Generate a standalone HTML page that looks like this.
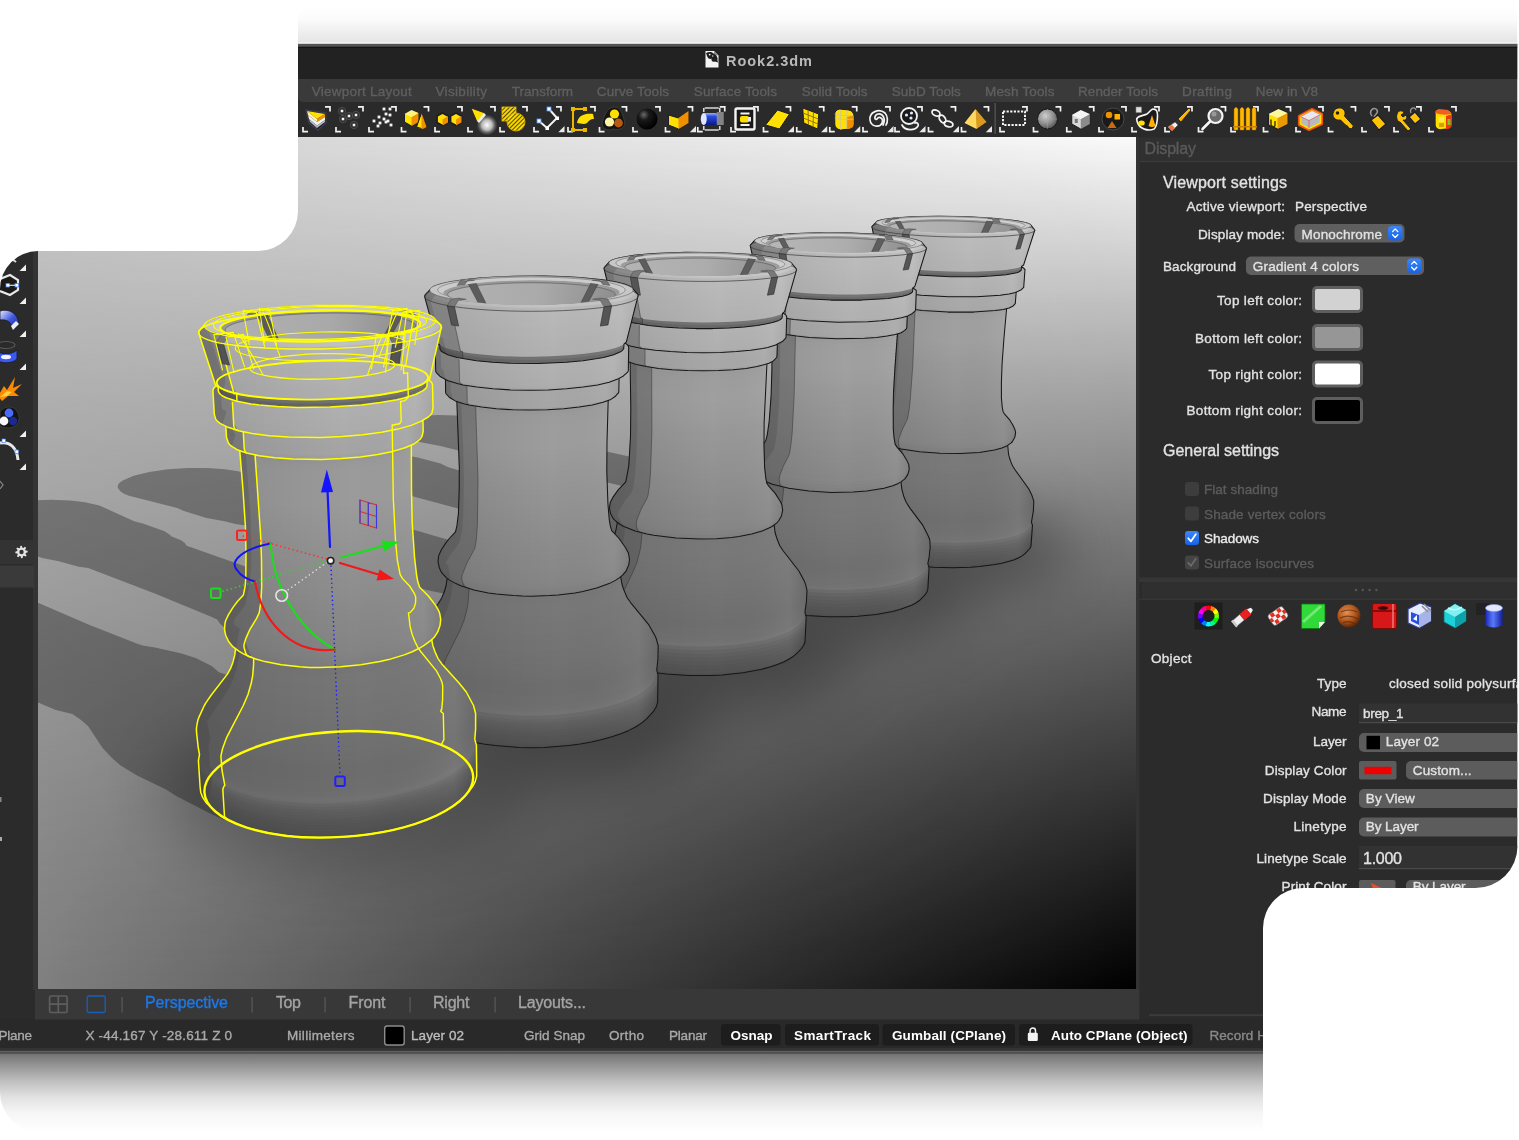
<!DOCTYPE html>
<html lang="en"><head><meta charset="utf-8"><title>Rook2.3dm</title>
<style>
html,body{margin:0;padding:0;background:#fff;}
body{width:1519px;height:1140px;overflow:hidden;position:relative;font-family:"Liberation Sans", Arial, sans-serif;}
svg{position:absolute;left:0;top:0;display:block}
svg text{font-family:"Liberation Sans", Arial, sans-serif;white-space:pre}
</style></head><body>
<svg width="1519" height="1140" viewBox="0 0 1519 1140">
<defs>
<linearGradient id="gTop" x1="0" y1="0" x2="0" y2="1"><stop offset="0" stop-color="#ffffff"/><stop offset="0.35" stop-color="#fbfbfb"/><stop offset="1" stop-color="#e3e3e3"/></linearGradient>
<linearGradient id="gBot" x1="0" y1="0" x2="0" y2="1"><stop offset="0" stop-color="#4a4a4a"/><stop offset="0.04" stop-color="#4a4a4a"/><stop offset="0.052" stop-color="#747474"/><stop offset="0.19" stop-color="#959595"/><stop offset="0.385" stop-color="#c0c0c0"/><stop offset="0.58" stop-color="#e2e2e2"/><stop offset="0.77" stop-color="#f6f6f6"/><stop offset="0.96" stop-color="#fefefe"/><stop offset="1" stop-color="#ffffff"/></linearGradient>
<linearGradient id="gBlue" x1="0" y1="0" x2="0" y2="1"><stop offset="0" stop-color="#3b86f7"/><stop offset="1" stop-color="#1763e6"/></linearGradient>
</defs>
<!-- top soft strip -->
<path d="M298,44 V18 A12,12 0 0 1 310,6 H1505.5 A12,12 0 0 1 1517.5,18 V44 Z" fill="url(#gTop)"/>
<!-- bottom shadow -->
<path d="M0,1050 H1300 V1132 H40 A40,40 0 0 1 0,1092 Z" fill="url(#gBot)"/>
<!-- window -->
<rect x="0" y="44" width="1517.5" height="1008" fill="#2b2b2b"/>
<rect x="298" y="44" width="1219.5" height="35" fill="#222222"/>
<rect x="298" y="42" width="1219.5" height="2" fill="#f2f2f2"/><rect x="298" y="43.8" width="1219.5" height="3" fill="#555555"/><rect x="298" y="46.8" width="1219.5" height="1.2" fill="#141414"/>
<path d="M298,79 H1517 V102 H303 A5,5 0 0 1 298,97 Z" fill="#3a3a3a"/>
<rect x="298" y="102" width="1219" height="35" fill="#2a2a2a"/>
<!-- left sidebar -->
<rect x="0" y="251" width="38" height="770" fill="#2b2b2b"/><rect x="33" y="251" width="5" height="739" fill="#343434"/>
<!-- right panel -->
<rect x="1136" y="137" width="381" height="884" fill="#2b2b2b"/>
<path d="M1139.5,161.5 V141 A4,4 0 0 1 1143.500,137.5 H1517 V161.500 Z" fill="#303030"/>
<rect x="1139" y="161" width="378" height="1.2" fill="#3b3b3b"/>
<rect x="1136" y="137" width="3.5" height="884" fill="#333333"/>
<!-- viewport tab row -->
<rect x="35" y="989" width="1104" height="31" fill="#383838"/>
<!-- status bar -->
<rect x="0" y="1019.5" width="1517" height="32" fill="#292929"/>
<rect x="0" y="1048" width="1517.5" height="3" fill="#333333"/><rect x="0" y="1050.8" width="1517.5" height="1.5" fill="#606060"/>

<defs>
<clipPath id="vpclip"><rect x="38" y="137" width="1098" height="852"/></clipPath>
<linearGradient id="bgB" x1="0" x2="1" y1="0" y2="0"><stop offset="0" stop-color="#969696"/><stop offset="1" stop-color="#000"/></linearGradient>
<linearGradient id="bgT" x1="0" x2="1" y1="0" y2="0"><stop offset="0" stop-color="#d2d2d2"/><stop offset="1" stop-color="#fff"/></linearGradient>
<linearGradient id="bgM" x1="0" x2="0" y1="0" y2="1"><stop offset="0" stop-color="#fff"/><stop offset="1" stop-color="#000"/></linearGradient>
<mask id="bgmask" maskUnits="userSpaceOnUse" x="38" y="137" width="1098" height="852"><rect x="38" y="137" width="1098" height="852" fill="url(#bgM)"/></mask>
<linearGradient id="gdark" x1="0" x2="0" y1="0" y2="1"><stop offset="0" stop-color="#000" stop-opacity="0.02"/><stop offset="0.31" stop-color="#000" stop-opacity="0.088"/><stop offset="0.6" stop-color="#000" stop-opacity="0.125"/><stop offset="0.8" stop-color="#000" stop-opacity="0.145"/><stop offset="1" stop-color="#000" stop-opacity="0.15"/></linearGradient>
<filter id="aoblur" x="-50%" y="-50%" width="200%" height="200%"><feGaussianBlur stdDeviation="30"/></filter>
<linearGradient id="lg4_0" gradientUnits="userSpaceOnUse" x1="840.9" x2="1033.9" y1="0" y2="0"><stop offset="0" stop-color="#000" stop-opacity=".09"/><stop offset=".6" stop-color="#000" stop-opacity="0"/><stop offset=".92" stop-color="#fff" stop-opacity=".05"/><stop offset="1" stop-color="#000" stop-opacity=".05"/></linearGradient>
<linearGradient id="lg4_1" gradientUnits="userSpaceOnUse" x1="868.1" x2="1015.6" y1="0" y2="0"><stop offset="0" stop-color="#000" stop-opacity=".09"/><stop offset=".6" stop-color="#000" stop-opacity="0"/><stop offset=".92" stop-color="#fff" stop-opacity=".05"/><stop offset="1" stop-color="#000" stop-opacity=".05"/></linearGradient>
<linearGradient id="lg4_2" gradientUnits="userSpaceOnUse" x1="882.6" x2="1016.4" y1="0" y2="0"><stop offset="0" stop-color="#000" stop-opacity=".09"/><stop offset=".6" stop-color="#000" stop-opacity="0"/><stop offset=".92" stop-color="#fff" stop-opacity=".05"/><stop offset="1" stop-color="#000" stop-opacity=".05"/></linearGradient>
<linearGradient id="lg4_3" gradientUnits="userSpaceOnUse" x1="876.3" x2="1025" y1="0" y2="0"><stop offset="0" stop-color="#000" stop-opacity=".09"/><stop offset=".6" stop-color="#000" stop-opacity="0"/><stop offset=".92" stop-color="#fff" stop-opacity=".05"/><stop offset="1" stop-color="#000" stop-opacity=".05"/></linearGradient>
<linearGradient id="lg4_4" gradientUnits="userSpaceOnUse" x1="871.9" x2="1034.8" y1="0" y2="0"><stop offset="0" stop-color="#000" stop-opacity=".09"/><stop offset=".6" stop-color="#000" stop-opacity="0"/><stop offset=".92" stop-color="#fff" stop-opacity=".05"/><stop offset="1" stop-color="#000" stop-opacity=".05"/></linearGradient>
<clipPath id="hole4"><ellipse cx="953.3" cy="226" rx="67.3" ry="6.8" transform="rotate(1.14 953.3 226)"/></clipPath>
<linearGradient id="in4" x1="0" x2="1" y1="0" y2="0"><stop offset="0" stop-color="#b6b6b6"/><stop offset="0.55" stop-color="#aeaeae"/><stop offset="1" stop-color="#919191"/></linearGradient>
<linearGradient id="lg3_0" gradientUnits="userSpaceOnUse" x1="723" x2="930.2" y1="0" y2="0"><stop offset="0" stop-color="#000" stop-opacity=".09"/><stop offset=".6" stop-color="#000" stop-opacity="0"/><stop offset=".92" stop-color="#fff" stop-opacity=".05"/><stop offset="1" stop-color="#000" stop-opacity=".05"/></linearGradient>
<linearGradient id="lg3_1" gradientUnits="userSpaceOnUse" x1="750.2" x2="909.2" y1="0" y2="0"><stop offset="0" stop-color="#000" stop-opacity=".09"/><stop offset=".6" stop-color="#000" stop-opacity="0"/><stop offset=".92" stop-color="#fff" stop-opacity=".05"/><stop offset="1" stop-color="#000" stop-opacity=".05"/></linearGradient>
<linearGradient id="lg3_2" gradientUnits="userSpaceOnUse" x1="763.3" x2="907.6" y1="0" y2="0"><stop offset="0" stop-color="#000" stop-opacity=".09"/><stop offset=".6" stop-color="#000" stop-opacity="0"/><stop offset=".92" stop-color="#fff" stop-opacity=".05"/><stop offset="1" stop-color="#000" stop-opacity=".05"/></linearGradient>
<linearGradient id="lg3_3" gradientUnits="userSpaceOnUse" x1="756.2" x2="916.5" y1="0" y2="0"><stop offset="0" stop-color="#000" stop-opacity=".09"/><stop offset=".6" stop-color="#000" stop-opacity="0"/><stop offset=".92" stop-color="#fff" stop-opacity=".05"/><stop offset="1" stop-color="#000" stop-opacity=".05"/></linearGradient>
<linearGradient id="lg3_4" gradientUnits="userSpaceOnUse" x1="750.2" x2="926.5" y1="0" y2="0"><stop offset="0" stop-color="#000" stop-opacity=".09"/><stop offset=".6" stop-color="#000" stop-opacity="0"/><stop offset=".92" stop-color="#fff" stop-opacity=".05"/><stop offset="1" stop-color="#000" stop-opacity=".05"/></linearGradient>
<clipPath id="hole3"><ellipse cx="838.3" cy="244.2" rx="72.7" ry="8.2" transform="rotate(0.87 838.3 244.2)"/></clipPath>
<linearGradient id="in3" x1="0" x2="1" y1="0" y2="0"><stop offset="0" stop-color="#b6b6b6"/><stop offset="0.55" stop-color="#aeaeae"/><stop offset="1" stop-color="#919191"/></linearGradient>
<linearGradient id="lg2_0" gradientUnits="userSpaceOnUse" x1="582.4" x2="807" y1="0" y2="0"><stop offset="0" stop-color="#000" stop-opacity=".09"/><stop offset=".6" stop-color="#000" stop-opacity="0"/><stop offset=".92" stop-color="#fff" stop-opacity=".05"/><stop offset="1" stop-color="#000" stop-opacity=".05"/></linearGradient>
<linearGradient id="lg2_1" gradientUnits="userSpaceOnUse" x1="609.4" x2="782.7" y1="0" y2="0"><stop offset="0" stop-color="#000" stop-opacity=".09"/><stop offset=".6" stop-color="#000" stop-opacity="0"/><stop offset=".92" stop-color="#fff" stop-opacity=".05"/><stop offset="1" stop-color="#000" stop-opacity=".05"/></linearGradient>
<linearGradient id="lg2_2" gradientUnits="userSpaceOnUse" x1="620.4" x2="777.5" y1="0" y2="0"><stop offset="0" stop-color="#000" stop-opacity=".09"/><stop offset=".6" stop-color="#000" stop-opacity="0"/><stop offset=".92" stop-color="#fff" stop-opacity=".05"/><stop offset="1" stop-color="#000" stop-opacity=".05"/></linearGradient>
<linearGradient id="lg2_3" gradientUnits="userSpaceOnUse" x1="612.1" x2="786.7" y1="0" y2="0"><stop offset="0" stop-color="#000" stop-opacity=".09"/><stop offset=".6" stop-color="#000" stop-opacity="0"/><stop offset=".92" stop-color="#fff" stop-opacity=".05"/><stop offset="1" stop-color="#000" stop-opacity=".05"/></linearGradient>
<linearGradient id="lg2_4" gradientUnits="userSpaceOnUse" x1="604" x2="796.6" y1="0" y2="0"><stop offset="0" stop-color="#000" stop-opacity=".09"/><stop offset=".6" stop-color="#000" stop-opacity="0"/><stop offset=".92" stop-color="#fff" stop-opacity=".05"/><stop offset="1" stop-color="#000" stop-opacity=".05"/></linearGradient>
<clipPath id="hole2"><ellipse cx="700.3" cy="265.9" rx="79.4" ry="10" transform="rotate(0.44 700.3 265.9)"/></clipPath>
<linearGradient id="in2" x1="0" x2="1" y1="0" y2="0"><stop offset="0" stop-color="#b4b4b4"/><stop offset="0.55" stop-color="#acacac"/><stop offset="1" stop-color="#909090"/></linearGradient>
<linearGradient id="lg1_0" gradientUnits="userSpaceOnUse" x1="410.5" x2="658.3" y1="0" y2="0"><stop offset="0" stop-color="#000" stop-opacity=".09"/><stop offset=".6" stop-color="#000" stop-opacity="0"/><stop offset=".92" stop-color="#fff" stop-opacity=".05"/><stop offset="1" stop-color="#000" stop-opacity=".05"/></linearGradient>
<linearGradient id="lg1_1" gradientUnits="userSpaceOnUse" x1="438" x2="629.5" y1="0" y2="0"><stop offset="0" stop-color="#000" stop-opacity=".09"/><stop offset=".6" stop-color="#000" stop-opacity="0"/><stop offset=".92" stop-color="#fff" stop-opacity=".05"/><stop offset="1" stop-color="#000" stop-opacity=".05"/></linearGradient>
<linearGradient id="lg1_2" gradientUnits="userSpaceOnUse" x1="445.2" x2="619.2" y1="0" y2="0"><stop offset="0" stop-color="#000" stop-opacity=".09"/><stop offset=".6" stop-color="#000" stop-opacity="0"/><stop offset=".92" stop-color="#fff" stop-opacity=".05"/><stop offset="1" stop-color="#000" stop-opacity=".05"/></linearGradient>
<linearGradient id="lg1_3" gradientUnits="userSpaceOnUse" x1="435.2" x2="628.7" y1="0" y2="0"><stop offset="0" stop-color="#000" stop-opacity=".09"/><stop offset=".6" stop-color="#000" stop-opacity="0"/><stop offset=".92" stop-color="#fff" stop-opacity=".05"/><stop offset="1" stop-color="#000" stop-opacity=".05"/></linearGradient>
<linearGradient id="lg1_4" gradientUnits="userSpaceOnUse" x1="424.6" x2="638.2" y1="0" y2="0"><stop offset="0" stop-color="#000" stop-opacity=".09"/><stop offset=".6" stop-color="#000" stop-opacity="0"/><stop offset=".92" stop-color="#fff" stop-opacity=".05"/><stop offset="1" stop-color="#000" stop-opacity=".05"/></linearGradient>
<clipPath id="hole1"><ellipse cx="531.5" cy="292.5" rx="88.1" ry="12.3" transform="rotate(-0.24 531.5 292.5)"/></clipPath>
<linearGradient id="in1" x1="0" x2="1" y1="0" y2="0"><stop offset="0" stop-color="#b2b2b2"/><stop offset="0.55" stop-color="#aaaaaa"/><stop offset="1" stop-color="#8f8f8f"/></linearGradient>
<linearGradient id="lg0_0" gradientUnits="userSpaceOnUse" x1="196.4" x2="476.8" y1="0" y2="0"><stop offset="0" stop-color="#000" stop-opacity=".09"/><stop offset=".6" stop-color="#000" stop-opacity="0"/><stop offset=".92" stop-color="#fff" stop-opacity=".05"/><stop offset="1" stop-color="#000" stop-opacity=".05"/></linearGradient>
<linearGradient id="lg0_1" gradientUnits="userSpaceOnUse" x1="224.5" x2="440.7" y1="0" y2="0"><stop offset="0" stop-color="#000" stop-opacity=".09"/><stop offset=".6" stop-color="#000" stop-opacity="0"/><stop offset=".92" stop-color="#fff" stop-opacity=".05"/><stop offset="1" stop-color="#000" stop-opacity=".05"/></linearGradient>
<linearGradient id="lg0_2" gradientUnits="userSpaceOnUse" x1="225.4" x2="423.2" y1="0" y2="0"><stop offset="0" stop-color="#000" stop-opacity=".09"/><stop offset=".6" stop-color="#000" stop-opacity="0"/><stop offset=".92" stop-color="#fff" stop-opacity=".05"/><stop offset="1" stop-color="#000" stop-opacity=".05"/></linearGradient>
<linearGradient id="lg0_3" gradientUnits="userSpaceOnUse" x1="212.9" x2="433" y1="0" y2="0"><stop offset="0" stop-color="#000" stop-opacity=".09"/><stop offset=".6" stop-color="#000" stop-opacity="0"/><stop offset=".92" stop-color="#fff" stop-opacity=".05"/><stop offset="1" stop-color="#000" stop-opacity=".05"/></linearGradient>
<linearGradient id="lg0_4" gradientUnits="userSpaceOnUse" x1="198.7" x2="441.4" y1="0" y2="0"><stop offset="0" stop-color="#000" stop-opacity=".09"/><stop offset=".6" stop-color="#000" stop-opacity="0"/><stop offset=".92" stop-color="#fff" stop-opacity=".05"/><stop offset="1" stop-color="#000" stop-opacity=".05"/></linearGradient>
<clipPath id="hole0"><ellipse cx="320.3" cy="325.9" rx="100.1" ry="15.5" transform="rotate(-1.28 320.3 325.9)"/></clipPath>
<linearGradient id="in0" x1="0" x2="1" y1="0" y2="0"><stop offset="0" stop-color="#b0b0b0"/><stop offset="0.55" stop-color="#a9a9a9"/><stop offset="1" stop-color="#8d8d8d"/></linearGradient>
</defs>
<g clip-path="url(#vpclip)">
<rect x="38" y="137" width="1098" height="852" fill="url(#bgB)"/>
<rect x="38" y="137" width="1098" height="852" fill="url(#bgT)" mask="url(#bgmask)"/>
<path d="M485.8,455.5 498.5,458.2 513.7,459.9 638.7,490.1 646.9,492.4 657.1,497.2 669.8,501.9 690,506.7 710,509.9 724.4,514.3 752.5,526.3 776,534.7 867.9,557.7 887.4,561.8 907.5,564.8 937.4,567.4 952.5,567.8 981,566.4 993.6,564.8 1004.6,562.6 1013.7,559.9 1020.7,556.8 1025.5,553.3 1027.9,549.6 1028,545.7 1025.8,541.8 1021.4,538 1015,534.3 1003.1,529.5 993.1,526.3 976.1,522 884.1,502.5 851.4,497.7 810.3,492.8 798,490.8 787,488.8 777.9,485.6 761.3,481.5 739.6,477.9 715,475.1 695.2,471.1 579,445.5 571.7,442.2 560.7,439.4 552.3,436.1 521.3,429.4 482.7,419 468.7,416.8 455.9,415.6 439,415.1 421.7,415.6 405.5,417.2 392,419.8 382.3,423.1 379.3,424.9 377.6,426.8 377.4,428.6 378.5,430.5 381,432.3 386.9,435.2 392.3,436.7 440.4,446.1 470.4,453.5ZM363.5,485.8 376.4,488.8 392.1,490.8 461.7,509.6 517.5,525.6 525.7,528.2 535.4,533.9 547.7,539.3 568.2,545 589,548.6 603.4,553.8 610.1,556.7 630.5,567.8 653.8,577.8 671.4,583.3 700.3,591 747.9,604.9 768.1,609.8 789.2,613.3 805,615.3 821.3,616.4 837.7,616.8 853.8,616.4 869.1,615.3 883.2,613.3 895.6,610.7 906.1,607.5 914.5,603.8 920.4,599.6 923.9,595.2 924.8,590.7 923.3,586.1 919.3,581.6 913.2,577.2 901.4,571.6 891.2,567.8 873.7,562.9 778.8,540 744.7,534.4 701.7,528.8 688.9,526.5 677.6,524.2 668.6,520.4 651.8,515.6 629.4,511.5 603.7,508.2 583.5,503.7 466.3,474.3 463.3,472.2 459.4,470.5 448.4,467.3 440.5,463.6 417.9,457.6 409.3,456 371.3,444.1 364.7,442.7 335.2,439.9 316.8,439.9 298.4,441.1 281.7,443.5 268.3,446.8 259.4,450.8 257.1,452.9 256.1,455.1 256.7,457.2 260.4,460.5 269.5,464.3 317.9,474.9 324.2,477.2 347.7,483.4ZM224.5,521.2 235.5,524.1 251.8,526.4 320.8,548.3 376.3,567 384.3,570.1 388.1,573.5 393.1,576.8 404.8,583.1 411.8,585.9 425.4,589.8 446.8,594.2 461,600.2 467.4,603.7 486.5,616.9 509,628.8 526.6,635.4 556.1,644.6 566.4,648.7 604.4,661.3 625.3,667.2 647.6,671.5 664.4,673.8 682,675.2 700,675.7 717.8,675.2 734.9,673.8 750.8,671.5 765.2,668.3 777.5,664.4 787.5,659.9 795.1,655 799.9,649.7 802,644.2 801.4,638.7 798.2,633.3 792.5,628.1 781,621.4 770.8,616.9 753,611 703.2,597.4 675.5,589 655.5,584 620,577.4 574.8,570.8 561.6,568 550,565.3 541.4,561 524.5,555.4 501.4,550.5 474.6,546.7 454.1,541.5 336.8,507.4 334.3,505 330.6,503 319.9,499.3 312.5,495 290.1,488.2 281.5,486.3 244.7,472.7 238.1,471.2 225,469.3 207.5,467.9 187.8,467.9 167.8,469.3 149.2,472 133.7,475.8 122.8,480.4 119.5,482.8 117.8,485.3 117.7,487.7 120.5,491.5 123.9,493.8 128.9,495.8 177.2,508.1 183.2,510.7 206.4,517.9ZM58.7,561.2 78.6,566.8 88.2,568 155.4,593.7 209.4,615.9 217.1,619.6 220.1,623.7 224.5,627.6 235.2,635.2 241.9,638.4 255.4,643.2 277.5,648.4 291.1,655.7 296.9,659.8 313.6,675.8 324.6,683.9 334.7,690.2 352,698.3 381.6,709.5 391.7,714.4 429.9,729.9 451.3,737.1 474.7,742.4 492.7,745.3 511.8,747.1 531.6,747.7 551.6,747.1 571,745.3 589.3,742.4 606.1,738.5 620.9,733.7 633.2,728.2 642.9,722.1 649.7,715.7 653.5,709 654.3,702.3 652.2,695.7 647.3,689.4 636.4,681.2 626.4,675.8 608.3,668.7 569.8,655.7 557.5,652.2 529.5,642.2 509.1,636.2 472.1,628.3 424.8,620.4 411.2,617.2 399.4,614 391.3,608.8 374.7,602.1 351,596.4 323.1,591.9 302.5,585.7 249.8,568 186.7,545.7 184.8,542.9 181.5,540.6 171.1,536.3 170.2,535 164.6,531.3 142.9,523.4 134.2,521.2 99.4,505.5 85,502.3 70.8,500.6 50.9,499.7 33,500.3 33,554.9 42.1,558ZM36.7,701.9 55.8,709.9 72.4,714.1 80.4,719.5 88,725.9 102.4,747.8 111.7,757.7 120.6,765.5 137,775.6 166.1,789.6 175.7,795.7 213.1,815.1 234.5,824.3 251.7,829.3 278.3,834.6 299.2,836.8 321.3,837.6 343.9,836.8 366.3,834.6 387.9,830.9 408,826 426,820 441.6,813.1 454.2,805.4 463.8,797.3 470.1,788.9 473,780.6 472.6,772.4 469,764.5 459.4,754.4 449.9,747.7 432,739 393.3,723.1 380.8,718.8 353,706.5 332.3,699.2 315.8,694.7 294.2,689.6 244.7,680 223.2,673.8 218.9,672.2 211.7,666 195.7,658 181.6,653.4 154.9,647.5 142.7,645.6 138,644.1 89.1,624.7 33,600.6 33,699.6Z" fill="#000" fill-opacity="0.3"/>
<rect x="38" y="137" width="1098" height="852" fill="url(#gdark)"/>
<g filter="url(#aoblur)" opacity="0.36">
<ellipse cx="346.7" cy="790.5" rx="187" ry="78.7" fill="#000" fill-opacity="0.6"/>
<ellipse cx="542.9" cy="711.1" rx="165.9" ry="74.7" fill="#000" fill-opacity="1"/>
<ellipse cx="701.9" cy="646.8" rx="150.4" ry="61.2" fill="#000" fill-opacity="1"/>
<ellipse cx="833.3" cy="593.7" rx="138.4" ry="50.7" fill="#000" fill-opacity="1"/>
<ellipse cx="943.8" cy="549.1" rx="128.6" ry="42.6" fill="#000" fill-opacity="1"/>
</g>
<g id="rook4">
<ellipse cx="935.8" cy="543" rx="92.6" ry="24.3" transform="rotate(2.99 935.8 543)" fill="#505050"/>
<ellipse cx="935.9" cy="541.4" rx="93.9" ry="24.6" transform="rotate(2.98 935.9 541.4)" fill="#525252"/>
<ellipse cx="936" cy="539.9" rx="95.3" ry="24.9" transform="rotate(2.97 936 539.9)" fill="#545454"/>
<ellipse cx="936.2" cy="536.8" rx="95.3" ry="24.8" transform="rotate(2.95 936.2 536.8)" fill="#565656"/>
<ellipse cx="936.4" cy="533.7" rx="95.4" ry="24.6" transform="rotate(2.93 936.4 533.7)" fill="#595959"/>
<ellipse cx="936.5" cy="530.7" rx="95.4" ry="24.5" transform="rotate(2.91 936.5 530.7)" fill="#5c5c5c"/>
<ellipse cx="936.7" cy="527.6" rx="95.5" ry="24.4" transform="rotate(2.89 936.7 527.6)" fill="#606060"/>
<ellipse cx="936.9" cy="524.5" rx="95.5" ry="24.2" transform="rotate(2.87 936.9 524.5)" fill="#656565"/>
<ellipse cx="937" cy="521.5" rx="95.6" ry="24.1" transform="rotate(2.85 937 521.5)" fill="#6c6c6c"/>
<ellipse cx="937.2" cy="519.1" rx="93.9" ry="23.5" transform="rotate(2.84 937.2 519.1)" fill="#757575"/>
<ellipse cx="937.3" cy="516" rx="94.4" ry="23.5" transform="rotate(2.82 937.3 516)" fill="#737373"/>
<ellipse cx="937.6" cy="512.4" rx="95.1" ry="23.5" transform="rotate(2.80 937.6 512.4)" fill="#727272"/>
<ellipse cx="937.8" cy="508.8" rx="95.5" ry="23.4" transform="rotate(2.78 937.8 508.8)" fill="#717171"/>
<ellipse cx="938" cy="505.1" rx="95.7" ry="23.3" transform="rotate(2.75 938 505.1)" fill="#717171"/>
<ellipse cx="938.2" cy="501.4" rx="95.9" ry="23.2" transform="rotate(2.73 938.2 501.4)" fill="#707070"/>
<ellipse cx="938.4" cy="497.8" rx="95.6" ry="22.9" transform="rotate(2.71 938.4 497.8)" fill="#707070"/>
<ellipse cx="938.6" cy="494.2" rx="94.2" ry="22.4" transform="rotate(2.69 938.6 494.2)" fill="#717171"/>
<ellipse cx="938.7" cy="490.8" rx="92.5" ry="21.9" transform="rotate(2.67 938.7 490.8)" fill="#727272"/>
<ellipse cx="938.9" cy="487.6" rx="90.7" ry="21.3" transform="rotate(2.65 938.9 487.6)" fill="#737373"/>
<ellipse cx="939" cy="485.6" rx="89.2" ry="20.8" transform="rotate(2.64 939 485.6)" fill="#737373"/>
<ellipse cx="939" cy="483.6" rx="87.6" ry="20.4" transform="rotate(2.63 939 483.6)" fill="#747474"/>
<ellipse cx="939.1" cy="481.6" rx="86" ry="19.9" transform="rotate(2.61 939.1 481.6)" fill="#747474"/>
<ellipse cx="939.2" cy="479.6" rx="84.3" ry="19.5" transform="rotate(2.60 939.2 479.6)" fill="#757575"/>
<ellipse cx="939.3" cy="477.6" rx="82.8" ry="19" transform="rotate(2.59 939.3 477.6)" fill="#757575"/>
<ellipse cx="939.4" cy="475.5" rx="81.3" ry="18.6" transform="rotate(2.58 939.4 475.5)" fill="#767676"/>
<ellipse cx="939.5" cy="473.5" rx="79.7" ry="18.1" transform="rotate(2.56 939.5 473.5)" fill="#767676"/>
<ellipse cx="939.6" cy="471.5" rx="78.1" ry="17.7" transform="rotate(2.55 939.6 471.5)" fill="#777777"/>
<ellipse cx="939.7" cy="469.5" rx="76.5" ry="17.2" transform="rotate(2.54 939.7 469.5)" fill="#777777"/>
<ellipse cx="939.7" cy="467.4" rx="75" ry="16.8" transform="rotate(2.53 939.7 467.4)" fill="#787878"/>
<ellipse cx="939.8" cy="465.3" rx="73.6" ry="16.5" transform="rotate(2.52 939.8 465.3)" fill="#787878"/>
<ellipse cx="940" cy="462.1" rx="71.9" ry="16" transform="rotate(2.50 940 462.1)" fill="#787878"/>
<ellipse cx="940.2" cy="458.6" rx="70.4" ry="15.5" transform="rotate(2.48 940.2 458.6)" fill="#797979"/>
<ellipse cx="940.4" cy="455" rx="69.1" ry="15.1" transform="rotate(2.45 940.4 455)" fill="#7a7a7a"/>
<ellipse cx="940.6" cy="451.4" rx="68.1" ry="14.7" transform="rotate(2.43 940.6 451.4)" fill="#7a7a7a"/>
<ellipse cx="940.7" cy="447.7" rx="67.4" ry="14.5" transform="rotate(2.41 940.7 447.7)" fill="#7a7a7a"/>
<ellipse cx="941" cy="444" rx="66.9" ry="14.2" transform="rotate(2.39 941 444)" fill="#7a7a7a"/>
<ellipse cx="941.2" cy="440.2" rx="66.6" ry="14" transform="rotate(2.37 941.2 440.2)" fill="#797979"/>
<ellipse cx="941.2" cy="439" rx="66.6" ry="14" transform="rotate(2.36 941.2 439)" fill="#787878"/>
<path d="M849.4,480.4 845.6,486.6 843.1,492.1 842.4,501.6 843.1,512.9 841.8,515.5 840.9,536.1 841.7,538.6 843.4,541.1 848.3,546.7 856,551.4 866.9,555.9 880.7,559.9 888.5,561.6 914.8,565.7 943.1,567.6 970.8,567.2 995.1,564.6 1002,563.2 1013.7,559.9 1018.3,558 1025,553.7 1029.9,548.5 1031,546.1 1032.5,525.1 1031.4,522.3 1033.4,510.8 1033.8,501.2 1031.9,495.3 1028.7,488.7 1015.5,470.5 1011.3,463.1 1008.5,453.8 1007.8,441.3 1007.3,439.9 1004.4,437.1 995.8,433.1 987.5,430.7 972,427.8 960.2,426.3 941.5,425 922.8,424.8 905.6,425.8 891.2,427.8 883.8,429.7 878.4,431.9 875.4,434.4 874.8,435.7 872.6,448 868.9,456.8 864.1,463.8Z" fill="url(#lg4_0)"/>
<path d="M842.5,503.5 843.5,513.8 841.7,515.9 840.9,534.6 841.6,538.4 846.6,545 852.7,549.6 860.2,553.3 868.5,556.4 880.7,559.9 879.3,557.1 880.2,538.2 881.4,535.4 881,525 881.5,513.7 885.1,502.4 894.7,481.6 897.8,473.2 900.7,461.7 902.3,448.8 874.7,436 872.6,448.3 868.2,458.7 863.3,465.8 848.3,482.9 844.5,489.2 843,492.5Z" fill="#4a4a4a" fill-opacity=".40"/>
<path d="M842.5,503.5 843.3,514 841.7,515.9 841,536.4 842.7,540.1 847.4,545.7 852.3,549.4 857.2,552 855.1,549.1 856,530.4 857.6,527.8 856.8,517.5 857.3,506.3 862.1,495.6 877.8,471.6 882.2,460.8 884.7,449.5 885.3,444.4 874.7,436 872.6,448.3 868.2,458.7 863.3,465.8 848.3,482.9 844.5,489.2 843,492.5Z" fill="#303030" fill-opacity=".18"/>
<path d="M849.4,480.4 845.6,486.6 843.1,492.1 842.4,501.6 843.1,512.9 841.8,515.5 840.9,536.1 841.7,538.6 843.4,541.1 845.8,544.2 848.3,546.7 856,551.4 866.9,555.9 880.7,559.9 888.5,561.6 905.7,564.6 914.8,565.7 933.6,567.2 943.1,567.6 952.5,567.8 970.8,567.2 979.4,566.6 995.1,564.6 1002,563.2 1013.7,559.9 1018.3,558 1022.1,555.9 1025,553.7 1029.9,548.5 1031,546.1 1032.5,525.1 1031.4,522.3 1033.4,510.8 1033.8,501.2 1031.9,495.3 1028.7,488.7 1015.5,470.5 1012.8,466.3 1011.3,463.1 1009.4,457.5 1008.5,453.8 1007.8,446.4 1007.8,441.3 1007.3,439.9 1004.4,437.1 1002.1,435.7 995.8,433.1 987.5,430.7 972,427.8 960.2,426.3 941.5,425 922.8,424.8 905.6,425.8 891.2,427.8 883.8,429.7 878.4,431.9 875.4,434.4 874.8,435.7 874.2,440.7 872.6,448 871.4,451.5 868.9,456.8 867.1,459.9 864.1,463.8Z" fill="none" stroke="#161616" stroke-width="1.05" stroke-linejoin="round"/>
<path d="M880.7,559.9 879.3,557.1 880.2,538.2 881.4,535.4 881,525 881.5,513.7 885.1,502.4 894.7,481.6 897.8,473.2 900.7,461.7 902.3,448.8" fill="none" stroke="#222" stroke-opacity="0.7" stroke-width="0.6"/>
<ellipse cx="941.3" cy="439" rx="68.2" ry="14.3" transform="rotate(2.36 941.3 439)" fill="#7e7e7e"/>
<ellipse cx="941.3" cy="438" rx="70.3" ry="14.7" transform="rotate(2.35 941.3 438)" fill="#818181"/>
<ellipse cx="941.4" cy="436.6" rx="71.9" ry="15" transform="rotate(2.35 941.4 436.6)" fill="#838383"/>
<ellipse cx="941.7" cy="433.1" rx="73.5" ry="15.2" transform="rotate(2.33 941.7 433.1)" fill="#868686"/>
<ellipse cx="941.8" cy="430.1" rx="73.9" ry="15.2" transform="rotate(2.31 941.8 430.1)" fill="#888888"/>
<ellipse cx="942" cy="427.3" rx="73.1" ry="14.9" transform="rotate(2.29 942 427.3)" fill="#898989"/>
<ellipse cx="942.1" cy="424.6" rx="71.6" ry="14.5" transform="rotate(2.27 942.1 424.6)" fill="#8a8a8a"/>
<ellipse cx="942.2" cy="421.9" rx="69.8" ry="14" transform="rotate(2.26 942.2 421.9)" fill="#8a8a8a"/>
<ellipse cx="942.4" cy="419.3" rx="68.1" ry="13.6" transform="rotate(2.24 942.4 419.3)" fill="#8b8b8b"/>
<ellipse cx="942.4" cy="417.7" rx="66.7" ry="13.3" transform="rotate(2.23 942.4 417.7)" fill="#8b8b8b"/>
<ellipse cx="942.5" cy="416.1" rx="65.2" ry="12.9" transform="rotate(2.23 942.5 416.1)" fill="#8c8c8c"/>
<ellipse cx="942.6" cy="414.6" rx="63.7" ry="12.6" transform="rotate(2.22 942.6 414.6)" fill="#8c8c8c"/>
<ellipse cx="942.6" cy="413" rx="62.2" ry="12.2" transform="rotate(2.21 942.6 413)" fill="#8d8d8d"/>
<ellipse cx="942.8" cy="410.5" rx="60.6" ry="11.8" transform="rotate(2.19 942.8 410.5)" fill="#8d8d8d"/>
<ellipse cx="942.9" cy="407.9" rx="59.8" ry="11.6" transform="rotate(2.18 942.9 407.9)" fill="#8e8e8e"/>
<ellipse cx="943.1" cy="405" rx="59.2" ry="11.4" transform="rotate(2.16 943.1 405)" fill="#8f8f8f"/>
<ellipse cx="943.2" cy="402" rx="58.7" ry="11.2" transform="rotate(2.14 943.2 402)" fill="#909090"/>
<ellipse cx="943.4" cy="399" rx="58.2" ry="11" transform="rotate(2.13 943.4 399)" fill="#909090"/>
<ellipse cx="943.6" cy="395.8" rx="57.9" ry="10.9" transform="rotate(2.11 943.6 395.8)" fill="#919191"/>
<ellipse cx="943.7" cy="392.7" rx="57.7" ry="10.7" transform="rotate(2.09 943.7 392.7)" fill="#929292"/>
<ellipse cx="943.9" cy="389.6" rx="57.5" ry="10.6" transform="rotate(2.07 943.9 389.6)" fill="#939393"/>
<ellipse cx="944.1" cy="386.6" rx="57.3" ry="10.5" transform="rotate(2.05 944.1 386.6)" fill="#949494"/>
<ellipse cx="944.3" cy="383.5" rx="57.2" ry="10.4" transform="rotate(2.04 944.3 383.5)" fill="#949494"/>
<ellipse cx="944.4" cy="380.4" rx="57.1" ry="10.3" transform="rotate(2.02 944.4 380.4)" fill="#959595"/>
<ellipse cx="944.6" cy="377.4" rx="57" ry="10.2" transform="rotate(2.00 944.6 377.4)" fill="#969696"/>
<ellipse cx="944.8" cy="374.3" rx="56.9" ry="10.1" transform="rotate(1.98 944.8 374.3)" fill="#969696"/>
<ellipse cx="944.9" cy="371.2" rx="56.8" ry="10" transform="rotate(1.96 944.9 371.2)" fill="#979797"/>
<ellipse cx="945.1" cy="368.2" rx="56.7" ry="9.9" transform="rotate(1.95 945.1 368.2)" fill="#989898"/>
<ellipse cx="945.3" cy="365.1" rx="56.7" ry="9.8" transform="rotate(1.93 945.3 365.1)" fill="#989898"/>
<ellipse cx="945.5" cy="362" rx="56.7" ry="9.7" transform="rotate(1.91 945.5 362)" fill="#999999"/>
<ellipse cx="945.6" cy="358.9" rx="56.7" ry="9.6" transform="rotate(1.89 945.6 358.9)" fill="#9a9a9a"/>
<ellipse cx="945.8" cy="355.8" rx="56.7" ry="9.5" transform="rotate(1.88 945.8 355.8)" fill="#9a9a9a"/>
<ellipse cx="946" cy="352.7" rx="56.7" ry="9.4" transform="rotate(1.86 946 352.7)" fill="#9b9b9b"/>
<ellipse cx="946.2" cy="349.6" rx="56.8" ry="9.3" transform="rotate(1.84 946.2 349.6)" fill="#9c9c9c"/>
<ellipse cx="946.3" cy="346.6" rx="56.8" ry="9.3" transform="rotate(1.82 946.3 346.6)" fill="#9d9d9d"/>
<ellipse cx="946.5" cy="343.5" rx="56.9" ry="9.2" transform="rotate(1.80 946.5 343.5)" fill="#9e9e9e"/>
<ellipse cx="946.7" cy="340.4" rx="57" ry="9.1" transform="rotate(1.79 946.7 340.4)" fill="#9e9e9e"/>
<ellipse cx="946.9" cy="337.2" rx="57.1" ry="9" transform="rotate(1.77 946.9 337.2)" fill="#9f9f9f"/>
<ellipse cx="947" cy="334.1" rx="57.2" ry="8.9" transform="rotate(1.75 947 334.1)" fill="#a0a0a0"/>
<ellipse cx="947.2" cy="331" rx="57.3" ry="8.9" transform="rotate(1.73 947.2 331)" fill="#a0a0a0"/>
<ellipse cx="947.4" cy="327.9" rx="57.3" ry="8.8" transform="rotate(1.72 947.4 327.9)" fill="#a0a0a0"/>
<ellipse cx="947.6" cy="324.8" rx="57.4" ry="8.7" transform="rotate(1.70 947.6 324.8)" fill="#a0a0a0"/>
<ellipse cx="947.7" cy="321.7" rx="57.5" ry="8.6" transform="rotate(1.68 947.7 321.7)" fill="#a0a0a0"/>
<ellipse cx="947.9" cy="318.6" rx="57.6" ry="8.6" transform="rotate(1.66 947.9 318.6)" fill="#a0a0a0"/>
<ellipse cx="948.1" cy="315.4" rx="57.7" ry="8.5" transform="rotate(1.64 948.1 315.4)" fill="#a0a0a0"/>
<ellipse cx="948.3" cy="312.3" rx="57.9" ry="8.4" transform="rotate(1.63 948.3 312.3)" fill="#9f9f9f"/>
<ellipse cx="948.5" cy="309.2" rx="58" ry="8.3" transform="rotate(1.61 948.5 309.2)" fill="#9e9e9e"/>
<ellipse cx="948.6" cy="306.1" rx="58.1" ry="8.3" transform="rotate(1.59 948.6 306.1)" fill="#9b9b9b"/>
<ellipse cx="948.8" cy="302.9" rx="58.3" ry="8.2" transform="rotate(1.57 948.8 302.9)" fill="#979797"/>
<path d="M884,402.4 882.6,407 875,414.8 869.7,422.4 868.1,426.5 868.1,428 868.3,431 870.4,436.1 871.8,437.6 875.3,440.3 879.7,442.8 886.7,445.5 901.3,449.1 919.6,451.8 940,453.3 960.5,453.5 979.3,452.4 994.5,450.1 1001.9,447.9 1006.7,445.9 1010.6,443.4 1012.2,442 1014.9,437.1 1015.6,432.6 1015,429.7 1013.1,425.5 1009.9,420.2 1004.4,413.8 1003.1,411.7 1002.2,407 1001.4,397.7 1002.1,363.6 1007,304.3 1006.6,303.5 1002.1,301 989.3,298.1 970.6,295.9 948.9,294.7 927.2,294.7 908.6,295.9 895.8,298.1 891.1,300.3 890.6,301 889.7,341.4 888.7,362.9 886.2,390.2Z" fill="url(#lg4_1)"/>
<path d="M882.2,408.1 874.4,416.4 870.6,421.5 868.9,424.1 868.1,426.7 868.3,429.9 870.4,435.9 874.5,439.8 880.5,443.1 892.3,447 901.3,449.1 899.3,447.2 898.6,443.8 898.5,440.7 899.1,437.8 902.6,428.9 907.5,418.9 909.1,409.9 910.2,400.3 912.8,365.7 915.1,308.7 890.6,301.2 889,356.7 886.2,390.2 884.6,399.7Z" fill="#4a4a4a" fill-opacity=".40"/>
<path d="M882.2,408.1 874.4,416.4 868.9,424.1 868.1,426.7 868.4,431.3 870.6,436.3 873.4,439 878.6,442.2 883.8,444.5 880.9,442.1 879.8,438.9 879.7,435.9 880.4,433 881.9,430.1 885.2,424.5 890.5,417.7 892,415.1 892.8,412.4 894.6,403.2 895.8,393.7 898.4,359.5 900.1,306.1 890.6,301.2 889,356.7 886.2,390.2 884.6,399.7Z" fill="#303030" fill-opacity=".18"/>
<path d="M884,402.4 882.6,407 881.1,409 875,414.8 869.7,422.4 868.1,426.5 868.1,428 868.3,431 870.4,436.1 871.8,437.6 875.3,440.3 879.7,442.8 886.7,445.5 901.3,449.1 919.6,451.8 940,453.3 960.5,453.5 979.3,452.4 994.5,450.1 1001.9,447.9 1006.7,445.9 1010.6,443.4 1012.2,442 1014.9,437.1 1015.6,432.6 1015,429.7 1013.1,425.5 1009.9,420.2 1004.4,413.8 1003.1,411.7 1002.2,407 1001.4,397.7 1001.4,382.2 1002.1,363.6 1003.9,338.8 1007,304.3 1006.6,303.5 1005.7,302.7 1002.1,301 996.6,299.5 989.3,298.1 970.6,295.9 948.9,294.7 927.2,294.7 908.6,295.9 901.3,296.9 895.8,298.1 892.1,299.5 891.1,300.3 890.6,301 889.7,341.4 888.7,362.9 886.2,390.2Z" fill="none" stroke="#161616" stroke-width="1.05" stroke-linejoin="round"/>
<path d="M901.3,449.1 899.3,447.2 898.6,443.8 898.5,440.7 899.1,437.8 902.6,428.9 907.5,418.9 909.1,409.9 910.2,400.3 912.8,365.7 915.1,308.7" fill="none" stroke="#222" stroke-opacity="0.7" stroke-width="0.6"/>
<ellipse cx="948.9" cy="303" rx="64.8" ry="9.1" transform="rotate(1.57 948.9 303)" fill="#a1a1a1"/>
<ellipse cx="949" cy="301.2" rx="66.5" ry="9.3" transform="rotate(1.56 949 301.2)" fill="#a9a9a9"/>
<ellipse cx="949.2" cy="297.5" rx="66.5" ry="9.2" transform="rotate(1.54 949.2 297.5)" fill="#aaaaaa"/>
<ellipse cx="949.4" cy="293.7" rx="66.6" ry="9" transform="rotate(1.52 949.4 293.7)" fill="#aaaaaa"/>
<ellipse cx="949.7" cy="289.9" rx="66.6" ry="8.9" transform="rotate(1.50 949.7 289.9)" fill="#ababab"/>
<ellipse cx="949.8" cy="287.4" rx="66.6" ry="8.8" transform="rotate(1.48 949.8 287.4)" fill="#ababab"/>
<path d="M925.1,278.6 899.5,280.3 889.2,282.2 885,283.7 883.2,285.4 882.7,300 884.9,302.7 888.1,304.5 893.7,306.3 901.5,307.9 922.5,310.6 948,312.1 973.6,312.1 995.2,310.6 1003.3,309.4 1009.2,307.9 1012.7,306.3 1015.3,303.7 1016.4,288.9 1014.8,287.1 1007.7,284.5 995.9,282.2 974.6,279.8 949.8,278.6Z" fill="url(#lg4_2)"/>
<path d="M883.1,300.6 884.8,302.6 886.8,303.9 890.8,305.4 896.7,307 911.2,309.4 910.3,307.8 911.1,293.6 883.2,285.6 882.6,299.1Z" fill="#4a4a4a" fill-opacity=".40"/>
<path d="M882.7,300.1 885.1,302.8 886.4,303.7 894.6,306.5 893.3,304.8 893.9,290.8 883.2,285.6Z" fill="#303030" fill-opacity=".18"/>
<path d="M925.1,278.6 908.7,279.4 899.5,280.3 889.2,282.2 885,283.7 883.2,285.4 882.7,300 884.9,302.7 888.1,304.5 893.7,306.3 901.5,307.9 922.5,310.6 948,312.1 973.6,312.1 995.2,310.6 1003.3,309.4 1009.2,307.9 1012.7,306.3 1015.3,303.7 1016.4,288.9 1014.8,287.1 1007.7,284.5 995.9,282.2 974.6,279.8 949.8,278.6Z" fill="none" stroke="#161616" stroke-width="1.05" stroke-linejoin="round"/>
<path d="M911.2,309.4 910.3,307.8 911.1,293.6" fill="none" stroke="#222" stroke-opacity="0.7" stroke-width="0.6"/>
<ellipse cx="949.9" cy="287.4" rx="70.4" ry="9.3" transform="rotate(1.48 949.9 287.4)" fill="#a7a7a7"/>
<ellipse cx="949.9" cy="286.3" rx="72.4" ry="9.6" transform="rotate(1.48 949.9 286.3)" fill="#adadad"/>
<ellipse cx="950" cy="284.9" rx="73.8" ry="9.7" transform="rotate(1.47 950 284.9)" fill="#b2b2b2"/>
<ellipse cx="950.2" cy="281.6" rx="73.9" ry="9.6" transform="rotate(1.45 950.2 281.6)" fill="#b2b2b2"/>
<ellipse cx="950.4" cy="278.2" rx="73.9" ry="9.5" transform="rotate(1.43 950.4 278.2)" fill="#b3b3b3"/>
<ellipse cx="950.6" cy="274.8" rx="73.9" ry="9.3" transform="rotate(1.41 950.6 274.8)" fill="#b4b4b4"/>
<ellipse cx="950.8" cy="271.5" rx="74" ry="9.2" transform="rotate(1.39 950.8 271.5)" fill="#b5b5b5"/>
<ellipse cx="951" cy="268.1" rx="74" ry="9.1" transform="rotate(1.37 951 268.1)" fill="#b6b6b6"/>
<path d="M923.6,259 895.2,260.8 883.8,262.7 879.1,264.2 877.1,265.9 876.3,283.6 878.4,286 883.7,289 889.8,290.8 898.2,292.5 921.1,295.2 948.9,296.8 976.8,296.8 1000.3,295.2 1009.1,294 1015.5,292.5 1021.3,289.7 1023.7,287.4 1025,269.5 1023.1,267.7 1018.4,265.9 1002,262.7 978.3,260.3 950.9,259Z" fill="url(#lg4_3)"/>
<path d="M876.9,284.3 878.3,285.9 882.3,288.3 886.7,289.9 893.1,291.5 908.8,294 907,291.7 907.8,274.4 877.1,266.2 876.3,282.6Z" fill="#4a4a4a" fill-opacity=".40"/>
<path d="M876.4,283.7 878.6,286.1 881.9,288.1 890.7,291 888,288.6 888.8,271.6 877.1,266.2Z" fill="#303030" fill-opacity=".18"/>
<path d="M923.6,259 905.4,259.9 895.2,260.8 883.8,262.7 879.1,264.2 877.1,265.9 876.3,283.6 878.4,286 883.7,289 889.8,290.8 898.2,292.5 921.1,295.2 948.9,296.8 976.8,296.8 1000.3,295.2 1009.1,294 1015.5,292.5 1021.3,289.7 1023.7,287.4 1025,269.5 1023.1,267.7 1018.4,265.9 1011.3,264.2 1002,262.7 978.3,260.3 950.9,259Z" fill="none" stroke="#161616" stroke-width="1.05" stroke-linejoin="round"/>
<path d="M908.8,294 907,291.7 907.8,274.4" fill="none" stroke="#222" stroke-opacity="0.7" stroke-width="0.6"/>
<ellipse cx="950.9" cy="268.1" rx="70.4" ry="8.6" transform="rotate(1.37 950.9 268.1)" fill="#6a6a6a"/>
<ellipse cx="951.1" cy="265.4" rx="70.5" ry="8.6" transform="rotate(1.36 951.1 265.4)" fill="#757575"/>
<ellipse cx="951.2" cy="262.7" rx="70.5" ry="8.5" transform="rotate(1.34 951.2 262.7)" fill="#818181"/>
<ellipse cx="951.3" cy="262.8" rx="72.5" ry="8.7" transform="rotate(1.34 951.3 262.8)" fill="#b5b5b5"/>
<ellipse cx="951.4" cy="260.2" rx="73.2" ry="8.7" transform="rotate(1.33 951.4 260.2)" fill="#b5b5b5"/>
<ellipse cx="951.6" cy="257.5" rx="73.9" ry="8.7" transform="rotate(1.31 951.6 257.5)" fill="#b6b6b6"/>
<ellipse cx="951.8" cy="254.9" rx="74.6" ry="8.7" transform="rotate(1.30 951.8 254.9)" fill="#b6b6b6"/>
<ellipse cx="951.9" cy="252.3" rx="75.3" ry="8.6" transform="rotate(1.28 951.9 252.3)" fill="#b7b7b7"/>
<ellipse cx="952.1" cy="249.7" rx="76" ry="8.6" transform="rotate(1.27 952.1 249.7)" fill="#b8b8b8"/>
<ellipse cx="952.2" cy="247.1" rx="76.7" ry="8.6" transform="rotate(1.25 952.2 247.1)" fill="#b8b8b8"/>
<ellipse cx="952.4" cy="244.4" rx="77.4" ry="8.6" transform="rotate(1.24 952.4 244.4)" fill="#b9b9b9"/>
<ellipse cx="952.5" cy="241.8" rx="78.1" ry="8.5" transform="rotate(1.23 952.5 241.8)" fill="#bababa"/>
<ellipse cx="952.7" cy="239.2" rx="78.8" ry="8.5" transform="rotate(1.21 952.7 239.2)" fill="#bababa"/>
<ellipse cx="952.9" cy="236.5" rx="79.5" ry="8.5" transform="rotate(1.20 952.9 236.5)" fill="#bbbbbb"/>
<ellipse cx="953" cy="233.9" rx="80.2" ry="8.4" transform="rotate(1.18 953 233.9)" fill="#bbbbbb"/>
<ellipse cx="953.2" cy="231.3" rx="80.9" ry="8.4" transform="rotate(1.17 953.2 231.3)" fill="#bcbcbc"/>
<ellipse cx="953.3" cy="228.6" rx="81.6" ry="8.4" transform="rotate(1.15 953.3 228.6)" fill="#bdbdbd"/>
<ellipse cx="953.4" cy="226.4" rx="79.6" ry="8.1" transform="rotate(1.14 953.4 226.4)" fill="#c8c8c8"/>
<ellipse cx="953.5" cy="224.1" rx="77.6" ry="7.8" transform="rotate(1.12 953.5 224.1)" fill="#cacaca"/>
<path d="M871.9,226.6 878.9,261.6 880.7,263.1 880.6,266.9 882.8,268.6 884.8,269.5 894.8,272 909.9,274.1 922.3,275.3 950,276.7 978,276.7 990.5,276.1 1006.1,274.7 1016.6,272.7 1018.8,272 1021.2,270.3 1021.5,266.5 1023.6,265 1034.8,230 1030.5,224.6 1027,223 1016.7,220.8 995.2,218.4 967.9,216.8 938.8,216.2 911.7,216.8 890.5,218.4 883,219.5 878.1,220.8 876.7,221.5Z" fill="url(#lg4_4)"/>
<path d="M871.9,226.7 878.8,260.9 879.6,262.3 880.7,263 880.6,266.4 881.3,267.7 884.1,269.1 893.1,271.6 909.9,274.1 910.2,268.7 909,268.4 905.7,234.5 908.3,229.6 876,222.4Z" fill="#4a4a4a" fill-opacity=".40"/>
<path d="M871.9,226.7 879,261.7 880.7,263.1 880.7,267 884,269.1 891.9,271.3 892.1,266 890.3,265.2 884.7,231.8 888.3,227.1 876,222.4Z" fill="#303030" fill-opacity=".18"/>
<path d="M871.9,226.6 878.9,261.6 880.7,263.1 880.6,266.9 882.8,268.6 884.8,269.5 894.8,272 909.9,274.1 922.3,275.3 950,276.7 978,276.7 990.5,276.1 1006.1,274.7 1016.6,272.7 1018.8,272 1021.2,270.3 1021.5,266.5 1023.6,265 1034.8,230 1030.5,224.6 1027,223 1016.7,220.8 995.2,218.4 967.9,216.8 938.8,216.2 911.7,216.8 890.5,218.4 883,219.5 878.1,220.8 876.7,221.5Z" fill="none" stroke="#161616" stroke-width="1.05" stroke-linejoin="round"/>
<path d="M909.9,274.1 910.2,268.7 909,268.9 905.7,234.5 908.3,229.6" fill="none" stroke="#222" stroke-opacity="0.7" stroke-width="0.6"/>
<ellipse cx="953.3" cy="228.6" rx="81.6" ry="8.4" transform="rotate(1.15 953.3 228.6)" fill="none" stroke="#3a3a3a" stroke-width="0.7"/>
<ellipse cx="953.5" cy="224.1" rx="77.6" ry="7.8" transform="rotate(1.12 953.5 224.1)" fill="#cacaca" stroke="#555" stroke-width="0.5"/>
<ellipse cx="953.5" cy="224.1" rx="71.6" ry="7.2" transform="rotate(1.12 953.5 224.1)" fill="#d0d0d0" stroke="#707070" stroke-width="0.6"/>
<g clip-path="url(#hole4)">
<ellipse cx="953.3" cy="226" rx="68.1" ry="6.9" transform="rotate(1.14 953.3 226)" fill="#9e9e9e"/>
<ellipse cx="953.2" cy="227.5" rx="64" ry="6.5" transform="rotate(1.14 953.2 227.5)" fill="url(#in4)" stroke="#555" stroke-width="0.6"/>
<ellipse cx="952.9" cy="231.9" rx="61.2" ry="6.4" transform="rotate(1.17 952.9 231.9)" fill="url(#in4)"/>
<ellipse cx="952.6" cy="236.2" rx="58.6" ry="6.2" transform="rotate(1.19 952.6 236.2)" fill="url(#in4)"/>
<ellipse cx="952.3" cy="240.6" rx="56.1" ry="6.1" transform="rotate(1.22 952.3 240.6)" fill="url(#in4)"/>
<ellipse cx="952" cy="245" rx="53.6" ry="6" transform="rotate(1.24 952 245)" fill="url(#in4)"/>
<ellipse cx="951.8" cy="249.3" rx="51.2" ry="5.8" transform="rotate(1.27 951.8 249.3)" fill="url(#in4)"/>
<ellipse cx="951.5" cy="253.6" rx="48.8" ry="5.6" transform="rotate(1.29 951.5 253.6)" fill="url(#in4)"/>
<ellipse cx="951.5" cy="253.6" rx="48.8" ry="5.6" transform="rotate(1.29 951.5 253.6)" fill="#a2a2a2" stroke="#666" stroke-width="0.5"/>
<path d="M898.7,218.6 894.1,219.2 905.4,238.7 909.6,238.1Z" fill="#5e5e5e" stroke="#3a3a3a" stroke-width="0.5"/>
<path d="M994.5,219.2 987.8,218.6 978.9,238.1 984.9,238.7Z" fill="#5e5e5e" stroke="#3a3a3a" stroke-width="0.5"/>
</g>
<path d="M898.7,218.6 892.9,218.1 889.3,222.1 884.7,222.7 888.3,218.6 894.1,219.2Z" fill="#787878" stroke="#3a3a3a" stroke-width="0.4"/>
<path d="M994.5,219.2 998.4,218.6 1000.4,222.7 993.8,222.1 991.8,218.1 987.8,218.6Z" fill="#787878" stroke="#3a3a3a" stroke-width="0.4"/>
<path d="M909.4,228.7 905,229.3 902.2,234.2 908.9,234.8 911.7,229.9 916.2,229.3Z" fill="#7a7a7a" stroke="#3a3a3a" stroke-width="0.4"/>
<path d="M902.4,234.2 909.1,234.8 910.5,249.3 903.8,248.6Z" fill="#565656" stroke="#2a2a2a" stroke-width="0.6"/>
<path d="M1010.2,229.3 1016.7,229.9 1020.2,234.8 1024.7,234.2 1021.2,229.3 1014.7,228.7Z" fill="#7a7a7a" stroke="#3a3a3a" stroke-width="0.4"/>
<path d="M1020,234.8 1024.4,234.2 1020.2,248.6 1015.8,249.3Z" fill="#565656" stroke="#2a2a2a" stroke-width="0.6"/>
</g>
<g id="rook3">
<ellipse cx="825.3" cy="587.6" rx="99.6" ry="29" transform="rotate(2.30 825.3 587.6)" fill="#505050"/>
<ellipse cx="825.4" cy="585.9" rx="101.1" ry="29.3" transform="rotate(2.29 825.4 585.9)" fill="#525252"/>
<ellipse cx="825.4" cy="584.3" rx="102.6" ry="29.7" transform="rotate(2.28 825.4 584.3)" fill="#545454"/>
<ellipse cx="825.6" cy="581" rx="102.6" ry="29.5" transform="rotate(2.27 825.6 581)" fill="#565656"/>
<ellipse cx="825.7" cy="577.7" rx="102.7" ry="29.3" transform="rotate(2.25 825.7 577.7)" fill="#595959"/>
<ellipse cx="825.8" cy="574.3" rx="102.7" ry="29.2" transform="rotate(2.24 825.8 574.3)" fill="#5c5c5c"/>
<ellipse cx="826" cy="571" rx="102.8" ry="29" transform="rotate(2.22 826 571)" fill="#606060"/>
<ellipse cx="826.1" cy="567.7" rx="102.8" ry="28.9" transform="rotate(2.21 826.1 567.7)" fill="#656565"/>
<ellipse cx="826.2" cy="564.4" rx="102.9" ry="28.7" transform="rotate(2.19 826.2 564.4)" fill="#6c6c6c"/>
<ellipse cx="826.3" cy="561.8" rx="101" ry="28" transform="rotate(2.18 826.3 561.8)" fill="#757575"/>
<ellipse cx="826.4" cy="558.5" rx="101.7" ry="28.1" transform="rotate(2.17 826.4 558.5)" fill="#737373"/>
<ellipse cx="826.5" cy="555.9" rx="102.2" ry="28" transform="rotate(2.15 826.5 555.9)" fill="#727272"/>
<ellipse cx="826.6" cy="553.3" rx="102.5" ry="28" transform="rotate(2.14 826.6 553.3)" fill="#727272"/>
<ellipse cx="826.8" cy="550.7" rx="102.8" ry="27.9" transform="rotate(2.13 826.8 550.7)" fill="#717171"/>
<ellipse cx="826.9" cy="548" rx="103" ry="27.9" transform="rotate(2.12 826.9 548)" fill="#717171"/>
<ellipse cx="827" cy="545.3" rx="103.1" ry="27.7" transform="rotate(2.11 827 545.3)" fill="#707070"/>
<ellipse cx="827.1" cy="542.7" rx="103.3" ry="27.6" transform="rotate(2.10 827.1 542.7)" fill="#707070"/>
<ellipse cx="827.2" cy="538.8" rx="102.9" ry="27.3" transform="rotate(2.08 827.2 538.8)" fill="#707070"/>
<ellipse cx="827.3" cy="535" rx="101.5" ry="26.8" transform="rotate(2.06 827.3 535)" fill="#717171"/>
<ellipse cx="827.5" cy="531.3" rx="99.7" ry="26.1" transform="rotate(2.05 827.5 531.3)" fill="#727272"/>
<ellipse cx="827.5" cy="529" rx="98.4" ry="25.6" transform="rotate(2.04 827.5 529)" fill="#737373"/>
<ellipse cx="827.6" cy="526.7" rx="96.9" ry="25.1" transform="rotate(2.03 827.6 526.7)" fill="#737373"/>
<ellipse cx="827.7" cy="524.5" rx="95.2" ry="24.6" transform="rotate(2.02 827.7 524.5)" fill="#747474"/>
<ellipse cx="827.7" cy="522.4" rx="93.5" ry="24" transform="rotate(2.01 827.7 522.4)" fill="#747474"/>
<ellipse cx="827.8" cy="520.2" rx="91.7" ry="23.5" transform="rotate(2.00 827.8 520.2)" fill="#757575"/>
<ellipse cx="827.8" cy="518" rx="90" ry="22.9" transform="rotate(1.99 827.8 518)" fill="#757575"/>
<ellipse cx="827.9" cy="515.8" rx="88.4" ry="22.4" transform="rotate(1.98 827.9 515.8)" fill="#767676"/>
<ellipse cx="828" cy="513.6" rx="86.7" ry="21.9" transform="rotate(1.97 828 513.6)" fill="#767676"/>
<ellipse cx="828" cy="511.5" rx="84.9" ry="21.4" transform="rotate(1.96 828 511.5)" fill="#767676"/>
<ellipse cx="828.1" cy="509.3" rx="83.2" ry="20.8" transform="rotate(1.95 828.1 509.3)" fill="#777777"/>
<ellipse cx="828.2" cy="507.1" rx="81.6" ry="20.3" transform="rotate(1.94 828.2 507.1)" fill="#777777"/>
<ellipse cx="828.2" cy="504.8" rx="80" ry="19.9" transform="rotate(1.93 828.2 504.8)" fill="#787878"/>
<ellipse cx="828.3" cy="502.5" rx="78.7" ry="19.4" transform="rotate(1.92 828.3 502.5)" fill="#787878"/>
<ellipse cx="828.4" cy="498.9" rx="76.9" ry="18.9" transform="rotate(1.91 828.4 498.9)" fill="#797979"/>
<ellipse cx="828.6" cy="495.1" rx="75.4" ry="18.3" transform="rotate(1.89 828.6 495.1)" fill="#797979"/>
<ellipse cx="828.7" cy="491.2" rx="74" ry="17.9" transform="rotate(1.88 828.7 491.2)" fill="#7a7a7a"/>
<ellipse cx="828.8" cy="488.6" rx="73.3" ry="17.6" transform="rotate(1.86 828.8 488.6)" fill="#7a7a7a"/>
<ellipse cx="828.9" cy="485.9" rx="72.8" ry="17.4" transform="rotate(1.85 828.9 485.9)" fill="#7a7a7a"/>
<ellipse cx="829" cy="483.3" rx="72.4" ry="17.2" transform="rotate(1.84 829 483.3)" fill="#7a7a7a"/>
<ellipse cx="829.1" cy="480.6" rx="72.1" ry="17" transform="rotate(1.83 829.1 480.6)" fill="#7a7a7a"/>
<ellipse cx="829.2" cy="477.9" rx="71.9" ry="16.8" transform="rotate(1.82 829.2 477.9)" fill="#797979"/>
<ellipse cx="829.3" cy="475.2" rx="71.8" ry="16.7" transform="rotate(1.81 829.3 475.2)" fill="#787878"/>
<path d="M724,546.4 725,556.1 723.4,560 723.2,582.6 724.4,585.6 729.3,591.8 732.4,594.7 736.5,597.5 747.3,602.8 761.3,607.5 778.1,611.4 797,614.4 807,615.5 827.4,616.7 847.8,616.7 857.7,616.2 876.3,614.4 892.7,611.4 899.8,609.6 911.6,605.2 916.2,602.8 919.8,600.2 924,595.9 925.5,594.3 927.2,591.4 927.9,588.5 929,568.5 928.7,565.7 927.8,563.7 929.1,557.3 930.2,546.7 929.8,540 928.4,536.2 922.9,525.4 910.1,508.4 906.2,502.3 903.7,496.2 901.9,489.6 900.9,476.2 900.1,474.5 896.4,471.3 890.3,468.2 881.9,465.4 871.7,462.9 859.9,461 840.5,459 827,458.4 807,458.6 788.8,460.2 778.3,461.9 769.7,464.1 763.1,466.7 759.1,469.7 758,471.3 755.8,484.8 753.7,490.8 750.2,497.9 733,518.2 726.7,528.3 724.4,534.6 723.9,538.5Z" fill="url(#lg3_0)"/>
<path d="M725,556.5 723.9,558.3 723.6,562.4 723.1,581.6 725.2,586.6 728.1,590.4 732.7,594.9 739.3,599 748.9,603.4 761.3,607.5 759.5,604.6 760.1,584.1 761.4,581 760.7,569.8 761.1,557.5 764.5,546.5 778.4,516 782.4,500.8 783.9,486.7 757.9,471.7 755.8,484.8 753.5,491.2 750,498.3 747,502.7 729.7,523.2 725.1,532 724.1,540.8 724.2,548.5Z" fill="#4a4a4a" fill-opacity=".40"/>
<path d="M723.9,538.8 725.1,556.4 724.1,557.7 723.4,560.6 723,579.7 723.4,583 724.7,585.9 729.7,592.2 733,595 737.7,598.1 735.3,594.5 735.7,574.9 737.5,572 736.4,560.8 736.3,552.8 736.7,548.8 741.1,538.3 756.9,514.7 759.6,509.8 764.1,498 765.8,489.8 766.8,481.5 757.9,471.7 755.8,484.8 753.5,491.2 750,498.3 747,502.7 729.7,523.2 725.1,532Z" fill="#303030" fill-opacity=".18"/>
<path d="M724,546.4 725,556.1 724.2,557.3 723.4,560 723,579.7 723.2,582.6 724.4,585.6 729.3,591.8 732.4,594.7 736.5,597.5 747.3,602.8 761.3,607.5 778.1,611.4 797,614.4 807,615.5 827.4,616.7 847.8,616.7 857.7,616.2 876.3,614.4 892.7,611.4 899.8,609.6 911.6,605.2 916.2,602.8 919.8,600.2 924,595.9 925.5,594.3 927.2,591.4 927.9,588.5 929,568.5 928.7,565.7 927.8,563.7 929.1,557.3 930.2,546.7 929.8,540 928.4,536.2 922.9,525.4 910.1,508.4 906.2,502.3 903.7,496.2 901.9,489.6 901.1,482.7 900.9,476.2 900.1,474.5 896.4,471.3 890.3,468.2 881.9,465.4 871.7,462.9 859.9,461 840.5,459 827,458.4 807,458.6 788.8,460.2 778.3,461.9 769.7,464.1 763.1,466.7 759.1,469.7 758,471.3 755.8,484.8 753.7,490.8 750.2,497.9 733,518.2 729.9,522.6 726.7,528.3 724.4,534.6 723.9,538.5Z" fill="none" stroke="#161616" stroke-width="1.05" stroke-linejoin="round"/>
<path d="M761.3,607.5 759.5,604.6 760.1,584.1 761.4,581 760.7,569.8 761.1,557.5 764.5,546.5 778.4,516 782.4,500.8 783.9,486.7" fill="none" stroke="#222" stroke-opacity="0.7" stroke-width="0.6"/>
<ellipse cx="829.3" cy="475.2" rx="73.5" ry="17.1" transform="rotate(1.81 829.3 475.2)" fill="#7e7e7e"/>
<ellipse cx="829.4" cy="474.1" rx="75.7" ry="17.6" transform="rotate(1.80 829.4 474.1)" fill="#818181"/>
<ellipse cx="829.5" cy="472.7" rx="77.4" ry="17.9" transform="rotate(1.80 829.5 472.7)" fill="#838383"/>
<ellipse cx="829.6" cy="470" rx="78.8" ry="18.1" transform="rotate(1.79 829.6 470)" fill="#858585"/>
<ellipse cx="829.7" cy="466.6" rx="79.6" ry="18.2" transform="rotate(1.77 829.7 466.6)" fill="#878787"/>
<ellipse cx="829.8" cy="463.6" rx="79.2" ry="18" transform="rotate(1.76 829.8 463.6)" fill="#898989"/>
<ellipse cx="829.9" cy="460.6" rx="77.8" ry="17.5" transform="rotate(1.75 829.9 460.6)" fill="#898989"/>
<ellipse cx="830" cy="457.6" rx="75.9" ry="17" transform="rotate(1.73 830 457.6)" fill="#8a8a8a"/>
<ellipse cx="830.1" cy="454.8" rx="74" ry="16.4" transform="rotate(1.72 830.1 454.8)" fill="#8b8b8b"/>
<ellipse cx="830.2" cy="453" rx="72.7" ry="16.1" transform="rotate(1.71 830.2 453)" fill="#8b8b8b"/>
<ellipse cx="830.2" cy="451.3" rx="71.1" ry="15.7" transform="rotate(1.71 830.2 451.3)" fill="#8c8c8c"/>
<ellipse cx="830.3" cy="449.6" rx="69.4" ry="15.2" transform="rotate(1.70 830.3 449.6)" fill="#8c8c8c"/>
<ellipse cx="830.3" cy="447.9" rx="67.8" ry="14.8" transform="rotate(1.69 830.3 447.9)" fill="#8d8d8d"/>
<ellipse cx="830.4" cy="446.2" rx="66.4" ry="14.5" transform="rotate(1.69 830.4 446.2)" fill="#8d8d8d"/>
<ellipse cx="830.5" cy="443.5" rx="64.9" ry="14" transform="rotate(1.67 830.5 443.5)" fill="#8e8e8e"/>
<ellipse cx="830.6" cy="440.5" rx="64.2" ry="13.8" transform="rotate(1.66 830.6 440.5)" fill="#8e8e8e"/>
<ellipse cx="830.7" cy="437.3" rx="63.6" ry="13.6" transform="rotate(1.65 830.7 437.3)" fill="#8f8f8f"/>
<ellipse cx="830.8" cy="434.1" rx="63.1" ry="13.3" transform="rotate(1.64 830.8 434.1)" fill="#909090"/>
<ellipse cx="830.9" cy="430.7" rx="62.7" ry="13.1" transform="rotate(1.62 830.9 430.7)" fill="#919191"/>
<ellipse cx="831.1" cy="427.3" rx="62.3" ry="13" transform="rotate(1.61 831.1 427.3)" fill="#929292"/>
<ellipse cx="831.2" cy="423.9" rx="62.1" ry="12.8" transform="rotate(1.59 831.2 423.9)" fill="#929292"/>
<ellipse cx="831.3" cy="420.6" rx="61.9" ry="12.7" transform="rotate(1.58 831.3 420.6)" fill="#939393"/>
<ellipse cx="831.5" cy="417.3" rx="61.8" ry="12.5" transform="rotate(1.57 831.5 417.3)" fill="#949494"/>
<ellipse cx="831.6" cy="414" rx="61.6" ry="12.4" transform="rotate(1.55 831.6 414)" fill="#949494"/>
<ellipse cx="831.7" cy="410.7" rx="61.5" ry="12.3" transform="rotate(1.54 831.7 410.7)" fill="#959595"/>
<ellipse cx="831.8" cy="407.4" rx="61.4" ry="12.1" transform="rotate(1.53 831.8 407.4)" fill="#969696"/>
<ellipse cx="832" cy="404" rx="61.3" ry="12" transform="rotate(1.51 832 404)" fill="#979797"/>
<ellipse cx="832.1" cy="400.7" rx="61.2" ry="11.9" transform="rotate(1.50 832.1 400.7)" fill="#979797"/>
<ellipse cx="832.2" cy="397.4" rx="61.2" ry="11.8" transform="rotate(1.48 832.2 397.4)" fill="#989898"/>
<ellipse cx="832.4" cy="394" rx="61.1" ry="11.7" transform="rotate(1.47 832.4 394)" fill="#999999"/>
<ellipse cx="832.5" cy="390.7" rx="61.1" ry="11.5" transform="rotate(1.46 832.5 390.7)" fill="#999999"/>
<ellipse cx="832.6" cy="387.3" rx="61.1" ry="11.4" transform="rotate(1.44 832.6 387.3)" fill="#9a9a9a"/>
<ellipse cx="832.8" cy="384" rx="61.2" ry="11.3" transform="rotate(1.43 832.8 384)" fill="#9b9b9b"/>
<ellipse cx="832.9" cy="380.6" rx="61.2" ry="11.2" transform="rotate(1.42 832.9 380.6)" fill="#9b9b9b"/>
<ellipse cx="833" cy="377.3" rx="61.3" ry="11.1" transform="rotate(1.40 833 377.3)" fill="#9c9c9c"/>
<ellipse cx="833.1" cy="373.9" rx="61.4" ry="11.1" transform="rotate(1.39 833.1 373.9)" fill="#9d9d9d"/>
<ellipse cx="833.3" cy="370.6" rx="61.4" ry="11" transform="rotate(1.38 833.3 370.6)" fill="#9e9e9e"/>
<ellipse cx="833.4" cy="367.2" rx="61.5" ry="10.9" transform="rotate(1.36 833.4 367.2)" fill="#9f9f9f"/>
<ellipse cx="833.5" cy="363.8" rx="61.6" ry="10.8" transform="rotate(1.35 833.5 363.8)" fill="#9f9f9f"/>
<ellipse cx="833.7" cy="360.5" rx="61.7" ry="10.7" transform="rotate(1.33 833.7 360.5)" fill="#a0a0a0"/>
<ellipse cx="833.8" cy="357.1" rx="61.8" ry="10.6" transform="rotate(1.32 833.8 357.1)" fill="#a0a0a0"/>
<ellipse cx="833.9" cy="353.7" rx="61.9" ry="10.5" transform="rotate(1.31 833.9 353.7)" fill="#a0a0a0"/>
<ellipse cx="834.1" cy="350.3" rx="62" ry="10.4" transform="rotate(1.29 834.1 350.3)" fill="#a0a0a0"/>
<ellipse cx="834.2" cy="346.9" rx="62.1" ry="10.3" transform="rotate(1.28 834.2 346.9)" fill="#a0a0a0"/>
<ellipse cx="834.3" cy="343.6" rx="62.2" ry="10.2" transform="rotate(1.27 834.3 343.6)" fill="#a0a0a0"/>
<ellipse cx="834.5" cy="340.2" rx="62.4" ry="10.1" transform="rotate(1.25 834.5 340.2)" fill="#9f9f9f"/>
<ellipse cx="834.6" cy="336.8" rx="62.5" ry="10.1" transform="rotate(1.24 834.6 336.8)" fill="#9f9f9f"/>
<ellipse cx="834.7" cy="333.4" rx="62.6" ry="10" transform="rotate(1.23 834.7 333.4)" fill="#9d9d9d"/>
<ellipse cx="834.9" cy="330" rx="62.8" ry="9.9" transform="rotate(1.21 834.9 330)" fill="#9a9a9a"/>
<ellipse cx="835" cy="327.7" rx="62.9" ry="9.8" transform="rotate(1.20 835 327.7)" fill="#979797"/>
<path d="M767.1,435.6 765.9,440.2 764.8,442 759,447.7 752.6,456.4 751.1,459.3 750.2,464.1 751.1,469.2 753.4,473.7 755.2,475.5 759.2,478.6 762.4,480.2 772.4,484.3 788.8,488.3 809,491 831.2,492.4 853.2,492.1 866.8,491 884,488.3 892.8,485.7 898.3,483.4 904.9,478.9 907.7,474.6 908.3,472.8 909.2,469.5 908.8,464.6 906.6,459.9 903.1,454.2 897.2,447.4 895.2,444.4 894.1,438.2 893.3,429.4 893.5,392.6 897.8,329.3 897,327.4 891.4,324.5 876.8,321.2 861.8,319.4 838.7,318 815.2,318 794.4,319.4 779.4,322 773.3,324.5 772.1,326.4 771.9,369.1 771.1,395.8 769.1,422.2Z" fill="url(#lg3_1)"/>
<path d="M764.2,443.2 756.4,451.3 751.1,459.5 750.4,465.4 751.1,469.1 752.3,471.7 754.9,475.2 761.5,479.8 767.4,482.5 773.6,484.7 782.8,487.1 780.4,485.1 779.6,482.5 779.2,479.2 779.6,476 783.3,466.2 788.5,456.2 789.6,453.2 791.1,443.4 792.2,432.8 794.2,395.3 795.5,334.5 772.3,325.7 771.7,385 769.3,421.3 768,431.3 765.9,440.2Z" fill="#4a4a4a" fill-opacity=".40"/>
<path d="M764.2,443.2 757.8,449.6 752.5,456.8 751.1,459.5 750.2,464.3 751.2,469.5 753.6,473.9 758.3,477.9 765.2,481.6 760.8,476.7 760.2,473.4 760.7,470.3 765.6,461 772.6,451.7 774,448.8 775.4,442.5 776.9,432.3 779.3,398.5 780.4,331.5 772.3,325.7 771.5,386.1 769.2,422.5 768,431.3 765.9,440.2Z" fill="#303030" fill-opacity=".18"/>
<path d="M767.1,435.6 765.9,440.2 764.8,442 759,447.7 752.6,456.4 751.1,459.3 750.2,464.1 751.1,469.2 753.4,473.7 755.2,475.5 759.2,478.6 762.4,480.2 772.4,484.3 788.8,488.3 809,491 831.2,492.4 853.2,492.1 866.8,491 884,488.3 892.8,485.7 898.3,483.4 901,481.9 904.9,478.9 907.7,474.6 908.3,472.8 909.2,469.5 908.8,464.6 906.6,459.9 903.1,454.2 897.2,447.4 895.2,444.4 894.1,438.2 893.3,429.4 893.2,409.4 893.5,392.6 895.1,365.6 897.8,329.3 897.7,328.3 897,327.4 895.7,326.4 891.4,324.5 885,322.8 876.8,321.2 861.8,319.4 838.7,318 815.2,318 794.4,319.4 786,320.5 779.4,322 774.8,323.6 773.3,324.5 772.4,325.5 772.1,326.4 771.9,369.1 771.1,395.8 769.1,422.2Z" fill="none" stroke="#161616" stroke-width="1.05" stroke-linejoin="round"/>
<path d="M782.8,487.1 780.4,485.1 779.6,482.5 779.2,479.2 779.6,476 783.3,466.2 788.5,456.2 789.6,453.2 791.1,443.4 792.2,432.8 794.2,395.3 795.5,334.5" fill="none" stroke="#222" stroke-opacity="0.7" stroke-width="0.6"/>
<ellipse cx="835" cy="327.8" rx="69.9" ry="10.9" transform="rotate(1.20 835 327.8)" fill="#a1a1a1"/>
<ellipse cx="835.1" cy="325.9" rx="71.8" ry="11.1" transform="rotate(1.20 835.1 325.9)" fill="#a9a9a9"/>
<ellipse cx="835.2" cy="323.2" rx="71.8" ry="11" transform="rotate(1.18 835.2 323.2)" fill="#aaaaaa"/>
<ellipse cx="835.3" cy="320.4" rx="71.8" ry="10.9" transform="rotate(1.17 835.3 320.4)" fill="#aaaaaa"/>
<ellipse cx="835.4" cy="317.7" rx="71.9" ry="10.8" transform="rotate(1.16 835.4 317.7)" fill="#aaaaaa"/>
<ellipse cx="835.5" cy="315" rx="71.9" ry="10.7" transform="rotate(1.15 835.5 315)" fill="#ababab"/>
<ellipse cx="835.6" cy="312.2" rx="71.9" ry="10.7" transform="rotate(1.14 835.6 312.2)" fill="#ababab"/>
<ellipse cx="835.7" cy="310.9" rx="71.9" ry="10.6" transform="rotate(1.13 835.7 310.9)" fill="#ababab"/>
<path d="M813.1,300.4 794.8,301.4 784.4,302.5 772.2,304.7 766.9,306.4 764.1,308.4 763.8,309.4 763.3,324.4 763.7,325.5 766.4,328.5 770.3,330.6 776.9,332.7 785.7,334.5 809.2,337.4 837,338.7 864.5,338.3 887.1,336.1 895.4,334.5 901.2,332.7 904.4,330.6 906.8,327.7 907.5,311.5 905.1,309.4 900.1,307.4 888.3,304.7 866.2,301.9 839.9,300.4Z" fill="url(#lg3_2)"/>
<path d="M764,308.7 763.6,325.2 766.9,328.8 770.5,330.7 776.3,332.5 791,335.4 789.9,333.6 790.4,318.2Z" fill="#4a4a4a" fill-opacity=".40"/>
<path d="M764,308.7 763.4,324.4 763.8,325.6 767.4,329.1 774.2,331.9 772.6,330.1 773.1,314.9Z" fill="#303030" fill-opacity=".18"/>
<path d="M813.1,300.4 794.8,301.4 784.4,302.5 772.2,304.7 766.9,306.4 764.1,308.4 763.8,309.4 763.3,324.4 763.7,325.5 766.4,328.5 770.3,330.6 776.9,332.7 785.7,334.5 796.7,336.1 809.2,337.4 837,338.7 864.5,338.3 876.7,337.4 887.1,336.1 895.4,334.5 901.2,332.7 904.4,330.6 906.3,328.8 906.8,327.7 907.5,311.5 905.1,309.4 900.1,307.4 888.3,304.7 866.2,301.9 839.9,300.4Z" fill="none" stroke="#161616" stroke-width="1.05" stroke-linejoin="round"/>
<path d="M791,335.4 789.9,333.6 790.4,318.2" fill="none" stroke="#222" stroke-opacity="0.7" stroke-width="0.6"/>
<ellipse cx="835.7" cy="310.9" rx="76" ry="11.2" transform="rotate(1.14 835.7 310.9)" fill="#a7a7a7"/>
<ellipse cx="835.8" cy="309.7" rx="78.2" ry="11.5" transform="rotate(1.13 835.8 309.7)" fill="#adadad"/>
<ellipse cx="835.9" cy="308.2" rx="79.7" ry="11.6" transform="rotate(1.12 835.9 308.2)" fill="#b2b2b2"/>
<ellipse cx="836" cy="304.5" rx="79.8" ry="11.5" transform="rotate(1.11 836 304.5)" fill="#b2b2b2"/>
<ellipse cx="836.2" cy="300.9" rx="79.8" ry="11.3" transform="rotate(1.09 836.2 300.9)" fill="#b3b3b3"/>
<ellipse cx="836.3" cy="297.2" rx="79.8" ry="11.2" transform="rotate(1.08 836.3 297.2)" fill="#b4b4b4"/>
<ellipse cx="836.5" cy="293.6" rx="79.9" ry="11.1" transform="rotate(1.07 836.5 293.6)" fill="#b5b5b5"/>
<ellipse cx="836.6" cy="289.9" rx="79.9" ry="10.9" transform="rotate(1.05 836.6 289.9)" fill="#b6b6b6"/>
<path d="M811.5,279.1 791.3,280.1 774.6,281.9 762.9,284.4 758.3,286.3 757.1,287.3 756.7,288.4 756.2,306.5 756.5,307.7 759,310.4 765.3,313.8 772.4,315.9 782.1,317.8 807.6,320.8 837.9,322.2 867.9,321.7 892.5,319.5 901.5,317.8 907.8,315.9 912,313.7 915,311.1 915.6,310 916.3,290.5 913.6,288.4 908,286.3 894.8,283.5 870.3,280.6 841.2,279.1Z" fill="url(#lg3_3)"/>
<path d="M757,287.6 756.4,307.4 759.6,310.8 765.6,313.9 770.8,315.5 787.8,318.7 785.5,316.2 786.1,297.4Z" fill="#4a4a4a" fill-opacity=".40"/>
<path d="M757,287.6 756.2,306.6 756.6,307.8 759.3,310.5 761.4,311.9 769.5,315.1 766.4,312.5 766.9,294Z" fill="#303030" fill-opacity=".18"/>
<path d="M811.5,279.1 791.3,280.1 774.6,281.9 762.9,284.4 758.3,286.3 757.1,287.3 756.7,288.4 756.2,306.5 756.5,307.7 759,310.4 765.3,313.8 772.4,315.9 782.1,317.8 793.9,319.5 807.6,320.8 837.9,322.2 867.9,321.7 881.2,320.8 892.5,319.5 901.5,317.8 907.8,315.9 912,313.7 915,311.1 915.6,310 916.3,290.5 913.6,288.4 908,286.3 894.8,283.5 870.3,280.6 841.2,279.1Z" fill="none" stroke="#161616" stroke-width="1.05" stroke-linejoin="round"/>
<path d="M787.8,318.7 785.5,316.2 786.1,297.4" fill="none" stroke="#222" stroke-opacity="0.7" stroke-width="0.6"/>
<ellipse cx="836.6" cy="289.9" rx="76.1" ry="10.4" transform="rotate(1.05 836.6 289.9)" fill="#6a6a6a"/>
<ellipse cx="836.7" cy="287" rx="76.1" ry="10.3" transform="rotate(1.04 836.7 287)" fill="#757575"/>
<ellipse cx="836.8" cy="284.1" rx="76.1" ry="10.2" transform="rotate(1.03 836.8 284.1)" fill="#818181"/>
<ellipse cx="836.8" cy="284.1" rx="78.3" ry="10.4" transform="rotate(1.03 836.8 284.1)" fill="#b5b5b5"/>
<ellipse cx="836.9" cy="281.3" rx="79" ry="10.4" transform="rotate(1.02 836.9 281.3)" fill="#b5b5b5"/>
<ellipse cx="837" cy="278.4" rx="79.8" ry="10.4" transform="rotate(1.01 837 278.4)" fill="#b6b6b6"/>
<ellipse cx="837.2" cy="275.6" rx="80.5" ry="10.4" transform="rotate(0.99 837.2 275.6)" fill="#b6b6b6"/>
<ellipse cx="837.3" cy="272.7" rx="81.3" ry="10.4" transform="rotate(0.98 837.3 272.7)" fill="#b7b7b7"/>
<ellipse cx="837.4" cy="269.9" rx="82.1" ry="10.3" transform="rotate(0.97 837.4 269.9)" fill="#b8b8b8"/>
<ellipse cx="837.5" cy="267" rx="82.8" ry="10.3" transform="rotate(0.96 837.5 267)" fill="#b8b8b8"/>
<ellipse cx="837.6" cy="264.2" rx="83.6" ry="10.3" transform="rotate(0.95 837.6 264.2)" fill="#b9b9b9"/>
<ellipse cx="837.8" cy="261.3" rx="84.3" ry="10.3" transform="rotate(0.94 837.8 261.3)" fill="#bababa"/>
<ellipse cx="837.9" cy="258.5" rx="85.1" ry="10.2" transform="rotate(0.93 837.9 258.5)" fill="#bababa"/>
<ellipse cx="838" cy="255.6" rx="85.8" ry="10.2" transform="rotate(0.91 838 255.6)" fill="#bbbbbb"/>
<ellipse cx="838.1" cy="252.8" rx="86.6" ry="10.1" transform="rotate(0.90 838.1 252.8)" fill="#bbbbbb"/>
<ellipse cx="838.2" cy="249.9" rx="87.4" ry="10.1" transform="rotate(0.89 838.2 249.9)" fill="#bcbcbc"/>
<ellipse cx="838.4" cy="247" rx="88.1" ry="10.1" transform="rotate(0.88 838.4 247)" fill="#bdbdbd"/>
<ellipse cx="838.4" cy="244.6" rx="86" ry="9.7" transform="rotate(0.87 838.4 244.6)" fill="#c8c8c8"/>
<ellipse cx="838.5" cy="242.1" rx="83.9" ry="9.4" transform="rotate(0.86 838.5 242.1)" fill="#cacaca"/>
<path d="M750.2,245.6 758.9,283.7 760.6,285.1 760.8,289.4 763.6,291.5 766.1,292.5 773.2,294.5 788.6,297 801.4,298.4 831,300.1 861.6,300.1 888,298.4 902.4,296.2 908.6,294.5 912,292.5 912.6,291.5 912.8,287.9 914.5,286.8 915.1,285.7 926.5,248.5 926.2,247.5 921.1,241.7 916.6,239.9 904.7,237.3 880.7,234.6 851,233 819.7,232.7 791,233.7 773.5,235.2 764.6,236.6 758.4,238.1 755.1,239.9 750.8,244.6Z" fill="url(#lg3_4)"/>
<path d="M750.5,246.4 758.6,283 760.8,285.3 760.8,289.3 763,291.1 771.6,294.1 788.6,297 788.8,291.1 787.3,290.6 782.5,253.9 785.5,248.6 755,240.1 750.6,245Z" fill="#4a4a4a" fill-opacity=".40"/>
<path d="M759,283.8 760.6,285.1 760.5,288.5 761.5,290.1 764,291.6 770.3,293.7 770.5,287.9 768.3,286.5 761.4,250.7 765.3,245.6 755,240.1 750.8,244.6 750.3,245.7Z" fill="#303030" fill-opacity=".18"/>
<path d="M750.2,245.6 758.9,283.7 760.6,285.1 760.5,288.4 760.8,289.4 763.6,291.5 766.1,292.5 773.2,294.5 788.6,297 801.4,298.4 831,300.1 861.6,300.1 888,298.4 902.4,296.2 908.6,294.5 912,292.5 912.6,291.5 912.8,287.9 914.5,286.8 915.1,285.7 926.5,248.5 926.2,247.5 921.1,241.7 916.6,239.9 904.7,237.3 880.7,234.6 851,233 819.7,232.7 791,233.7 773.5,235.2 764.6,236.6 758.4,238.1 755.1,239.9 750.8,244.6Z" fill="none" stroke="#161616" stroke-width="1.05" stroke-linejoin="round"/>
<path d="M788.6,297 788.8,291.1 787.4,291.3 782.5,253.9 785.5,248.6" fill="none" stroke="#222" stroke-opacity="0.7" stroke-width="0.6"/>
<ellipse cx="838.4" cy="247" rx="88.1" ry="10.1" transform="rotate(0.88 838.4 247)" fill="none" stroke="#3a3a3a" stroke-width="0.7"/>
<ellipse cx="838.5" cy="242.1" rx="83.9" ry="9.4" transform="rotate(0.86 838.5 242.1)" fill="#cacaca" stroke="#555" stroke-width="0.5"/>
<ellipse cx="838.4" cy="242" rx="77.4" ry="8.6" transform="rotate(0.86 838.4 242)" fill="#d0d0d0" stroke="#707070" stroke-width="0.6"/>
<g clip-path="url(#hole3)">
<ellipse cx="838.3" cy="244.2" rx="73.6" ry="8.3" transform="rotate(0.87 838.3 244.2)" fill="#9e9e9e"/>
<ellipse cx="838.2" cy="245.8" rx="69.2" ry="7.9" transform="rotate(0.88 838.2 245.8)" fill="url(#in3)" stroke="#555" stroke-width="0.6"/>
<ellipse cx="838" cy="250.5" rx="66.2" ry="7.7" transform="rotate(0.89 838 250.5)" fill="url(#in3)"/>
<ellipse cx="837.8" cy="255.2" rx="63.3" ry="7.5" transform="rotate(0.91 837.8 255.2)" fill="url(#in3)"/>
<ellipse cx="837.6" cy="260" rx="60.6" ry="7.3" transform="rotate(0.93 837.6 260)" fill="url(#in3)"/>
<ellipse cx="837.4" cy="264.7" rx="57.9" ry="7.1" transform="rotate(0.95 837.4 264.7)" fill="url(#in3)"/>
<ellipse cx="837.2" cy="269.4" rx="55.3" ry="7" transform="rotate(0.97 837.2 269.4)" fill="url(#in3)"/>
<ellipse cx="837" cy="274.2" rx="52.7" ry="6.8" transform="rotate(0.99 837 274.2)" fill="url(#in3)"/>
<ellipse cx="837" cy="274.2" rx="52.7" ry="6.8" transform="rotate(0.99 837 274.2)" fill="#a2a2a2" stroke="#666" stroke-width="0.5"/>
<path d="M782.3,235.5 777,236.2 788.9,257.5 793.8,256.8Z" fill="#5e5e5e" stroke="#3a3a3a" stroke-width="0.5"/>
<path d="M886.2,236.2 879.2,235.5 869.3,256.8 875.5,257.5Z" fill="#5e5e5e" stroke="#3a3a3a" stroke-width="0.5"/>
</g>
<path d="M782.3,235.5 776.3,234.9 772.6,239.3 767.3,239.9 770.9,235.6 777,236.2Z" fill="#787878" stroke="#3a3a3a" stroke-width="0.4"/>
<path d="M886.2,236.2 890.8,235.6 893.2,239.9 886.4,239.3 883.9,234.9 879.2,235.5Z" fill="#787878" stroke="#3a3a3a" stroke-width="0.4"/>
<path d="M787.3,247.5 782,248.2 778.9,253.6 785.9,254.3 789,248.9 794.3,248.2Z" fill="#7a7a7a" stroke="#3a3a3a" stroke-width="0.4"/>
<path d="M779.1,253.6 786,254.3 788.1,270.1 781.2,269.3Z" fill="#565656" stroke="#2a2a2a" stroke-width="0.6"/>
<path d="M897.1,248.2 903.9,248.9 907.6,254.3 912.9,253.6 909.2,248.2 902.4,247.5Z" fill="#7a7a7a" stroke="#3a3a3a" stroke-width="0.4"/>
<path d="M907.4,254.3 912.6,253.6 908.5,269.3 903.2,270.1Z" fill="#565656" stroke="#2a2a2a" stroke-width="0.6"/>
</g>
<g id="rook2">
<ellipse cx="693.9" cy="640.7" rx="108.3" ry="35" transform="rotate(1.17 693.9 640.7)" fill="#4f4f4f"/>
<ellipse cx="693.9" cy="638.9" rx="109.9" ry="35.4" transform="rotate(1.16 693.9 638.9)" fill="#515151"/>
<ellipse cx="693.9" cy="637.1" rx="111.5" ry="35.8" transform="rotate(1.16 693.9 637.1)" fill="#535353"/>
<ellipse cx="694" cy="633.5" rx="111.6" ry="35.6" transform="rotate(1.15 694 633.5)" fill="#555555"/>
<ellipse cx="694.1" cy="629.9" rx="111.6" ry="35.4" transform="rotate(1.14 694.1 629.9)" fill="#585858"/>
<ellipse cx="694.1" cy="626.3" rx="111.7" ry="35.2" transform="rotate(1.13 694.1 626.3)" fill="#5b5b5b"/>
<ellipse cx="694.2" cy="622.7" rx="111.8" ry="35" transform="rotate(1.13 694.2 622.7)" fill="#5f5f5f"/>
<ellipse cx="694.3" cy="619.1" rx="111.8" ry="34.8" transform="rotate(1.12 694.3 619.1)" fill="#646464"/>
<ellipse cx="694.3" cy="615.5" rx="111.9" ry="34.6" transform="rotate(1.11 694.3 615.5)" fill="#6b6b6b"/>
<ellipse cx="694.4" cy="612.7" rx="109.9" ry="33.9" transform="rotate(1.11 694.4 612.7)" fill="#747474"/>
<ellipse cx="694.4" cy="609.1" rx="110.6" ry="33.9" transform="rotate(1.10 694.4 609.1)" fill="#727272"/>
<ellipse cx="694.5" cy="606.3" rx="111.1" ry="33.9" transform="rotate(1.09 694.5 606.3)" fill="#717171"/>
<ellipse cx="694.5" cy="603.5" rx="111.5" ry="33.8" transform="rotate(1.09 694.5 603.5)" fill="#717171"/>
<ellipse cx="694.6" cy="600.6" rx="111.8" ry="33.7" transform="rotate(1.08 694.6 600.6)" fill="#707070"/>
<ellipse cx="694.6" cy="597.7" rx="112" ry="33.6" transform="rotate(1.07 694.6 597.7)" fill="#707070"/>
<ellipse cx="694.7" cy="594.8" rx="112.2" ry="33.5" transform="rotate(1.07 694.7 594.8)" fill="#6f6f6f"/>
<ellipse cx="694.7" cy="592" rx="112.3" ry="33.4" transform="rotate(1.06 694.7 592)" fill="#6f6f6f"/>
<ellipse cx="694.8" cy="589.1" rx="112.3" ry="33.2" transform="rotate(1.06 694.8 589.1)" fill="#6f6f6f"/>
<ellipse cx="694.8" cy="586.3" rx="111.6" ry="32.8" transform="rotate(1.05 694.8 586.3)" fill="#707070"/>
<ellipse cx="694.9" cy="583.5" rx="110.4" ry="32.3" transform="rotate(1.05 694.9 583.5)" fill="#707070"/>
<ellipse cx="694.9" cy="580.8" rx="109.1" ry="31.8" transform="rotate(1.04 694.9 580.8)" fill="#717171"/>
<ellipse cx="694.9" cy="578.2" rx="107.8" ry="31.3" transform="rotate(1.03 694.9 578.2)" fill="#717171"/>
<ellipse cx="695" cy="575.8" rx="106.2" ry="30.7" transform="rotate(1.03 695 575.8)" fill="#727272"/>
<ellipse cx="695" cy="573.3" rx="104.5" ry="30" transform="rotate(1.02 695 573.3)" fill="#727272"/>
<ellipse cx="695" cy="571" rx="102.6" ry="29.4" transform="rotate(1.02 695 571)" fill="#737373"/>
<ellipse cx="695.1" cy="568.6" rx="100.7" ry="28.7" transform="rotate(1.01 695.1 568.6)" fill="#737373"/>
<ellipse cx="695.1" cy="566.3" rx="98.8" ry="28" transform="rotate(1.01 695.1 566.3)" fill="#747474"/>
<ellipse cx="695.1" cy="563.9" rx="97.1" ry="27.4" transform="rotate(1.00 695.1 563.9)" fill="#747474"/>
<ellipse cx="695.2" cy="561.5" rx="95.2" ry="26.8" transform="rotate(1.00 695.2 561.5)" fill="#757575"/>
<ellipse cx="695.2" cy="559.1" rx="93.4" ry="26.1" transform="rotate(1.00 695.2 559.1)" fill="#757575"/>
<ellipse cx="695.2" cy="556.7" rx="91.5" ry="25.5" transform="rotate(0.99 695.2 556.7)" fill="#767676"/>
<ellipse cx="695.3" cy="554.3" rx="89.6" ry="24.9" transform="rotate(0.99 695.3 554.3)" fill="#767676"/>
<ellipse cx="695.3" cy="551.9" rx="87.9" ry="24.3" transform="rotate(0.98 695.3 551.9)" fill="#767676"/>
<ellipse cx="695.3" cy="549.4" rx="86.3" ry="23.7" transform="rotate(0.98 695.3 549.4)" fill="#777777"/>
<ellipse cx="695.4" cy="546.8" rx="84.9" ry="23.2" transform="rotate(0.97 695.4 546.8)" fill="#777777"/>
<ellipse cx="695.4" cy="544.2" rx="83.7" ry="22.8" transform="rotate(0.97 695.4 544.2)" fill="#787878"/>
<ellipse cx="695.4" cy="541.5" rx="82.6" ry="22.4" transform="rotate(0.96 695.4 541.5)" fill="#787878"/>
<ellipse cx="695.5" cy="538.7" rx="81.5" ry="22" transform="rotate(0.95 695.5 538.7)" fill="#787878"/>
<ellipse cx="695.5" cy="535.8" rx="80.6" ry="21.6" transform="rotate(0.95 695.5 535.8)" fill="#797979"/>
<ellipse cx="695.6" cy="532.9" rx="79.8" ry="21.3" transform="rotate(0.94 695.6 532.9)" fill="#797979"/>
<ellipse cx="695.6" cy="530.1" rx="79.3" ry="21" transform="rotate(0.94 695.6 530.1)" fill="#797979"/>
<ellipse cx="695.7" cy="527.2" rx="78.9" ry="20.8" transform="rotate(0.93 695.7 527.2)" fill="#797979"/>
<ellipse cx="695.7" cy="524.3" rx="78.5" ry="20.5" transform="rotate(0.93 695.7 524.3)" fill="#797979"/>
<ellipse cx="695.8" cy="521.3" rx="78.2" ry="20.4" transform="rotate(0.92 695.8 521.3)" fill="#787878"/>
<ellipse cx="695.8" cy="518.3" rx="78.1" ry="20.2" transform="rotate(0.91 695.8 518.3)" fill="#777777"/>
<path d="M582.6,595.7 584,608.1 583,610.1 582.5,613.5 582.5,635 583,638.5 584.6,642 590.3,649 593.9,652.4 598.6,655.6 604.3,658.7 618.5,664.4 635.9,669.2 655.8,672.8 666.5,674 688.7,675.5 711.1,675.5 722.1,675 743,672.8 761.8,669.2 770,666.9 784.1,661.7 789.7,658.7 794.3,655.6 797.8,652.4 803.6,645.5 805,642 806.2,616.9 804.9,612.4 806.4,601.9 807,590.4 805.6,584.4 804.5,581.6 798.9,571 783.1,550.7 779.8,545.8 776.6,537.7 775.1,532.5 773.9,519.5 773.6,517.5 772.4,515.5 768,511.7 761,508.1 751.6,505 740.2,502.3 727.3,500.3 706,498.4 684,498.2 669.8,498.9 650.2,501.2 639,503.6 629.9,506.5 623.1,509.9 619,513.6 618,515.5 617.3,522.5 616,530 614.3,535.6 611.6,541.7 607.1,548.3 590.7,568.1 585,578.5 583.8,581.2 582.5,587.2Z" fill="url(#lg2_0)"/>
<path d="M582.8,598.1 584.1,607.8 582.5,613.4 582.5,634.5 584,640.7 590.4,649.1 597.8,655.1 605.9,659.5 618.5,664.4 616.2,661.3 616.3,639 617.8,635.6 616.7,623.5 616.5,611.6 618,605.4 621.1,596.6 633.3,571.3 636.8,562.8 640.7,547.5 642.1,532.2 618.7,514 617.8,516.9 617.3,522.5 615.8,531.7 611.6,541.7 606.8,548.8 590.3,568.8 585,578.8 582.5,587.2Z" fill="#4a4a4a" fill-opacity=".40"/>
<path d="M582.9,610.5 582.5,614.3 582.5,635.1 583.2,638.9 586.2,644.2 590.7,649.4 595.1,653.1 592.2,645.7 592.2,627.9 594.1,624.8 592.5,612.7 592.3,601 594.2,595.1 598.2,586.8 617,558.1 619.5,552.6 622.5,543.8 624.3,534.9 625.1,525.8 618.7,514.1 617.9,515.7 617.3,522.5 616,530 614.1,536.1 611.6,541.7 606.8,548.8 590.3,568.8 583.7,581.8 582.8,585.9 582.5,590.8 583,601.5 584,608.1Z" fill="#303030" fill-opacity=".18"/>
<path d="M582.6,595.7 584,608.1 583,610.1 582.5,613.5 582.5,635 583,638.5 584.6,642 590.3,649 593.9,652.4 598.6,655.6 604.3,658.7 610.9,661.7 618.5,664.4 635.9,669.2 655.8,672.8 666.5,674 688.7,675.5 711.1,675.5 722.1,675 743,672.8 761.8,669.2 770,666.9 777.5,664.4 784.1,661.7 789.7,658.7 794.3,655.6 797.8,652.4 801,649 803.6,645.5 805,642 806.2,616.9 804.9,612.4 806.4,601.9 807,590.4 805.6,584.4 804.5,581.6 798.9,571 783.1,550.7 779.8,545.8 776.6,537.7 775.1,532.5 774.2,525.4 773.9,519.5 773.6,517.5 772.4,515.5 768,511.7 761,508.1 751.6,505 740.2,502.3 727.3,500.3 706,498.4 684,498.2 669.8,498.9 650.2,501.2 639,503.6 629.9,506.5 623.1,509.9 620.7,511.7 619,513.6 618,515.5 617.3,522.5 616,530 614.3,535.6 611.6,541.7 607.1,548.3 590.7,568.1 585,578.5 583.8,581.2 582.5,587.2Z" fill="none" stroke="#161616" stroke-width="1.05" stroke-linejoin="round"/>
<path d="M618.5,664.4 616.2,661.3 616.3,639 617.8,635.6 616.7,623.5 616.5,611.6 618,605.4 621.1,596.6 633.3,571.3 636.8,562.8 640.7,547.5 642.1,532.2" fill="none" stroke="#222" stroke-opacity="0.7" stroke-width="0.6"/>
<ellipse cx="695.8" cy="518.4" rx="80.1" ry="20.7" transform="rotate(0.91 695.8 518.4)" fill="#7d7d7d"/>
<ellipse cx="695.9" cy="517.1" rx="82.5" ry="21.3" transform="rotate(0.91 695.9 517.1)" fill="#7f7f7f"/>
<ellipse cx="695.9" cy="515.6" rx="84.3" ry="21.7" transform="rotate(0.91 695.9 515.6)" fill="#818181"/>
<ellipse cx="696" cy="512.7" rx="85.8" ry="21.9" transform="rotate(0.90 696 512.7)" fill="#848484"/>
<ellipse cx="696" cy="509.1" rx="86.6" ry="22" transform="rotate(0.90 696 509.1)" fill="#868686"/>
<ellipse cx="696.1" cy="505.7" rx="86.2" ry="21.7" transform="rotate(0.89 696.1 505.7)" fill="#878787"/>
<ellipse cx="696.1" cy="502.5" rx="84.7" ry="21.2" transform="rotate(0.88 696.1 502.5)" fill="#888888"/>
<ellipse cx="696.2" cy="500.3" rx="83.3" ry="20.8" transform="rotate(0.88 696.2 500.3)" fill="#898989"/>
<ellipse cx="696.2" cy="498.2" rx="81.9" ry="20.3" transform="rotate(0.87 696.2 498.2)" fill="#898989"/>
<ellipse cx="696.2" cy="496.2" rx="80.6" ry="19.9" transform="rotate(0.87 696.2 496.2)" fill="#898989"/>
<ellipse cx="696.2" cy="494.2" rx="79.1" ry="19.5" transform="rotate(0.87 696.2 494.2)" fill="#8a8a8a"/>
<ellipse cx="696.3" cy="492.3" rx="77.4" ry="19" transform="rotate(0.86 696.3 492.3)" fill="#8a8a8a"/>
<ellipse cx="696.3" cy="490.5" rx="75.6" ry="18.5" transform="rotate(0.86 696.3 490.5)" fill="#8b8b8b"/>
<ellipse cx="696.3" cy="488.6" rx="73.9" ry="18" transform="rotate(0.86 696.3 488.6)" fill="#8b8b8b"/>
<ellipse cx="696.3" cy="486.7" rx="72.3" ry="17.5" transform="rotate(0.85 696.3 486.7)" fill="#8c8c8c"/>
<ellipse cx="696.4" cy="483.8" rx="70.7" ry="17" transform="rotate(0.85 696.4 483.8)" fill="#8c8c8c"/>
<ellipse cx="696.4" cy="480.5" rx="69.9" ry="16.7" transform="rotate(0.84 696.4 480.5)" fill="#8d8d8d"/>
<ellipse cx="696.5" cy="477.1" rx="69.3" ry="16.4" transform="rotate(0.83 696.5 477.1)" fill="#8e8e8e"/>
<ellipse cx="696.6" cy="473.5" rx="68.7" ry="16.2" transform="rotate(0.83 696.6 473.5)" fill="#8f8f8f"/>
<ellipse cx="696.6" cy="469.9" rx="68.3" ry="15.9" transform="rotate(0.82 696.6 469.9)" fill="#8f8f8f"/>
<ellipse cx="696.7" cy="466.1" rx="67.9" ry="15.7" transform="rotate(0.81 696.7 466.1)" fill="#909090"/>
<ellipse cx="696.8" cy="462.5" rx="67.6" ry="15.5" transform="rotate(0.80 696.8 462.5)" fill="#919191"/>
<ellipse cx="696.8" cy="458.8" rx="67.5" ry="15.3" transform="rotate(0.80 696.8 458.8)" fill="#929292"/>
<ellipse cx="696.9" cy="455.2" rx="67.3" ry="15.2" transform="rotate(0.79 696.9 455.2)" fill="#929292"/>
<ellipse cx="696.9" cy="451.6" rx="67.2" ry="15" transform="rotate(0.78 696.9 451.6)" fill="#939393"/>
<ellipse cx="697" cy="448" rx="67" ry="14.9" transform="rotate(0.78 697 448)" fill="#949494"/>
<ellipse cx="697.1" cy="444.4" rx="66.9" ry="14.7" transform="rotate(0.77 697.1 444.4)" fill="#949494"/>
<ellipse cx="697.1" cy="440.8" rx="66.8" ry="14.6" transform="rotate(0.76 697.1 440.8)" fill="#959595"/>
<ellipse cx="697.2" cy="437.1" rx="66.7" ry="14.4" transform="rotate(0.76 697.2 437.1)" fill="#969696"/>
<ellipse cx="697.3" cy="433.5" rx="66.7" ry="14.3" transform="rotate(0.75 697.3 433.5)" fill="#969696"/>
<ellipse cx="697.3" cy="429.8" rx="66.6" ry="14.1" transform="rotate(0.74 697.3 429.8)" fill="#979797"/>
<ellipse cx="697.4" cy="426.2" rx="66.6" ry="14" transform="rotate(0.74 697.4 426.2)" fill="#989898"/>
<ellipse cx="697.4" cy="422.5" rx="66.6" ry="13.9" transform="rotate(0.73 697.4 422.5)" fill="#989898"/>
<ellipse cx="697.5" cy="418.9" rx="66.7" ry="13.8" transform="rotate(0.72 697.5 418.9)" fill="#999999"/>
<ellipse cx="697.6" cy="415.2" rx="66.7" ry="13.6" transform="rotate(0.71 697.6 415.2)" fill="#9a9a9a"/>
<ellipse cx="697.6" cy="411.6" rx="66.8" ry="13.5" transform="rotate(0.71 697.6 411.6)" fill="#9b9b9b"/>
<ellipse cx="697.7" cy="407.9" rx="66.9" ry="13.4" transform="rotate(0.70 697.7 407.9)" fill="#9c9c9c"/>
<ellipse cx="697.8" cy="404.2" rx="67" ry="13.3" transform="rotate(0.69 697.8 404.2)" fill="#9c9c9c"/>
<ellipse cx="697.8" cy="400.6" rx="67.1" ry="13.2" transform="rotate(0.69 697.8 400.6)" fill="#9d9d9d"/>
<ellipse cx="697.9" cy="396.9" rx="67.2" ry="13.1" transform="rotate(0.68 697.9 396.9)" fill="#9e9e9e"/>
<ellipse cx="698" cy="393.2" rx="67.3" ry="13" transform="rotate(0.67 698 393.2)" fill="#9e9e9e"/>
<ellipse cx="698" cy="389.5" rx="67.4" ry="12.9" transform="rotate(0.67 698 389.5)" fill="#9f9f9f"/>
<ellipse cx="698.1" cy="385.8" rx="67.5" ry="12.8" transform="rotate(0.66 698.1 385.8)" fill="#9f9f9f"/>
<ellipse cx="698.2" cy="382.1" rx="67.6" ry="12.6" transform="rotate(0.65 698.2 382.1)" fill="#9f9f9f"/>
<ellipse cx="698.2" cy="378.4" rx="67.8" ry="12.5" transform="rotate(0.65 698.2 378.4)" fill="#9e9e9e"/>
<ellipse cx="698.3" cy="374.7" rx="67.9" ry="12.4" transform="rotate(0.64 698.3 374.7)" fill="#9e9e9e"/>
<ellipse cx="698.4" cy="371" rx="68" ry="12.3" transform="rotate(0.63 698.4 371)" fill="#9e9e9e"/>
<ellipse cx="698.4" cy="367.3" rx="68.2" ry="12.2" transform="rotate(0.62 698.4 367.3)" fill="#9d9d9d"/>
<ellipse cx="698.5" cy="363.6" rx="68.3" ry="12.1" transform="rotate(0.62 698.5 363.6)" fill="#9c9c9c"/>
<ellipse cx="698.6" cy="359.9" rx="68.5" ry="12" transform="rotate(0.61 698.6 359.9)" fill="#989898"/>
<ellipse cx="698.6" cy="357.4" rx="68.6" ry="11.9" transform="rotate(0.61 698.6 357.4)" fill="#959595"/>
<path d="M626.7,478.3 625.1,482.7 618.4,489.6 612.8,497.4 610.2,502.6 609.4,508.1 610.7,513.9 613.5,518.9 615.6,521 620.2,524.5 623.9,526.5 635.2,531 653.6,535.3 676.1,538.1 700.4,539.1 716.6,538.7 731.8,537.4 751.7,534 762,531 768.4,528.3 772,526.5 776.6,523.1 778.6,521 781.4,516 782.7,510.2 781.9,504.8 780.4,501.5 775.2,493.4 768.8,486.2 766.8,483.1 765.8,478.1 764.6,467.1 764,445.3 764.1,423.4 767.2,358.1 765.9,355.8 764.3,354.6 759.3,352.4 752,350.5 742.9,348.7 726.3,346.8 701.1,345.5 675.5,345.9 653.2,348 644.2,349.5 637.2,351.4 632.5,353.5 631,354.6 630.2,355.8 630,357 630.8,407.4 630.5,436.6 628.8,465.6Z" fill="url(#lg2_1)"/>
<path d="M624.9,483 616.7,491.8 612.8,497.4 611,501 609.9,504.1 609.4,507.9 611.2,514.9 613,518.1 615.9,521.3 622.3,525.6 631.5,529.7 640.8,532.6 637.7,530.2 636.8,527.7 636.3,524.1 636.6,520.6 640.8,509.8 646.8,498.8 648,495.5 649.6,484.7 650.5,473.2 651.9,432.1 651.7,365.6 630.8,354.9 630,357 630.8,425.7 629.1,461.9 627.9,472.7 626.3,480.6Z" fill="#4a4a4a" fill-opacity=".40"/>
<path d="M624.9,483 618.1,490 612.8,497.4 610.1,502.9 609.5,508.4 610.9,514.3 613.7,519.2 617.5,522.6 623.3,526.1 617.6,515.5 617.9,513.8 619.3,510.3 623.2,503.5 631,493.3 632.5,490.1 635,475.9 636.7,449.9 637.3,420.4 636.7,361.9 630.8,354.9 630.2,355.9 630.1,357.2 630.9,424.9 629.1,461.9 628.1,471.4 625.9,481.3Z" fill="#303030" fill-opacity=".18"/>
<path d="M628.8,465.6 625.9,481.3 625.1,482.7 618.4,489.6 612.8,497.4 610.2,502.6 609.4,508.1 610.7,513.9 613.5,518.9 615.6,521 620.2,524.5 623.9,526.5 635.2,531 646.9,534 653.6,535.3 676.1,538.1 700.4,539.1 716.6,538.7 731.8,537.4 738.9,536.5 751.7,534 762,531 768.4,528.3 772,526.5 776.6,523.1 778.6,521 781.4,516 782.7,510.2 781.9,504.8 780.4,501.5 775.2,493.4 768.8,486.2 766.8,483.1 765.8,478.1 764.6,467.1 764,445.3 764.1,423.4 767.2,358.1 766.9,357 765.9,355.8 764.3,354.6 759.3,352.4 752,350.5 742.9,348.7 726.3,346.8 701.1,345.5 675.5,345.9 653.2,348 644.2,349.5 637.2,351.4 632.5,353.5 631,354.6 630.2,355.8 630,357 630.8,407.4 630.5,436.6Z" fill="none" stroke="#161616" stroke-width="1.05" stroke-linejoin="round"/>
<path d="M640.8,532.6 637.8,530.5 636.8,527.7 636.3,524.1 636.6,520.6 640.8,509.8 646.8,498.8 648,495.5 649.6,484.7 650.5,473.2 651.9,432.1 651.7,365.6" fill="none" stroke="#222" stroke-opacity="0.7" stroke-width="0.6"/>
<ellipse cx="698.6" cy="357.5" rx="76.3" ry="13.3" transform="rotate(0.61 698.6 357.5)" fill="#a0a0a0"/>
<ellipse cx="698.7" cy="355.4" rx="78.3" ry="13.5" transform="rotate(0.60 698.7 355.4)" fill="#a8a8a8"/>
<ellipse cx="698.7" cy="352.4" rx="78.4" ry="13.4" transform="rotate(0.60 698.7 352.4)" fill="#a8a8a8"/>
<ellipse cx="698.8" cy="349.5" rx="78.4" ry="13.3" transform="rotate(0.59 698.8 349.5)" fill="#a8a8a8"/>
<ellipse cx="698.8" cy="346.5" rx="78.4" ry="13.2" transform="rotate(0.59 698.8 346.5)" fill="#a9a9a9"/>
<ellipse cx="698.9" cy="343.5" rx="78.5" ry="13.1" transform="rotate(0.58 698.9 343.5)" fill="#a9a9a9"/>
<ellipse cx="698.9" cy="340.5" rx="78.5" ry="13" transform="rotate(0.58 698.9 340.5)" fill="#aaaaaa"/>
<ellipse cx="699" cy="339" rx="78.5" ry="12.9" transform="rotate(0.57 699 339)" fill="#aaaaaa"/>
<path d="M679.7,326.3 659.2,327.5 641.8,329.6 628.9,332.5 623.4,334.8 620.7,337.2 620.5,338.5 620.4,354.9 620.9,356.2 624.1,359.6 628.8,362.1 636.3,364.5 646.3,366.6 658.6,368.4 672.5,369.7 703.1,370.8 733,369.7 746.1,368.4 757.1,366.6 769,363.3 773.5,360.9 776.6,357.5 777,356.2 777.5,339.7 777.1,338.5 774.1,336 768.3,333.6 754.9,330.5 730.5,327.5 709.1,326.3Z" fill="url(#lg2_2)"/>
<path d="M621.3,356.6 623.6,359.1 626.3,360.9 630.7,362.8 637.4,364.8 646.3,366.6 645,364.7 645.1,347.9 621.5,336.3 620.5,338.5 620.4,354.7Z" fill="#4a4a4a" fill-opacity=".40"/>
<path d="M620.7,337.4 620.7,355.7 624.4,359.7 629.6,362.4 627.8,360.2 627.9,343.8 621.4,336.3Z" fill="#303030" fill-opacity=".18"/>
<path d="M679.7,326.3 659.2,327.5 641.8,329.6 628.9,332.5 623.4,334.8 621.7,336 620.7,337.2 620.5,338.5 620.4,354.9 620.9,356.2 624.1,359.6 628.8,362.1 636.3,364.5 646.3,366.6 658.6,368.4 672.5,369.7 687.6,370.5 703.1,370.8 718.5,370.5 733,369.7 746.1,368.4 757.1,366.6 769,363.3 773.5,360.9 776.6,357.5 777,356.2 777.5,339.7 777.1,338.5 774.1,336 768.3,333.6 754.9,330.5 743.5,328.8 730.5,327.5 709.1,326.3Z" fill="none" stroke="#161616" stroke-width="1.05" stroke-linejoin="round"/>
<path d="M646.3,366.6 645,364.7 645.1,347.9" fill="none" stroke="#222" stroke-opacity="0.7" stroke-width="0.6"/>
<ellipse cx="699" cy="339.1" rx="83" ry="13.6" transform="rotate(0.57 699 339.1)" fill="#a6a6a6"/>
<ellipse cx="699" cy="337.8" rx="85.3" ry="13.9" transform="rotate(0.57 699 337.8)" fill="#acacac"/>
<ellipse cx="699.1" cy="336.1" rx="87" ry="14.1" transform="rotate(0.57 699.1 336.1)" fill="#b0b0b0"/>
<ellipse cx="699.1" cy="333.4" rx="87" ry="14" transform="rotate(0.56 699.1 333.4)" fill="#b0b0b0"/>
<ellipse cx="699.2" cy="330.7" rx="87.1" ry="13.9" transform="rotate(0.56 699.2 330.7)" fill="#b1b1b1"/>
<ellipse cx="699.2" cy="328.1" rx="87.1" ry="13.8" transform="rotate(0.55 699.2 328.1)" fill="#b1b1b1"/>
<ellipse cx="699.3" cy="325.4" rx="87.1" ry="13.7" transform="rotate(0.55 699.3 325.4)" fill="#b2b2b2"/>
<ellipse cx="699.3" cy="322.7" rx="87.2" ry="13.6" transform="rotate(0.54 699.3 322.7)" fill="#b2b2b2"/>
<ellipse cx="699.4" cy="320.1" rx="87.2" ry="13.5" transform="rotate(0.54 699.4 320.1)" fill="#b3b3b3"/>
<ellipse cx="699.4" cy="317.4" rx="87.2" ry="13.3" transform="rotate(0.53 699.4 317.4)" fill="#b4b4b4"/>
<ellipse cx="699.4" cy="316.1" rx="87.3" ry="13.3" transform="rotate(0.53 699.4 316.1)" fill="#b4b4b4"/>
<path d="M670.3,303.3 648.5,304.8 636.1,306.4 621.7,309.3 615.5,311.6 612.5,314.2 612.2,315.5 612.1,335.4 612.6,336.8 615.6,339.9 622.9,343.8 631.1,346.2 642,348.4 655.3,350.2 670.5,351.6 703.9,352.7 736.5,351.6 750.7,350.2 762.7,348.4 775.6,345 782.8,341.2 785.7,338.2 786.1,336.8 786.7,316.8 786.2,315.5 784.9,314.2 782.8,312.9 776.2,310.5 761.4,307.3 734.2,304.2 702.4,302.8Z" fill="url(#lg2_3)"/>
<path d="M613.1,337.3 615.1,339.4 618.1,341.4 625.1,344.5 632.3,346.5 642,348.4 640.4,347.3 639.2,345.8 639.4,325.2 613.3,313.2 612.2,315.5 612.1,335.2Z" fill="#4a4a4a" fill-opacity=".40"/>
<path d="M612.3,314.9 612.4,336.3 615.9,340 623.8,344.1 620.2,339.8 620.3,321 613.3,313.2Z" fill="#303030" fill-opacity=".18"/>
<path d="M670.3,303.3 648.5,304.8 636.1,306.4 621.7,309.3 615.5,311.6 613.6,312.9 612.5,314.2 612.2,315.5 612.1,335.4 612.6,336.8 615.6,339.9 622.9,343.8 631.1,346.2 642,348.4 655.3,350.2 670.5,351.6 686.9,352.4 703.9,352.7 720.7,352.4 736.5,351.6 750.7,350.2 762.7,348.4 767.8,347.4 775.6,345 782.8,341.2 785.7,338.2 786.1,336.8 786.7,316.8 786.2,315.5 784.9,314.2 782.8,312.9 776.2,310.5 761.4,307.3 748.6,305.5 734.2,304.2 702.4,302.8Z" fill="none" stroke="#161616" stroke-width="1.05" stroke-linejoin="round"/>
<path d="M642,348.4 640.4,347.3 639.2,345.8 639.4,325.2" fill="none" stroke="#222" stroke-opacity="0.7" stroke-width="0.6"/>
<ellipse cx="699.4" cy="316" rx="83" ry="12.6" transform="rotate(0.53 699.4 316)" fill="#696969"/>
<ellipse cx="699.5" cy="312.8" rx="83.1" ry="12.5" transform="rotate(0.52 699.5 312.8)" fill="#747474"/>
<ellipse cx="699.5" cy="309.7" rx="83.1" ry="12.4" transform="rotate(0.52 699.5 309.7)" fill="#7f7f7f"/>
<ellipse cx="699.5" cy="309.7" rx="85.5" ry="12.7" transform="rotate(0.52 699.5 309.7)" fill="#b3b3b3"/>
<ellipse cx="699.6" cy="306.6" rx="86.3" ry="12.7" transform="rotate(0.51 699.6 306.6)" fill="#b3b3b3"/>
<ellipse cx="699.6" cy="303.5" rx="87.1" ry="12.7" transform="rotate(0.51 699.6 303.5)" fill="#b4b4b4"/>
<ellipse cx="699.7" cy="300.4" rx="88" ry="12.7" transform="rotate(0.50 699.7 300.4)" fill="#b5b5b5"/>
<ellipse cx="699.8" cy="297.3" rx="88.8" ry="12.6" transform="rotate(0.50 699.8 297.3)" fill="#b5b5b5"/>
<ellipse cx="699.8" cy="294.2" rx="89.6" ry="12.6" transform="rotate(0.49 699.8 294.2)" fill="#b6b6b6"/>
<ellipse cx="699.9" cy="291" rx="90.4" ry="12.6" transform="rotate(0.48 699.9 291)" fill="#b6b6b6"/>
<ellipse cx="699.9" cy="287.9" rx="91.3" ry="12.5" transform="rotate(0.48 699.9 287.9)" fill="#b7b7b7"/>
<ellipse cx="700" cy="284.8" rx="92.1" ry="12.5" transform="rotate(0.47 700 284.8)" fill="#b8b8b8"/>
<ellipse cx="700.1" cy="281.6" rx="92.9" ry="12.5" transform="rotate(0.47 700.1 281.6)" fill="#b8b8b8"/>
<ellipse cx="700.1" cy="278.5" rx="93.8" ry="12.4" transform="rotate(0.46 700.1 278.5)" fill="#b9b9b9"/>
<ellipse cx="700.2" cy="275.4" rx="94.6" ry="12.4" transform="rotate(0.46 700.2 275.4)" fill="#bababa"/>
<ellipse cx="700.2" cy="272.2" rx="95.4" ry="12.3" transform="rotate(0.45 700.2 272.2)" fill="#bababa"/>
<ellipse cx="700.3" cy="269.1" rx="96.3" ry="12.3" transform="rotate(0.44 700.3 269.1)" fill="#bbbbbb"/>
<ellipse cx="700.3" cy="266.4" rx="93.9" ry="11.8" transform="rotate(0.44 700.3 266.4)" fill="#c6c6c6"/>
<ellipse cx="700.4" cy="263.7" rx="91.6" ry="11.4" transform="rotate(0.43 700.4 263.7)" fill="#c8c8c8"/>
<path d="M604,268.5 614.1,309.1 614.6,310.4 616.4,311.9 616.4,315.5 616.9,316.7 620.4,319.2 623.3,320.4 631.4,322.6 648.7,325.6 663.1,327 695.8,328.6 729.2,328.1 744.3,327 757.5,325.6 772.6,322.6 778.9,320.4 782.1,317.9 782.5,313.4 784.6,311.6 796.6,269.7 791.5,263.1 790,262 784.7,259.9 771.1,257 751.9,254.6 720.5,252.7 686.4,252.3 654.2,253.5 633.9,255.3 618.8,257.9 612.3,259.9 609.1,262 604.4,267.3Z" fill="url(#lg2_4)"/>
<path d="M604.1,268.1 614.1,309 615.1,310.8 616.4,311.8 616.4,315.3 617.3,317.1 620.6,319.2 626.4,321.3 642.3,324.7 642.4,318.2 640.6,317.3 633.8,277.4 637.2,271.5 610,261.2Z" fill="#4a4a4a" fill-opacity=".40"/>
<path d="M614.8,310.5 616.4,312 616.4,315.6 617.1,316.8 619.6,318.7 624.2,320.7 624.2,314.3 621.4,311.2 612.9,273.6 617.3,267.9 610,261.2 604.4,267.4 604.1,268.7 614.1,309.1Z" fill="#303030" fill-opacity=".18"/>
<path d="M604,268.5 614.1,309.1 614.6,310.4 616.4,311.9 616.4,315.5 616.9,316.7 620.4,319.2 623.3,320.4 631.4,322.6 648.7,325.6 663.1,327 679,328.1 695.8,328.6 712.8,328.6 729.2,328.1 744.3,327 757.5,325.6 772.6,322.6 778.9,320.4 780.9,319.2 782.1,317.9 782.5,313.4 784.6,311.6 796.6,269.7 796,268.5 791.5,263.1 790,262 784.7,259.9 771.1,257 751.9,254.6 720.5,252.7 686.4,252.3 654.2,253.5 633.9,255.3 618.8,257.9 612.3,259.9 609.1,262 604.4,267.3Z" fill="none" stroke="#161616" stroke-width="1.05" stroke-linejoin="round"/>
<path d="M642.3,324.7 642.4,318.2 640.7,318.4 633.8,277.4 637.2,271.5" fill="none" stroke="#222" stroke-opacity="0.7" stroke-width="0.6"/>
<ellipse cx="700.3" cy="269.1" rx="96.3" ry="12.3" transform="rotate(0.44 700.3 269.1)" fill="none" stroke="#3a3a3a" stroke-width="0.7"/>
<ellipse cx="700.4" cy="263.7" rx="91.6" ry="11.4" transform="rotate(0.43 700.4 263.7)" fill="#c8c8c8" stroke="#555" stroke-width="0.5"/>
<ellipse cx="700.3" cy="263.6" rx="84.5" ry="10.5" transform="rotate(0.43 700.3 263.6)" fill="#cecece" stroke="#707070" stroke-width="0.6"/>
<g clip-path="url(#hole2)">
<ellipse cx="700.3" cy="265.9" rx="80.4" ry="10.1" transform="rotate(0.44 700.3 265.9)" fill="#9c9c9c"/>
<ellipse cx="700.2" cy="267.7" rx="75.6" ry="9.6" transform="rotate(0.44 700.2 267.7)" fill="url(#in2)" stroke="#555" stroke-width="0.6"/>
<ellipse cx="700.1" cy="272.9" rx="72.3" ry="9.4" transform="rotate(0.45 700.1 272.9)" fill="url(#in2)"/>
<ellipse cx="700" cy="278.1" rx="69.2" ry="9.1" transform="rotate(0.46 700 278.1)" fill="url(#in2)"/>
<ellipse cx="699.9" cy="283.2" rx="66.2" ry="8.9" transform="rotate(0.47 699.9 283.2)" fill="url(#in2)"/>
<ellipse cx="699.8" cy="288.4" rx="63.2" ry="8.7" transform="rotate(0.48 699.8 288.4)" fill="url(#in2)"/>
<ellipse cx="699.7" cy="293.6" rx="60.4" ry="8.5" transform="rotate(0.49 699.7 293.6)" fill="url(#in2)"/>
<ellipse cx="699.6" cy="298.8" rx="57.6" ry="8.2" transform="rotate(0.50 699.6 298.8)" fill="url(#in2)"/>
<ellipse cx="699.6" cy="298.8" rx="57.6" ry="8.2" transform="rotate(0.50 699.6 298.8)" fill="#a0a0a0" stroke="#666" stroke-width="0.5"/>
<path d="M643.4,255.7 637,256.5 649.7,279.9 655.5,279.1Z" fill="#5d5d5d" stroke="#3a3a3a" stroke-width="0.5"/>
<path d="M756.8,256.5 749.7,255.7 738.3,279.1 744.7,279.9Z" fill="#5d5d5d" stroke="#3a3a3a" stroke-width="0.5"/>
</g>
<path d="M643.4,255.7 637.2,255 633.6,259.7 627.2,260.5 630.8,255.7 637,256.5Z" fill="#777777" stroke="#3a3a3a" stroke-width="0.4"/>
<path d="M756.8,256.5 762.3,255.7 765.3,260.5 758.2,259.7 755.2,255 749.7,255.7Z" fill="#777777" stroke="#3a3a3a" stroke-width="0.4"/>
<path d="M640,270.2 633.7,271 630.1,277 637.2,277.9 640.9,271.9 647.2,271.1Z" fill="#797979" stroke="#3a3a3a" stroke-width="0.4"/>
<path d="M630.4,277 637.5,277.9 640.4,295.2 633.3,294.2Z" fill="#555555" stroke="#2a2a2a" stroke-width="0.6"/>
<path d="M760.7,271.1 767.7,271.9 771.7,277.9 777.9,277 774,271 767,270.2Z" fill="#797979" stroke="#3a3a3a" stroke-width="0.4"/>
<path d="M771.4,277.9 777.6,277 773.7,294.2 767.4,295.2Z" fill="#555555" stroke="#2a2a2a" stroke-width="0.6"/>
</g>
<g id="rook1">
<ellipse cx="534.9" cy="705" rx="119.4" ry="42.7" transform="rotate(-0.65 534.9 705)" fill="#4e4e4e"/>
<ellipse cx="534.9" cy="703" rx="121.2" ry="43.2" transform="rotate(-0.64 534.9 703)" fill="#505050"/>
<ellipse cx="534.9" cy="701" rx="123" ry="43.7" transform="rotate(-0.64 534.9 701)" fill="#525252"/>
<ellipse cx="534.9" cy="698.4" rx="123" ry="43.6" transform="rotate(-0.64 534.9 698.4)" fill="#545454"/>
<ellipse cx="534.8" cy="695.8" rx="123.1" ry="43.4" transform="rotate(-0.64 534.8 695.8)" fill="#555555"/>
<ellipse cx="534.8" cy="693.2" rx="123.1" ry="43.3" transform="rotate(-0.63 534.8 693.2)" fill="#575757"/>
<ellipse cx="534.8" cy="690.6" rx="123.2" ry="43.1" transform="rotate(-0.63 534.8 690.6)" fill="#595959"/>
<ellipse cx="534.8" cy="688" rx="123.2" ry="42.9" transform="rotate(-0.63 534.8 688)" fill="#5c5c5c"/>
<ellipse cx="534.7" cy="685.3" rx="123.3" ry="42.8" transform="rotate(-0.62 534.7 685.3)" fill="#5e5e5e"/>
<ellipse cx="534.7" cy="682.7" rx="123.3" ry="42.6" transform="rotate(-0.62 534.7 682.7)" fill="#616161"/>
<ellipse cx="534.7" cy="680.1" rx="123.4" ry="42.5" transform="rotate(-0.62 534.7 680.1)" fill="#656565"/>
<ellipse cx="534.7" cy="677.5" rx="123.5" ry="42.3" transform="rotate(-0.62 534.7 677.5)" fill="#6a6a6a"/>
<ellipse cx="534.6" cy="674.3" rx="121.2" ry="41.4" transform="rotate(-0.61 534.6 674.3)" fill="#737373"/>
<ellipse cx="534.6" cy="670.5" rx="122" ry="41.4" transform="rotate(-0.61 534.6 670.5)" fill="#717171"/>
<ellipse cx="534.6" cy="667.4" rx="122.6" ry="41.4" transform="rotate(-0.60 534.6 667.4)" fill="#707070"/>
<ellipse cx="534.6" cy="664.3" rx="123.1" ry="41.4" transform="rotate(-0.60 534.6 664.3)" fill="#6f6f6f"/>
<ellipse cx="534.5" cy="661.1" rx="123.4" ry="41.3" transform="rotate(-0.60 534.5 661.1)" fill="#6f6f6f"/>
<ellipse cx="534.5" cy="658" rx="123.6" ry="41.1" transform="rotate(-0.59 534.5 658)" fill="#6f6f6f"/>
<ellipse cx="534.5" cy="654.8" rx="123.8" ry="41" transform="rotate(-0.59 534.5 654.8)" fill="#6e6e6e"/>
<ellipse cx="534.4" cy="651.7" rx="124" ry="40.8" transform="rotate(-0.59 534.4 651.7)" fill="#6e6e6e"/>
<ellipse cx="534.4" cy="648.6" rx="123.9" ry="40.6" transform="rotate(-0.58 534.4 648.6)" fill="#6e6e6e"/>
<ellipse cx="534.4" cy="645.5" rx="123.1" ry="40.2" transform="rotate(-0.58 534.4 645.5)" fill="#6e6e6e"/>
<ellipse cx="534.4" cy="642.4" rx="121.9" ry="39.5" transform="rotate(-0.58 534.4 642.4)" fill="#6f6f6f"/>
<ellipse cx="534.4" cy="639.4" rx="120.4" ry="38.9" transform="rotate(-0.57 534.4 639.4)" fill="#707070"/>
<ellipse cx="534.3" cy="636.6" rx="119" ry="38.2" transform="rotate(-0.57 534.3 636.6)" fill="#707070"/>
<ellipse cx="534.3" cy="633.9" rx="117.3" ry="37.5" transform="rotate(-0.57 534.3 633.9)" fill="#717171"/>
<ellipse cx="534.3" cy="631.2" rx="115.4" ry="36.8" transform="rotate(-0.57 534.3 631.2)" fill="#717171"/>
<ellipse cx="534.3" cy="628.6" rx="113.3" ry="36" transform="rotate(-0.56 534.3 628.6)" fill="#727272"/>
<ellipse cx="534.3" cy="626" rx="111.2" ry="35.1" transform="rotate(-0.56 534.3 626)" fill="#727272"/>
<ellipse cx="534.3" cy="623.4" rx="109.1" ry="34.3" transform="rotate(-0.56 534.3 623.4)" fill="#737373"/>
<ellipse cx="534.2" cy="620.8" rx="107.2" ry="33.6" transform="rotate(-0.55 534.2 620.8)" fill="#737373"/>
<ellipse cx="534.2" cy="618.1" rx="105.2" ry="32.8" transform="rotate(-0.55 534.2 618.1)" fill="#747474"/>
<ellipse cx="534.2" cy="615.5" rx="103.1" ry="32" transform="rotate(-0.55 534.2 615.5)" fill="#747474"/>
<ellipse cx="534.2" cy="612.9" rx="101" ry="31.2" transform="rotate(-0.55 534.2 612.9)" fill="#747474"/>
<ellipse cx="534.2" cy="610.2" rx="99" ry="30.5" transform="rotate(-0.54 534.2 610.2)" fill="#757575"/>
<ellipse cx="534.2" cy="607.6" rx="97.1" ry="29.7" transform="rotate(-0.54 534.2 607.6)" fill="#757575"/>
<ellipse cx="534.1" cy="604.8" rx="95.3" ry="29.1" transform="rotate(-0.54 534.1 604.8)" fill="#767676"/>
<ellipse cx="534.1" cy="602" rx="93.8" ry="28.5" transform="rotate(-0.54 534.1 602)" fill="#767676"/>
<ellipse cx="534.1" cy="599.1" rx="92.5" ry="27.9" transform="rotate(-0.53 534.1 599.1)" fill="#767676"/>
<ellipse cx="534.1" cy="596.1" rx="91.2" ry="27.4" transform="rotate(-0.53 534.1 596.1)" fill="#777777"/>
<ellipse cx="534.1" cy="593" rx="90" ry="26.9" transform="rotate(-0.53 534.1 593)" fill="#777777"/>
<ellipse cx="534" cy="589.9" rx="89" ry="26.4" transform="rotate(-0.52 534 589.9)" fill="#787878"/>
<ellipse cx="534" cy="586.8" rx="88.2" ry="26.1" transform="rotate(-0.52 534 586.8)" fill="#787878"/>
<ellipse cx="534" cy="583.6" rx="87.6" ry="25.7" transform="rotate(-0.52 534 583.6)" fill="#787878"/>
<ellipse cx="534" cy="580.4" rx="87.1" ry="25.4" transform="rotate(-0.51 534 580.4)" fill="#787878"/>
<ellipse cx="533.9" cy="577.2" rx="86.7" ry="25.2" transform="rotate(-0.51 533.9 577.2)" fill="#777777"/>
<ellipse cx="533.9" cy="574" rx="86.4" ry="25" transform="rotate(-0.51 533.9 574)" fill="#777777"/>
<ellipse cx="533.9" cy="570.7" rx="86.3" ry="24.8" transform="rotate(-0.50 533.9 570.7)" fill="#767676"/>
<path d="M497,548.6 476.6,552.6 465.4,556.2 456.6,560.3 450.7,564.8 448.8,567.2 447.8,569.6 447.4,576.5 446.1,585.5 444.3,591.8 441.7,597.9 438.3,603.5 419.1,627.9 414.7,636 411.8,642.9 410.5,649.9 411.1,662.5 412.6,672.6 411.8,674.7 411.2,678.9 411.9,702.5 412.6,706.8 414.5,711.1 417.6,715.3 425.2,722.9 430.6,726.8 437,730.4 444.5,733.7 453,736.8 462.4,739.6 483.5,744 495,745.6 519.2,747.4 531.6,747.7 544.1,747.4 568.6,745.6 580.3,744 602.1,739.6 611.9,736.8 620.9,733.7 628.9,730.4 635.9,726.8 641.8,722.9 646.6,718.9 653.7,711.1 656.3,706.8 657.6,702.5 658,674.7 656.7,670.1 657.9,659.3 658.2,645.9 656.4,639 655.1,636 648.5,624.3 630.8,602.8 627.2,597.8 623.5,589.1 621.9,584 620.6,576.1 620.2,569.6 619.6,567.2 618.2,564.8 613.2,560.3 605.2,556.2 594.7,552.6 575.1,548.6 560.2,546.9 536.3,545.9 512.2,546.9Z" fill="url(#lg1_0)"/>
<path d="M410.8,658.1 412.6,672.6 411.9,674.3 411.4,680.9 412.1,703.4 412.3,705.2 414.7,711.4 424.5,722.3 432.2,727.6 444.5,733.7 441.7,729.3 441.1,706 442.8,702.2 440.8,685.7 440.5,675.9 441.1,672.5 445.6,659.2 459.7,631 463.7,621.4 466.5,611.4 467.9,604.6 469.2,591 469.2,587.6 450.2,565.4 447.9,569.3 447.2,578.9 445.4,588.3 440.9,599.8 420.7,625.7 416,633.6 413,639.9 411.2,645.3 410.7,651.8Z" fill="#4a4a4a" fill-opacity=".40"/>
<path d="M410.5,654 411.1,662.5 412.6,672.6 411.7,675.2 411.3,679.9 412.3,705.1 412.8,707.3 414.9,711.6 418.5,716.3 422,719.9 419.6,695 417.9,692.9 420.1,688.9 417.3,662.6 419.1,656.3 423.5,647.1 442.7,618.4 445.8,612.4 448.3,606.2 451.1,596.3 452.7,583.2 452.7,579.8 450.2,565.4 448.7,567.4 447.8,569.9 447.4,576.5 446.1,585.5 443,595 438.6,603.1 423.5,621.9 417.2,631 411.6,643.8 410.7,648.4Z" fill="#303030" fill-opacity=".18"/>
<path d="M497,548.6 483,551.1 476.6,552.6 465.4,556.2 456.6,560.3 453.3,562.5 450.7,564.8 448.8,567.2 447.8,569.6 447.4,576.5 446.1,585.5 444.3,591.8 441.7,597.9 438.3,603.5 419.1,627.9 414.7,636 411.8,642.9 410.5,649.9 411.1,662.5 412.6,672.6 411.8,674.7 411.2,678.9 411.9,702.5 412.6,706.8 414.5,711.1 417.6,715.3 425.2,722.9 430.6,726.8 437,730.4 444.5,733.7 453,736.8 462.4,739.6 472.6,742 483.5,744 495,745.6 519.2,747.4 531.6,747.7 544.1,747.4 568.6,745.6 580.3,744 591.5,742 602.1,739.6 611.9,736.8 620.9,733.7 628.9,730.4 635.9,726.8 641.8,722.9 646.6,718.9 653.7,711.1 656.3,706.8 657.6,702.5 658,674.7 656.7,670.1 657.9,659.3 658.2,645.9 656.4,639 655.1,636 648.5,624.3 630.8,602.8 627.2,597.8 623.5,589.1 621.9,584 620.6,576.1 620.2,569.6 619.6,567.2 618.2,564.8 616.1,562.5 613.2,560.3 605.2,556.2 594.7,552.6 588.6,551.1 575.1,548.6 560.2,546.9 536.3,545.9 512.2,546.9Z" fill="none" stroke="#161616" stroke-width="1.05" stroke-linejoin="round"/>
<path d="M444.5,733.7 441.7,730.5 441.1,706 442.8,702.2 441,688.9 440.5,675.9 442,669.1 445.6,659.2 459.7,631 463.7,621.4 466.5,611.4 467.9,604.6 469.2,587.6" fill="none" stroke="#222" stroke-opacity="0.7" stroke-width="0.6"/>
<ellipse cx="533.9" cy="570.8" rx="88.5" ry="25.4" transform="rotate(-0.50 533.9 570.8)" fill="#7c7c7c"/>
<ellipse cx="533.9" cy="570.1" rx="89.8" ry="25.8" transform="rotate(-0.50 533.9 570.1)" fill="#7d7d7d"/>
<ellipse cx="533.8" cy="568.6" rx="92.2" ry="26.4" transform="rotate(-0.50 533.8 568.6)" fill="#7f7f7f"/>
<ellipse cx="533.8" cy="566.8" rx="93.9" ry="26.7" transform="rotate(-0.50 533.8 566.8)" fill="#818181"/>
<ellipse cx="533.8" cy="563.3" rx="95.3" ry="27" transform="rotate(-0.50 533.8 563.3)" fill="#838383"/>
<ellipse cx="533.8" cy="560.6" rx="95.8" ry="27" transform="rotate(-0.49 533.8 560.6)" fill="#858585"/>
<ellipse cx="533.7" cy="556.9" rx="95.3" ry="26.7" transform="rotate(-0.49 533.7 556.9)" fill="#868686"/>
<ellipse cx="533.7" cy="553.3" rx="93.6" ry="26" transform="rotate(-0.49 533.7 553.3)" fill="#878787"/>
<ellipse cx="533.7" cy="551" rx="92.1" ry="25.5" transform="rotate(-0.48 533.7 551)" fill="#878787"/>
<ellipse cx="533.7" cy="548.6" rx="90.5" ry="24.9" transform="rotate(-0.48 533.7 548.6)" fill="#888888"/>
<ellipse cx="533.7" cy="546.4" rx="89.1" ry="24.4" transform="rotate(-0.48 533.7 546.4)" fill="#888888"/>
<ellipse cx="533.6" cy="544.2" rx="87.5" ry="23.9" transform="rotate(-0.48 533.6 544.2)" fill="#898989"/>
<ellipse cx="533.6" cy="542.1" rx="85.6" ry="23.3" transform="rotate(-0.47 533.6 542.1)" fill="#898989"/>
<ellipse cx="533.6" cy="540.1" rx="83.6" ry="22.6" transform="rotate(-0.47 533.6 540.1)" fill="#898989"/>
<ellipse cx="533.6" cy="538.1" rx="81.7" ry="22" transform="rotate(-0.47 533.6 538.1)" fill="#8a8a8a"/>
<ellipse cx="533.6" cy="536" rx="80" ry="21.5" transform="rotate(-0.47 533.6 536)" fill="#8a8a8a"/>
<ellipse cx="533.6" cy="533.8" rx="78.6" ry="21" transform="rotate(-0.47 533.6 533.8)" fill="#8b8b8b"/>
<ellipse cx="533.5" cy="530.4" rx="77.6" ry="20.6" transform="rotate(-0.46 533.5 530.4)" fill="#8b8b8b"/>
<ellipse cx="533.5" cy="526.7" rx="76.8" ry="20.3" transform="rotate(-0.46 533.5 526.7)" fill="#8c8c8c"/>
<ellipse cx="533.5" cy="522.8" rx="76.2" ry="19.9" transform="rotate(-0.46 533.5 522.8)" fill="#8d8d8d"/>
<ellipse cx="533.5" cy="520.1" rx="75.8" ry="19.7" transform="rotate(-0.45 533.5 520.1)" fill="#8d8d8d"/>
<ellipse cx="533.4" cy="517.4" rx="75.5" ry="19.5" transform="rotate(-0.45 533.4 517.4)" fill="#8e8e8e"/>
<ellipse cx="533.4" cy="514.7" rx="75.2" ry="19.4" transform="rotate(-0.45 533.4 514.7)" fill="#8e8e8e"/>
<ellipse cx="533.4" cy="512" rx="75" ry="19.2" transform="rotate(-0.44 533.4 512)" fill="#8f8f8f"/>
<ellipse cx="533.4" cy="509.3" rx="74.8" ry="19" transform="rotate(-0.44 533.4 509.3)" fill="#8f8f8f"/>
<ellipse cx="533.3" cy="506.6" rx="74.7" ry="18.9" transform="rotate(-0.44 533.3 506.6)" fill="#909090"/>
<ellipse cx="533.3" cy="504" rx="74.5" ry="18.8" transform="rotate(-0.44 533.3 504)" fill="#909090"/>
<ellipse cx="533.3" cy="501.4" rx="74.4" ry="18.6" transform="rotate(-0.43 533.3 501.4)" fill="#919191"/>
<ellipse cx="533.3" cy="498.7" rx="74.3" ry="18.5" transform="rotate(-0.43 533.3 498.7)" fill="#919191"/>
<ellipse cx="533.3" cy="496.1" rx="74.2" ry="18.4" transform="rotate(-0.43 533.3 496.1)" fill="#929292"/>
<ellipse cx="533.2" cy="493.4" rx="74.1" ry="18.3" transform="rotate(-0.43 533.2 493.4)" fill="#929292"/>
<ellipse cx="533.2" cy="490.8" rx="74.1" ry="18.1" transform="rotate(-0.42 533.2 490.8)" fill="#939393"/>
<ellipse cx="533.2" cy="488.1" rx="74" ry="18" transform="rotate(-0.42 533.2 488.1)" fill="#939393"/>
<ellipse cx="533.2" cy="485.4" rx="73.9" ry="17.9" transform="rotate(-0.42 533.2 485.4)" fill="#949494"/>
<ellipse cx="533.1" cy="482.8" rx="73.8" ry="17.8" transform="rotate(-0.42 533.1 482.8)" fill="#949494"/>
<ellipse cx="533.1" cy="480.1" rx="73.8" ry="17.7" transform="rotate(-0.41 533.1 480.1)" fill="#949494"/>
<ellipse cx="533.1" cy="477.4" rx="73.8" ry="17.5" transform="rotate(-0.41 533.1 477.4)" fill="#959595"/>
<ellipse cx="533.1" cy="474.7" rx="73.7" ry="17.4" transform="rotate(-0.41 533.1 474.7)" fill="#959595"/>
<ellipse cx="533" cy="472.1" rx="73.7" ry="17.3" transform="rotate(-0.41 533 472.1)" fill="#969696"/>
<ellipse cx="533" cy="469.4" rx="73.7" ry="17.2" transform="rotate(-0.40 533 469.4)" fill="#969696"/>
<ellipse cx="533" cy="466.7" rx="73.7" ry="17.1" transform="rotate(-0.40 533 466.7)" fill="#979797"/>
<ellipse cx="533" cy="464" rx="73.8" ry="17" transform="rotate(-0.40 533 464)" fill="#979797"/>
<ellipse cx="533" cy="461.4" rx="73.8" ry="16.9" transform="rotate(-0.40 533 461.4)" fill="#989898"/>
<ellipse cx="532.9" cy="458.7" rx="73.8" ry="16.8" transform="rotate(-0.39 532.9 458.7)" fill="#989898"/>
<ellipse cx="532.9" cy="456" rx="73.9" ry="16.7" transform="rotate(-0.39 532.9 456)" fill="#999999"/>
<ellipse cx="532.9" cy="453.3" rx="74" ry="16.6" transform="rotate(-0.39 532.9 453.3)" fill="#999999"/>
<ellipse cx="532.9" cy="450.6" rx="74" ry="16.6" transform="rotate(-0.39 532.9 450.6)" fill="#9a9a9a"/>
<ellipse cx="532.8" cy="447.9" rx="74.1" ry="16.5" transform="rotate(-0.38 532.8 447.9)" fill="#9a9a9a"/>
<ellipse cx="532.8" cy="445.2" rx="74.2" ry="16.4" transform="rotate(-0.38 532.8 445.2)" fill="#9b9b9b"/>
<ellipse cx="532.8" cy="442.5" rx="74.2" ry="16.3" transform="rotate(-0.38 532.8 442.5)" fill="#9b9b9b"/>
<ellipse cx="532.8" cy="439.8" rx="74.3" ry="16.2" transform="rotate(-0.38 532.8 439.8)" fill="#9c9c9c"/>
<ellipse cx="532.7" cy="437.1" rx="74.4" ry="16.1" transform="rotate(-0.37 532.7 437.1)" fill="#9c9c9c"/>
<ellipse cx="532.7" cy="434.4" rx="74.5" ry="16" transform="rotate(-0.37 532.7 434.4)" fill="#9d9d9d"/>
<ellipse cx="532.7" cy="431.7" rx="74.6" ry="15.9" transform="rotate(-0.37 532.7 431.7)" fill="#9d9d9d"/>
<ellipse cx="532.7" cy="429" rx="74.6" ry="15.8" transform="rotate(-0.37 532.7 429)" fill="#9d9d9d"/>
<ellipse cx="532.7" cy="426.3" rx="74.7" ry="15.8" transform="rotate(-0.36 532.7 426.3)" fill="#9d9d9d"/>
<ellipse cx="532.6" cy="423.6" rx="74.8" ry="15.7" transform="rotate(-0.36 532.6 423.6)" fill="#9d9d9d"/>
<ellipse cx="532.6" cy="420.9" rx="74.9" ry="15.6" transform="rotate(-0.36 532.6 420.9)" fill="#9d9d9d"/>
<ellipse cx="532.6" cy="418.1" rx="75" ry="15.5" transform="rotate(-0.36 532.6 418.1)" fill="#9d9d9d"/>
<ellipse cx="532.6" cy="415.4" rx="75.1" ry="15.4" transform="rotate(-0.35 532.6 415.4)" fill="#9d9d9d"/>
<ellipse cx="532.5" cy="412.7" rx="75.2" ry="15.3" transform="rotate(-0.35 532.5 412.7)" fill="#9d9d9d"/>
<ellipse cx="532.5" cy="410" rx="75.3" ry="15.2" transform="rotate(-0.35 532.5 410)" fill="#9c9c9c"/>
<ellipse cx="532.5" cy="407.3" rx="75.4" ry="15.1" transform="rotate(-0.35 532.5 407.3)" fill="#9c9c9c"/>
<ellipse cx="532.5" cy="404.5" rx="75.5" ry="15" transform="rotate(-0.34 532.5 404.5)" fill="#9c9c9c"/>
<ellipse cx="532.4" cy="401.8" rx="75.6" ry="15" transform="rotate(-0.34 532.4 401.8)" fill="#9b9b9b"/>
<ellipse cx="532.4" cy="399.1" rx="75.8" ry="14.9" transform="rotate(-0.34 532.4 399.1)" fill="#999999"/>
<ellipse cx="532.4" cy="396.3" rx="75.9" ry="14.8" transform="rotate(-0.34 532.4 396.3)" fill="#979797"/>
<ellipse cx="532.4" cy="393.6" rx="76" ry="14.7" transform="rotate(-0.33 532.4 393.6)" fill="#949494"/>
<path d="M493.4,381.2 476.6,383.9 467.8,386.2 461.3,388.8 459,390.2 456.5,393 459.3,467.7 459.2,489.2 458.4,513.9 456.9,525.9 455.5,531.9 445.9,542.9 441.5,549.5 438.7,555.6 438,561.9 439.2,567.2 442.2,573.4 446.3,577.6 449.6,580.1 455.9,583.6 460.8,585.7 473.9,589.9 488.3,592.9 496.3,594 522.3,596 549.5,595.6 575.1,592.9 582.9,591.5 596.8,588.1 609.1,583.6 615.8,580.1 622.6,575.1 626.2,570.8 628.8,564.6 629.5,559.3 628.4,553 625.1,547 619.1,538.5 611.7,530.7 610.3,525.9 609.2,519.3 607.9,503.3 606.8,471.4 607,441.9 608.4,393 607.9,391.6 604.9,388.8 595.4,385 586.2,382.9 568.9,380.5 548.8,379.1 527.4,378.9 506.4,379.9Z" fill="url(#lg1_1)"/>
<path d="M456.6,392.9 459.6,473.9 458.9,505.6 457.9,519.1 457,525.6 455.4,532.2 447.9,540.3 440.6,551.5 438.8,555.4 438.2,562.9 439,566.6 442.4,573.6 448.2,579 457.1,584.1 467.6,588.1 462.3,581.9 461.8,579 462.1,575.1 466.9,563.1 474.8,548.3 476.2,540.6 477.4,525.2 478,478.5 475.6,403.7 458.6,390.5Z" fill="#4a4a4a" fill-opacity=".40"/>
<path d="M456.4,393.9 459.4,471.8 458.9,502.5 457.8,519.3 455.5,531.8 447.9,540.3 441.4,549.7 438.7,555.9 438.1,560.9 438.9,566.2 441.6,572.4 446.7,577.9 450.7,580.1 448.1,565.2 445.3,563.4 451.4,553 456.9,546.2 459.8,541.7 462,530.2 463.2,516.4 463.9,481.3 463.1,445.9 461,399.1 458.6,390.5 457.3,391.7Z" fill="#303030" fill-opacity=".18"/>
<path d="M493.4,381.2 476.6,383.9 467.8,386.2 461.3,388.8 459,390.2 457.4,391.6 456.5,393 459.3,467.7 459.2,489.2 458.4,513.9 456.9,525.9 455.5,531.9 449.3,538.5 445.9,542.9 441.5,549.5 438.7,555.6 438,561.9 439.2,567.2 440.6,570.8 442.2,573.4 446.3,577.6 449.6,580.1 455.9,583.6 460.8,585.7 473.9,589.9 488.3,592.9 496.3,594 513.4,595.6 522.3,596 531.4,596.2 549.5,595.6 558.3,595 575.1,592.9 582.9,591.5 596.8,588.1 609.1,583.6 615.8,580.1 619.6,577.6 622.6,575.1 626.2,570.8 628.8,564.6 629.5,559.3 628.4,553 625.1,547 619.1,538.5 611.7,530.7 610.3,525.9 609.2,519.3 607.9,503.3 606.8,471.4 607,441.9 608.4,393 607.9,391.6 606.8,390.2 604.9,388.8 602.4,387.5 595.4,385 586.2,382.9 568.9,380.5 548.8,379.1 527.4,378.9 506.4,379.9Z" fill="none" stroke="#161616" stroke-width="1.05" stroke-linejoin="round"/>
<path d="M467.6,588.1 464.6,586.6 463.4,585.1 461.8,579 462.1,575.1 466.9,563.1 474.8,548.3 476.2,540.6 477.4,525.2 478,478.5 475.6,403.7" fill="none" stroke="#222" stroke-opacity="0.7" stroke-width="0.6"/>
<ellipse cx="532.3" cy="393.7" rx="84.5" ry="16.4" transform="rotate(-0.33 532.3 393.7)" fill="#9e9e9e"/>
<ellipse cx="532.3" cy="391.5" rx="86.8" ry="16.7" transform="rotate(-0.33 532.3 391.5)" fill="#a6a6a6"/>
<ellipse cx="532.3" cy="388.2" rx="86.8" ry="16.5" transform="rotate(-0.33 532.3 388.2)" fill="#a6a6a6"/>
<ellipse cx="532.3" cy="384.9" rx="86.9" ry="16.4" transform="rotate(-0.32 532.3 384.9)" fill="#a7a7a7"/>
<ellipse cx="532.2" cy="381.6" rx="86.9" ry="16.3" transform="rotate(-0.32 532.2 381.6)" fill="#a7a7a7"/>
<ellipse cx="532.2" cy="378.3" rx="87" ry="16.1" transform="rotate(-0.32 532.2 378.3)" fill="#a7a7a7"/>
<ellipse cx="532.2" cy="375" rx="87" ry="16" transform="rotate(-0.32 532.2 375)" fill="#a8a8a8"/>
<ellipse cx="532.2" cy="373.3" rx="87" ry="15.9" transform="rotate(-0.31 532.2 373.3)" fill="#a8a8a8"/>
<path d="M518.4,357.7 495,359.1 474.5,361.7 458.4,365.3 450.9,368.1 446.4,371.1 445.4,372.6 445.6,392.3 446.2,394 449.9,397.8 455.2,400.9 469,404.9 481.6,407.1 496.4,408.7 512.7,409.8 529.9,410.1 547.2,409.8 563.8,408.7 579.1,407.1 592.3,404.9 603,402.3 610.9,399.4 615.5,396.2 618.8,392.3 619.2,372.6 618.6,371.1 615.1,368.1 608.4,365.3 593.5,361.7 573.8,359.1 550.9,357.7Z" fill="url(#lg1_2)"/>
<path d="M445.5,372.5 445.8,392.8 447.9,395.8 450,397.9 454.7,400.6 460.2,402.6 469,404.9 467.3,402.9 466.9,384.2 447.8,369.9Z" fill="#4a4a4a" fill-opacity=".40"/>
<path d="M445.2,374.6 445.6,392.5 447.3,395.2 450.2,398 452.9,399.7 450.6,391 450.3,379.2 447.8,369.9 445.8,372Z" fill="#303030" fill-opacity=".18"/>
<path d="M518.4,357.7 495,359.1 474.5,361.7 458.4,365.3 450.9,368.1 446.4,371.1 445.4,372.6 445.6,392.3 446.2,394 449.9,397.8 455.2,400.9 463.7,403.7 469,404.9 481.6,407.1 496.4,408.7 512.7,409.8 529.9,410.1 547.2,409.8 563.8,408.7 579.1,407.1 592.3,404.9 603,402.3 610.9,399.4 615.5,396.2 618.8,392.3 619.2,372.6 618.6,371.1 617.2,369.5 615.1,368.1 608.4,365.3 593.5,361.7 573.8,359.1 550.9,357.7 534.7,357.4Z" fill="none" stroke="#161616" stroke-width="1.05" stroke-linejoin="round"/>
<path d="M469,404.9 467.3,402.9 466.9,384.2" fill="none" stroke="#222" stroke-opacity="0.7" stroke-width="0.6"/>
<ellipse cx="532.1" cy="373.4" rx="92" ry="16.8" transform="rotate(-0.31 532.1 373.4)" fill="#a4a4a4"/>
<ellipse cx="532.1" cy="372" rx="94.5" ry="17.2" transform="rotate(-0.31 532.1 372)" fill="#aaaaaa"/>
<ellipse cx="532.1" cy="370.1" rx="96.4" ry="17.5" transform="rotate(-0.31 532.1 370.1)" fill="#aeaeae"/>
<ellipse cx="532.1" cy="367.2" rx="96.5" ry="17.3" transform="rotate(-0.31 532.1 367.2)" fill="#afafaf"/>
<ellipse cx="532.1" cy="364.3" rx="96.5" ry="17.2" transform="rotate(-0.31 532.1 364.3)" fill="#afafaf"/>
<ellipse cx="532" cy="361.3" rx="96.6" ry="17" transform="rotate(-0.30 532 361.3)" fill="#b0b0b0"/>
<ellipse cx="532" cy="358.4" rx="96.6" ry="16.9" transform="rotate(-0.30 532 358.4)" fill="#b0b0b0"/>
<ellipse cx="532" cy="355.4" rx="96.7" ry="16.7" transform="rotate(-0.30 532 355.4)" fill="#b1b1b1"/>
<ellipse cx="532" cy="352.5" rx="96.7" ry="16.6" transform="rotate(-0.29 532 352.5)" fill="#b1b1b1"/>
<ellipse cx="531.9" cy="349.5" rx="96.7" ry="16.5" transform="rotate(-0.29 531.9 349.5)" fill="#b2b2b2"/>
<ellipse cx="531.9" cy="348" rx="96.8" ry="16.4" transform="rotate(-0.29 531.9 348)" fill="#b2b2b2"/>
<path d="M507.9,332.3 482.8,334.1 461.5,337.1 445.6,341.1 438.8,344 436.7,345.6 435.5,347.2 435.2,348.8 435.7,371 436.3,372.7 439.8,376.2 448.1,380.7 457.3,383.6 463.1,384.9 476.8,387.1 492.9,388.8 510.7,389.9 529.5,390.2 548.3,389.9 566.5,388.8 583.1,387.1 597.6,384.9 609.2,382.2 617.7,379.1 623.1,376.2 627.1,372.7 628.3,371 628.7,347.2 628,345.6 626.4,344 623.9,342.5 616.5,339.7 599.9,336 585.8,334.1 569.8,332.8 543.7,331.7Z" fill="url(#lg1_3)"/>
<path d="M435.6,347 435.9,371.4 438.2,374.6 440.4,376.6 447.6,380.4 453.5,382.5 463.1,384.9 459.6,382 459.1,359.2 438.3,344.4Z" fill="#4a4a4a" fill-opacity=".40"/>
<path d="M435.4,347.4 435.8,371.1 436.5,372.9 440.1,376.4 445.6,379.5 443.1,369.7 441.1,368.5 440.8,354 438.3,344.4 436.5,345.8Z" fill="#303030" fill-opacity=".18"/>
<path d="M507.9,332.3 482.8,334.1 461.5,337.1 450.2,339.7 445.6,341.1 438.8,344 436.7,345.6 435.5,347.2 435.2,348.8 435.7,371 436.3,372.7 439.8,376.2 442.3,377.8 448.1,380.7 457.3,383.6 463.1,384.9 476.8,387.1 492.9,388.8 510.7,389.9 529.5,390.2 548.3,389.9 566.5,388.8 583.1,387.1 597.6,384.9 609.2,382.2 617.7,379.1 623.1,376.2 627.1,372.7 628.3,371 628.7,347.2 628,345.6 626.4,344 623.9,342.5 616.5,339.7 599.9,336 585.8,334.1 569.8,332.8 543.7,331.7 525.7,331.7Z" fill="none" stroke="#161616" stroke-width="1.05" stroke-linejoin="round"/>
<path d="M463.1,384.9 461.1,383.7 459.6,382 459.1,359.2" fill="none" stroke="#222" stroke-opacity="0.7" stroke-width="0.6"/>
<ellipse cx="531.9" cy="347.9" rx="92.1" ry="15.6" transform="rotate(-0.29 531.9 347.9)" fill="#686868"/>
<ellipse cx="531.9" cy="344.5" rx="92.1" ry="15.4" transform="rotate(-0.29 531.9 344.5)" fill="#737373"/>
<ellipse cx="531.9" cy="341" rx="92.2" ry="15.3" transform="rotate(-0.28 531.9 341)" fill="#7e7e7e"/>
<ellipse cx="531.9" cy="341" rx="94.8" ry="15.7" transform="rotate(-0.28 531.9 341)" fill="#b1b1b1"/>
<ellipse cx="531.8" cy="337.6" rx="95.7" ry="15.7" transform="rotate(-0.28 531.8 337.6)" fill="#b2b2b2"/>
<ellipse cx="531.8" cy="334.1" rx="96.6" ry="15.7" transform="rotate(-0.28 531.8 334.1)" fill="#b2b2b2"/>
<ellipse cx="531.8" cy="330.7" rx="97.6" ry="15.6" transform="rotate(-0.27 531.8 330.7)" fill="#b3b3b3"/>
<ellipse cx="531.7" cy="327.3" rx="98.5" ry="15.6" transform="rotate(-0.27 531.7 327.3)" fill="#b3b3b3"/>
<ellipse cx="531.7" cy="323.8" rx="99.4" ry="15.6" transform="rotate(-0.27 531.7 323.8)" fill="#b4b4b4"/>
<ellipse cx="531.7" cy="320.4" rx="100.3" ry="15.5" transform="rotate(-0.27 531.7 320.4)" fill="#b5b5b5"/>
<ellipse cx="531.6" cy="316.9" rx="101.3" ry="15.5" transform="rotate(-0.26 531.6 316.9)" fill="#b5b5b5"/>
<ellipse cx="531.6" cy="313.5" rx="102.2" ry="15.4" transform="rotate(-0.26 531.6 313.5)" fill="#b6b6b6"/>
<ellipse cx="531.6" cy="310" rx="103.1" ry="15.4" transform="rotate(-0.26 531.6 310)" fill="#b7b7b7"/>
<ellipse cx="531.5" cy="306.5" rx="104" ry="15.3" transform="rotate(-0.25 531.5 306.5)" fill="#b7b7b7"/>
<ellipse cx="531.5" cy="303.1" rx="105" ry="15.3" fill="#b8b8b8"/>
<ellipse cx="531.5" cy="299.6" rx="105.9" ry="15.2" fill="#b8b8b8"/>
<ellipse cx="531.4" cy="296.1" rx="106.9" ry="15.2" fill="#b9b9b9"/>
<ellipse cx="531.4" cy="293.1" rx="104.3" ry="14.6" fill="#c4c4c4"/>
<ellipse cx="531.4" cy="290.1" rx="101.7" ry="14.1" fill="#c6c6c6"/>
<path d="M497.2,277 464.4,279.8 451.2,281.8 440.8,284.1 433.6,286.6 431.4,288 425,295.2 424.6,296.7 437.1,341.8 437.7,343.3 439.8,345.1 439.9,348.7 440.5,350.3 442,351.8 447.8,354.7 457,357.4 476.5,360.7 492.6,362.2 510.5,363.2 538.7,363.5 566.3,362.2 583,360.7 597.4,358.6 613.7,354.7 620.5,351.8 622.5,350.3 623.7,348.7 624,344.2 626.4,341.8 638.2,295.2 637.4,293.8 630.6,286.6 624.5,284.1 615.1,281.8 602.7,279.8 579.7,277.5 543.8,276 515.5,276.2Z" fill="url(#lg1_4)"/>
<path d="M437.1,341.8 440,345.2 440.3,349.7 442.6,352.1 447.2,354.5 453.2,356.4 462.8,358.6 462.6,351.4 460.2,349.7 450.8,306.4 454.8,299.7 433.1,287 430.4,289 425.1,295.1 424.8,297.4Z" fill="#4a4a4a" fill-opacity=".40"/>
<path d="M424.7,297 437.1,341.8 437.9,343.5 439.9,345.2 439.9,348.9 440.7,350.4 442.4,352 445.3,353.6 445.1,346.5 442.6,337.6 440.2,337.5 430.6,301.5 435.5,295.2 433.1,287 431.2,288.1 426,294.1 424.9,295.4Z" fill="#303030" fill-opacity=".18"/>
<path d="M497.2,277 479.9,278.1 464.4,279.8 451.2,281.8 440.8,284.1 433.6,286.6 431.4,288 425,295.2 424.6,296.7 437.1,341.8 437.7,343.3 439.8,345.1 439.9,348.7 440.5,350.3 442,351.8 447.8,354.7 457,357.4 476.5,360.7 492.6,362.2 510.5,363.2 538.7,363.5 566.3,362.2 583,360.7 597.4,358.6 603.6,357.4 613.7,354.7 620.5,351.8 622.5,350.3 623.7,348.7 624,344.2 626.4,341.8 638.2,295.2 637.4,293.8 632.3,288 630.6,286.6 624.5,284.1 615.1,281.8 602.7,279.8 579.7,277.5 562.3,276.5 543.8,276 515.5,276.2Z" fill="none" stroke="#161616" stroke-width="1.05" stroke-linejoin="round"/>
<path d="M462.8,358.6 462.6,351.4 460.6,351.7 450.8,306.4 454.8,299.7" fill="none" stroke="#222" stroke-opacity="0.7" stroke-width="0.6"/>
<ellipse cx="531.4" cy="296.1" rx="106.9" ry="15.2" fill="none" stroke="#3a3a3a" stroke-width="0.7"/>
<ellipse cx="531.4" cy="290.1" rx="101.7" ry="14.1" fill="#c6c6c6" stroke="#555" stroke-width="0.5"/>
<ellipse cx="531.4" cy="290" rx="93.8" ry="13" fill="#cccccc" stroke="#707070" stroke-width="0.6"/>
<g clip-path="url(#hole1)">
<ellipse cx="531.5" cy="292.6" rx="89.2" ry="12.5" fill="#9a9a9a"/>
<ellipse cx="531.5" cy="294.5" rx="83.9" ry="11.8" fill="url(#in1)" stroke="#555" stroke-width="0.6"/>
<ellipse cx="531.5" cy="300.2" rx="80.2" ry="11.6" fill="url(#in1)"/>
<ellipse cx="531.6" cy="306" rx="76.7" ry="11.3" transform="rotate(-0.25 531.6 306)" fill="url(#in1)"/>
<ellipse cx="531.7" cy="311.7" rx="73.4" ry="11" transform="rotate(-0.26 531.7 311.7)" fill="url(#in1)"/>
<ellipse cx="531.7" cy="317.4" rx="70.2" ry="10.8" transform="rotate(-0.26 531.7 317.4)" fill="url(#in1)"/>
<ellipse cx="531.8" cy="323.1" rx="67" ry="10.5" transform="rotate(-0.27 531.8 323.1)" fill="url(#in1)"/>
<ellipse cx="531.8" cy="328.8" rx="63.9" ry="10.2" transform="rotate(-0.27 531.8 328.8)" fill="url(#in1)"/>
<ellipse cx="531.8" cy="328.8" rx="63.9" ry="10.2" transform="rotate(-0.27 531.8 328.8)" fill="#9e9e9e" stroke="#666" stroke-width="0.5"/>
<path d="M474.6,280.2 466.9,281.2 480.5,307.2 487.4,306.2Z" fill="#5c5c5c" stroke="#3a3a3a" stroke-width="0.5"/>
<path d="M599.6,281.2 592.3,280.2 579.2,306.2 585.7,307.2Z" fill="#5c5c5c" stroke="#3a3a3a" stroke-width="0.5"/>
</g>
<path d="M474.6,280.2 468.4,279.3 464.9,284.5 457.2,285.4 460.7,280.3 466.9,281.2Z" fill="#767676" stroke="#3a3a3a" stroke-width="0.4"/>
<path d="M599.6,281.2 606.3,280.3 610,285.4 602.8,284.5 599,279.3 592.3,280.2Z" fill="#767676" stroke="#3a3a3a" stroke-width="0.4"/>
<path d="M458.9,298.1 451.3,299.1 447,305.8 454.2,307 458.5,300.2 466.2,299.2Z" fill="#787878" stroke="#3a3a3a" stroke-width="0.4"/>
<path d="M447.3,305.8 454.5,306.9 458.6,326.1 451.5,324.9Z" fill="#545454" stroke="#2a2a2a" stroke-width="0.6"/>
<path d="M592.7,299.2 600,300.2 604.2,307 611.9,305.8 607.7,299.1 600.5,298.1Z" fill="#787878" stroke="#3a3a3a" stroke-width="0.4"/>
<path d="M603.9,306.9 611.6,305.8 608,324.9 600.3,326.1Z" fill="#545454" stroke="#2a2a2a" stroke-width="0.6"/>
</g>
<g id="rook0">
<ellipse cx="338.8" cy="784.3" rx="134.6" ry="52.7" transform="rotate(-3.48 338.8 784.3)" fill="#4d4d4d"/>
<ellipse cx="338.7" cy="782.2" rx="136.7" ry="53.4" transform="rotate(-3.47 338.7 782.2)" fill="#4f4f4f"/>
<ellipse cx="338.5" cy="780" rx="138.6" ry="54" transform="rotate(-3.45 338.5 780)" fill="#515151"/>
<ellipse cx="338.4" cy="777.2" rx="138.7" ry="53.8" transform="rotate(-3.44 338.4 777.2)" fill="#535353"/>
<ellipse cx="338.3" cy="774.3" rx="138.8" ry="53.6" transform="rotate(-3.42 338.3 774.3)" fill="#545454"/>
<ellipse cx="338.2" cy="771.4" rx="138.8" ry="53.4" transform="rotate(-3.41 338.2 771.4)" fill="#565656"/>
<ellipse cx="338" cy="768.5" rx="138.9" ry="53.2" transform="rotate(-3.39 338 768.5)" fill="#585858"/>
<ellipse cx="337.9" cy="765.6" rx="139" ry="53.1" transform="rotate(-3.37 337.9 765.6)" fill="#5b5b5b"/>
<ellipse cx="337.8" cy="762.7" rx="139" ry="52.9" transform="rotate(-3.36 337.8 762.7)" fill="#5d5d5d"/>
<ellipse cx="337.7" cy="759.8" rx="139.1" ry="52.7" transform="rotate(-3.34 337.7 759.8)" fill="#606060"/>
<ellipse cx="337.5" cy="757" rx="139.2" ry="52.5" transform="rotate(-3.33 337.5 757)" fill="#646464"/>
<ellipse cx="337.4" cy="754.1" rx="139.2" ry="52.3" transform="rotate(-3.31 337.4 754.1)" fill="#696969"/>
<ellipse cx="337.3" cy="751.6" rx="138" ry="51.7" transform="rotate(-3.30 337.3 751.6)" fill="#707070"/>
<ellipse cx="337.3" cy="750.6" rx="136.7" ry="51.2" transform="rotate(-3.29 337.3 750.6)" fill="#727272"/>
<ellipse cx="337.1" cy="746.3" rx="137.6" ry="51.2" transform="rotate(-3.27 337.1 746.3)" fill="#707070"/>
<ellipse cx="337" cy="742.9" rx="138.3" ry="51.2" transform="rotate(-3.25 337 742.9)" fill="#6f6f6f"/>
<ellipse cx="336.8" cy="739.5" rx="138.9" ry="51.1" transform="rotate(-3.23 336.8 739.5)" fill="#6e6e6e"/>
<ellipse cx="336.7" cy="736" rx="139.2" ry="51" transform="rotate(-3.21 336.7 736)" fill="#6e6e6e"/>
<ellipse cx="336.5" cy="732.5" rx="139.5" ry="50.9" transform="rotate(-3.19 336.5 732.5)" fill="#6e6e6e"/>
<ellipse cx="336.4" cy="729" rx="139.7" ry="50.7" transform="rotate(-3.17 336.4 729)" fill="#6d6d6d"/>
<ellipse cx="336.2" cy="725.6" rx="139.9" ry="50.5" transform="rotate(-3.15 336.2 725.6)" fill="#6d6d6d"/>
<ellipse cx="336.1" cy="722.2" rx="139.8" ry="50.3" transform="rotate(-3.14 336.1 722.2)" fill="#6d6d6d"/>
<ellipse cx="336" cy="718.7" rx="139" ry="49.7" transform="rotate(-3.12 336 718.7)" fill="#6d6d6d"/>
<ellipse cx="335.8" cy="715.3" rx="137.6" ry="49" transform="rotate(-3.10 335.8 715.3)" fill="#6e6e6e"/>
<ellipse cx="335.7" cy="712" rx="135.9" ry="48.1" transform="rotate(-3.08 335.7 712)" fill="#6f6f6f"/>
<ellipse cx="335.6" cy="708.9" rx="134.3" ry="47.3" transform="rotate(-3.07 335.6 708.9)" fill="#6f6f6f"/>
<ellipse cx="335.6" cy="705.8" rx="132.4" ry="46.5" transform="rotate(-3.05 335.6 705.8)" fill="#707070"/>
<ellipse cx="335.5" cy="702.9" rx="130.2" ry="45.5" transform="rotate(-3.03 335.5 702.9)" fill="#707070"/>
<ellipse cx="335.4" cy="700" rx="127.9" ry="44.5" transform="rotate(-3.02 335.4 700)" fill="#717171"/>
<ellipse cx="335.3" cy="697.1" rx="125.5" ry="43.5" transform="rotate(-3.00 335.3 697.1)" fill="#717171"/>
<ellipse cx="335.2" cy="694.2" rx="123.2" ry="42.5" transform="rotate(-2.99 335.2 694.2)" fill="#727272"/>
<ellipse cx="335.2" cy="691.2" rx="121" ry="41.6" transform="rotate(-2.97 335.2 691.2)" fill="#727272"/>
<ellipse cx="335.1" cy="688.3" rx="118.7" ry="40.6" transform="rotate(-2.96 335.1 688.3)" fill="#727272"/>
<ellipse cx="335" cy="685.4" rx="116.4" ry="39.7" transform="rotate(-2.94 335 685.4)" fill="#737373"/>
<ellipse cx="334.9" cy="682.4" rx="114.1" ry="38.7" transform="rotate(-2.93 334.9 682.4)" fill="#737373"/>
<ellipse cx="334.8" cy="679.5" rx="111.8" ry="37.7" transform="rotate(-2.91 334.8 679.5)" fill="#747474"/>
<ellipse cx="334.8" cy="676.5" rx="109.6" ry="36.9" transform="rotate(-2.90 334.8 676.5)" fill="#747474"/>
<ellipse cx="334.7" cy="673.5" rx="107.7" ry="36" transform="rotate(-2.88 334.7 673.5)" fill="#747474"/>
<ellipse cx="334.6" cy="670.4" rx="105.9" ry="35.3" transform="rotate(-2.87 334.6 670.4)" fill="#757575"/>
<ellipse cx="334.4" cy="667.2" rx="104.4" ry="34.6" transform="rotate(-2.85 334.4 667.2)" fill="#757575"/>
<ellipse cx="334.3" cy="663.8" rx="103" ry="34" transform="rotate(-2.83 334.3 663.8)" fill="#767676"/>
<ellipse cx="334.2" cy="660.4" rx="101.7" ry="33.3" transform="rotate(-2.82 334.2 660.4)" fill="#767676"/>
<ellipse cx="334.1" cy="656.9" rx="100.5" ry="32.8" transform="rotate(-2.80 334.1 656.9)" fill="#767676"/>
<ellipse cx="333.9" cy="653.4" rx="99.6" ry="32.3" transform="rotate(-2.78 333.9 653.4)" fill="#777777"/>
<ellipse cx="333.8" cy="649.9" rx="98.9" ry="31.9" transform="rotate(-2.76 333.8 649.9)" fill="#777777"/>
<ellipse cx="333.7" cy="646.4" rx="98.4" ry="31.6" transform="rotate(-2.75 333.7 646.4)" fill="#777777"/>
<ellipse cx="333.5" cy="642.9" rx="98" ry="31.2" transform="rotate(-2.73 333.5 642.9)" fill="#767676"/>
<ellipse cx="333.4" cy="639.3" rx="97.7" ry="31" transform="rotate(-2.71 333.4 639.3)" fill="#767676"/>
<ellipse cx="333.2" cy="635.6" rx="97.5" ry="30.7" transform="rotate(-2.69 333.2 635.6)" fill="#757575"/>
<path d="M301.3,607.9 284.6,611 276.9,612.9 262.9,617.3 256.8,619.8 246.6,625.2 242.7,628.1 239.7,631 237.5,634 236.2,637.1 234.8,654.9 233,661.9 230.6,668.4 227.4,674.1 206,702.6 199.2,716.6 197.2,723.4 196.4,728.4 196.5,731.9 198.2,747.5 199.5,754.5 198.4,760.6 200.1,786.8 200.7,792.2 202.7,797.4 206.1,802.6 214.9,811.2 220.9,815.8 228.1,820 236.6,823.9 246.2,827.4 256.9,830.4 268.4,832.9 280.8,834.9 293.9,836.4 307.4,837.3 321.3,837.6 335.4,837.3 363.6,834.9 377.3,832.9 390.5,830.4 403.1,827.4 415,823.9 426,820 436.1,815.8 445,811.2 452.8,806.4 459.4,801.4 464.8,796.3 472.5,786.8 475.3,781.4 476.7,776.1 476.4,745.1 474.8,739.4 475.6,728.8 475.6,713.5 473.5,705.5 466.3,692 458.8,682.7 441.6,663.7 437.9,658.3 435.1,652.1 432.8,645.4 430,628.1 428.5,625.2 426.1,622.4 422.9,619.8 414,615 402.4,611 395.6,609.4 380.5,606.7 363.9,605.1 337.1,604.7 319,605.8Z" fill="url(#lg0_0)"/>
<path d="M196.7,726.8 198,744.5 199.6,755.1 198.7,758.7 200.8,792.5 205.5,801.7 213,809.2 218.1,813.7 228.1,820 223.8,805.4 222.8,789.4 223.8,786.5 224.8,785.2 222.5,774 221.6,766.9 220.9,756.1 221.5,752.3 226.7,737.3 243.4,705.3 246.7,698.1 251.2,683.3 252.7,675.6 253.4,668.1 253.7,656.8 242,628.8 237.7,633.8 236,638.1 235.7,647.4 234.8,654.9 232.7,663.5 230.9,667.9 227.4,674.1 209.1,698.1 204.6,704.8 201.7,711.1 197.5,722.2Z" fill="#4a4a4a" fill-opacity=".40"/>
<path d="M196.5,729.6 198.2,747.2 199.6,754.5 198.4,761.5 200.5,790.1 201,792.9 203.2,798.1 207.7,802.8 213.6,771.5 209.8,766.8 208.5,746.9 210.3,738.1 207.9,726.9 207.1,721.2 228.2,689.8 233,679.7 236.5,668.9 240.8,646.1 241.9,635.8 242,628.8 238.3,632.9 236.1,637.5 234.8,654.9 232.9,662.4 230.6,668.4 227.4,674.1 211.1,695.3 204,706.1 197.8,720.8Z" fill="#303030" fill-opacity=".18"/>
<path d="M301.3,607.9 284.6,611 276.9,612.9 262.9,617.3 256.8,619.8 246.6,625.2 242.7,628.1 239.7,631 237.5,634 236.2,637.1 235.7,647.4 234.8,654.9 233,661.9 230.6,668.4 227.4,674.1 211.1,695.3 206,702.6 204.3,705.5 199.2,716.6 197.9,720 197.2,723.4 196.4,728.4 196.5,731.9 198.2,747.5 199.5,754.5 198.4,760.6 200.1,786.8 200.7,792.2 202.7,797.4 206.1,802.6 214.9,811.2 220.9,815.8 228.1,820 236.6,823.9 246.2,827.4 256.9,830.4 268.4,832.9 280.8,834.9 293.9,836.4 307.4,837.3 321.3,837.6 335.4,837.3 349.6,836.4 363.6,834.9 377.3,832.9 390.5,830.4 403.1,827.4 415,823.9 426,820 436.1,815.8 445,811.2 452.8,806.4 459.4,801.4 464.8,796.3 472.5,786.8 475.3,781.4 476.7,776.1 476.4,745.1 474.8,739.4 475.6,728.8 475.6,713.5 473.5,705.5 466.3,692 458.8,682.7 441.6,663.7 437.9,658.3 435.1,652.1 432.8,645.4 431.4,638.2 430,628.1 428.5,625.2 426.1,622.4 422.9,619.8 418.9,617.3 414,615 402.4,611 395.6,609.4 380.5,606.7 363.9,605.1 355.1,604.7 337.1,604.7 319,605.8Z" fill="none" stroke="#ffff00" stroke-width="1.5" stroke-linejoin="round"/>
<path d="M228.1,820 224.5,816.5 222.8,789.4 223.8,786.5 224.8,785.2 222,770.5 220.9,756.1 222.6,748.4 226.7,737.3 243.4,705.3 248,694.5 251.2,683.3 252.7,675.6 253.6,664.3 253.7,656.8" fill="none" stroke="#ffff00" stroke-width="1.5"/>
<ellipse cx="333.2" cy="635.7" rx="99.9" ry="31.5" transform="rotate(-2.69 333.2 635.7)" fill="#7b7b7b"/>
<ellipse cx="333.2" cy="635" rx="101.5" ry="32" transform="rotate(-2.69 333.2 635)" fill="#7c7c7c"/>
<ellipse cx="333.1" cy="634.3" rx="102.9" ry="32.4" transform="rotate(-2.68 333.1 634.3)" fill="#7d7d7d"/>
<ellipse cx="333" cy="632.4" rx="105.3" ry="33" transform="rotate(-2.68 333 632.4)" fill="#7f7f7f"/>
<ellipse cx="332.9" cy="630.3" rx="106.6" ry="33.3" transform="rotate(-2.66 332.9 630.3)" fill="#808080"/>
<ellipse cx="332.7" cy="627.5" rx="107.6" ry="33.5" transform="rotate(-2.65 332.7 627.5)" fill="#828282"/>
<ellipse cx="332.6" cy="624.5" rx="108.2" ry="33.5" transform="rotate(-2.64 332.6 624.5)" fill="#838383"/>
<ellipse cx="332.5" cy="621.8" rx="108.1" ry="33.3" transform="rotate(-2.62 332.5 621.8)" fill="#848484"/>
<ellipse cx="332.4" cy="619.1" rx="107.2" ry="32.9" transform="rotate(-2.61 332.4 619.1)" fill="#858585"/>
<ellipse cx="332.3" cy="616.4" rx="105.8" ry="32.3" transform="rotate(-2.60 332.3 616.4)" fill="#858585"/>
<ellipse cx="332.2" cy="613.8" rx="104.1" ry="31.6" transform="rotate(-2.58 332.2 613.8)" fill="#868686"/>
<ellipse cx="332.1" cy="611.2" rx="102.3" ry="31" transform="rotate(-2.57 332.1 611.2)" fill="#868686"/>
<ellipse cx="332.1" cy="608.7" rx="100.7" ry="30.3" transform="rotate(-2.56 332.1 608.7)" fill="#878787"/>
<ellipse cx="332" cy="606.3" rx="98.9" ry="29.7" transform="rotate(-2.55 332 606.3)" fill="#878787"/>
<ellipse cx="331.9" cy="604" rx="96.7" ry="28.9" transform="rotate(-2.54 331.9 604)" fill="#888888"/>
<ellipse cx="331.9" cy="601.7" rx="94.5" ry="28.1" transform="rotate(-2.52 331.9 601.7)" fill="#888888"/>
<ellipse cx="331.8" cy="599.4" rx="92.3" ry="27.4" transform="rotate(-2.51 331.8 599.4)" fill="#888888"/>
<ellipse cx="331.7" cy="597.1" rx="90.4" ry="26.7" transform="rotate(-2.50 331.7 597.1)" fill="#898989"/>
<ellipse cx="331.7" cy="594.7" rx="88.9" ry="26.1" transform="rotate(-2.49 331.7 594.7)" fill="#898989"/>
<ellipse cx="331.5" cy="590.9" rx="87.7" ry="25.6" transform="rotate(-2.47 331.5 590.9)" fill="#8a8a8a"/>
<ellipse cx="331.4" cy="588.2" rx="87.1" ry="25.3" transform="rotate(-2.46 331.4 588.2)" fill="#8a8a8a"/>
<ellipse cx="331.3" cy="585.3" rx="86.6" ry="25" transform="rotate(-2.45 331.3 585.3)" fill="#8b8b8b"/>
<ellipse cx="331.2" cy="582.5" rx="86.1" ry="24.8" transform="rotate(-2.43 331.2 582.5)" fill="#8b8b8b"/>
<ellipse cx="331.1" cy="579.5" rx="85.7" ry="24.5" transform="rotate(-2.42 331.1 579.5)" fill="#8c8c8c"/>
<ellipse cx="330.9" cy="576.5" rx="85.4" ry="24.3" transform="rotate(-2.40 330.9 576.5)" fill="#8d8d8d"/>
<ellipse cx="330.8" cy="573.5" rx="85.1" ry="24.1" transform="rotate(-2.39 330.8 573.5)" fill="#8d8d8d"/>
<ellipse cx="330.7" cy="570.5" rx="84.8" ry="23.9" transform="rotate(-2.38 330.7 570.5)" fill="#8e8e8e"/>
<ellipse cx="330.6" cy="567.5" rx="84.6" ry="23.7" transform="rotate(-2.36 330.6 567.5)" fill="#8e8e8e"/>
<ellipse cx="330.4" cy="564.5" rx="84.5" ry="23.5" transform="rotate(-2.35 330.4 564.5)" fill="#8f8f8f"/>
<ellipse cx="330.3" cy="561.6" rx="84.3" ry="23.3" transform="rotate(-2.33 330.3 561.6)" fill="#8f8f8f"/>
<ellipse cx="330.2" cy="558.6" rx="84.2" ry="23.2" transform="rotate(-2.32 330.2 558.6)" fill="#8f8f8f"/>
<ellipse cx="330.1" cy="555.7" rx="84.1" ry="23" transform="rotate(-2.31 330.1 555.7)" fill="#909090"/>
<ellipse cx="330" cy="552.8" rx="84" ry="22.9" transform="rotate(-2.29 330 552.8)" fill="#909090"/>
<ellipse cx="329.8" cy="549.8" rx="83.9" ry="22.7" transform="rotate(-2.28 329.8 549.8)" fill="#919191"/>
<ellipse cx="329.7" cy="546.9" rx="83.8" ry="22.6" transform="rotate(-2.26 329.7 546.9)" fill="#919191"/>
<ellipse cx="329.6" cy="543.9" rx="83.7" ry="22.4" transform="rotate(-2.25 329.6 543.9)" fill="#929292"/>
<ellipse cx="329.5" cy="540.9" rx="83.6" ry="22.3" transform="rotate(-2.24 329.5 540.9)" fill="#929292"/>
<ellipse cx="329.4" cy="538" rx="83.6" ry="22.1" transform="rotate(-2.22 329.4 538)" fill="#939393"/>
<ellipse cx="329.2" cy="535" rx="83.5" ry="22" transform="rotate(-2.21 329.2 535)" fill="#939393"/>
<ellipse cx="329.1" cy="532" rx="83.5" ry="21.8" transform="rotate(-2.19 329.1 532)" fill="#939393"/>
<ellipse cx="329" cy="529.1" rx="83.5" ry="21.7" transform="rotate(-2.18 329 529.1)" fill="#949494"/>
<ellipse cx="328.9" cy="526.1" rx="83.4" ry="21.6" transform="rotate(-2.17 328.9 526.1)" fill="#949494"/>
<ellipse cx="328.7" cy="523.1" rx="83.4" ry="21.4" transform="rotate(-2.15 328.7 523.1)" fill="#959595"/>
<ellipse cx="328.6" cy="520.1" rx="83.5" ry="21.3" transform="rotate(-2.14 328.6 520.1)" fill="#959595"/>
<ellipse cx="328.5" cy="517.2" rx="83.5" ry="21.2" transform="rotate(-2.13 328.5 517.2)" fill="#969696"/>
<ellipse cx="328.4" cy="514.2" rx="83.5" ry="21.1" transform="rotate(-2.11 328.4 514.2)" fill="#969696"/>
<ellipse cx="328.2" cy="511.2" rx="83.6" ry="21" transform="rotate(-2.10 328.2 511.2)" fill="#979797"/>
<ellipse cx="328.1" cy="508.2" rx="83.7" ry="20.9" transform="rotate(-2.08 328.1 508.2)" fill="#979797"/>
<ellipse cx="328" cy="505.2" rx="83.7" ry="20.7" transform="rotate(-2.07 328 505.2)" fill="#989898"/>
<ellipse cx="327.9" cy="502.2" rx="83.8" ry="20.6" transform="rotate(-2.06 327.9 502.2)" fill="#989898"/>
<ellipse cx="327.7" cy="499.2" rx="83.9" ry="20.5" transform="rotate(-2.04 327.7 499.2)" fill="#999999"/>
<ellipse cx="327.6" cy="496.2" rx="84" ry="20.4" transform="rotate(-2.03 327.6 496.2)" fill="#999999"/>
<ellipse cx="327.5" cy="493.2" rx="84.1" ry="20.3" transform="rotate(-2.02 327.5 493.2)" fill="#9a9a9a"/>
<ellipse cx="327.4" cy="490.2" rx="84.2" ry="20.2" transform="rotate(-2.00 327.4 490.2)" fill="#9a9a9a"/>
<ellipse cx="327.2" cy="487.2" rx="84.3" ry="20.1" transform="rotate(-1.99 327.2 487.2)" fill="#9b9b9b"/>
<ellipse cx="327.1" cy="484.2" rx="84.4" ry="20" transform="rotate(-1.98 327.1 484.2)" fill="#9b9b9b"/>
<ellipse cx="327" cy="481.2" rx="84.5" ry="19.9" transform="rotate(-1.96 327 481.2)" fill="#9b9b9b"/>
<ellipse cx="326.8" cy="478.2" rx="84.6" ry="19.8" transform="rotate(-1.95 326.8 478.2)" fill="#9b9b9b"/>
<ellipse cx="326.7" cy="475.2" rx="84.7" ry="19.6" transform="rotate(-1.93 326.7 475.2)" fill="#9b9b9b"/>
<ellipse cx="326.6" cy="472.1" rx="84.8" ry="19.5" transform="rotate(-1.92 326.6 472.1)" fill="#9b9b9b"/>
<ellipse cx="326.5" cy="469.1" rx="84.9" ry="19.4" transform="rotate(-1.91 326.5 469.1)" fill="#9b9b9b"/>
<ellipse cx="326.3" cy="466.1" rx="85" ry="19.3" transform="rotate(-1.89 326.3 466.1)" fill="#9b9b9b"/>
<ellipse cx="326.2" cy="463.1" rx="85.1" ry="19.2" transform="rotate(-1.88 326.2 463.1)" fill="#9b9b9b"/>
<ellipse cx="326.1" cy="460" rx="85.2" ry="19.1" transform="rotate(-1.87 326.1 460)" fill="#9b9b9b"/>
<ellipse cx="325.9" cy="457" rx="85.3" ry="19" transform="rotate(-1.85 325.9 457)" fill="#9b9b9b"/>
<ellipse cx="325.8" cy="454" rx="85.5" ry="18.9" transform="rotate(-1.84 325.8 454)" fill="#9b9b9b"/>
<ellipse cx="325.7" cy="450.9" rx="85.6" ry="18.8" transform="rotate(-1.83 325.7 450.9)" fill="#9a9a9a"/>
<ellipse cx="325.6" cy="447.9" rx="85.7" ry="18.7" transform="rotate(-1.81 325.6 447.9)" fill="#999999"/>
<ellipse cx="325.4" cy="444.8" rx="85.9" ry="18.6" transform="rotate(-1.80 325.4 444.8)" fill="#979797"/>
<ellipse cx="325.3" cy="441.8" rx="86" ry="18.5" transform="rotate(-1.79 325.3 441.8)" fill="#959595"/>
<ellipse cx="325.2" cy="438.7" rx="86.2" ry="18.4" transform="rotate(-1.77 325.2 438.7)" fill="#939393"/>
<path d="M289.5,423.1 268.9,426.5 252.7,430.9 245.1,434.3 242.4,436.1 240.5,437.9 239.3,439.7 239,441.5 243,490.3 245.4,526.4 246,553.3 245.8,577.2 245.1,586.7 243.4,594.9 237.2,601.8 233.2,607.1 228.5,614.6 225.7,620.5 225,623.2 224.5,629.3 225.1,632.6 225.8,635.5 228.6,641.5 232.8,646.7 238.8,651.2 243.4,653.9 249,656.5 256.6,659.3 265,661.6 281.3,664.8 299.9,666.8 309.8,667.4 319.9,667.5 340.5,666.8 360.8,664.8 379.8,661.6 388.6,659.6 404.2,654.9 412.2,651.7 424.5,645.2 430.9,640.4 434.2,637.2 436.5,633.9 437.8,631.7 440,625.6 440.7,619.3 439.7,613.4 438.8,610.9 435.6,605.4 428.6,596.2 419.6,587.3 416.7,576 414.6,558.2 412.2,523 411.5,490.3 411.3,436.1 410.9,434.3 409.6,432.6 407.6,430.9 404.8,429.3 397,426.5 386.8,424.1 367.5,421.5 352.7,420.5 328.9,420.3 304.8,421.5Z" fill="url(#lg0_1)"/>
<path d="M239.2,440.3 245.5,528.3 246.1,564 245.4,583.2 243.6,594.7 234.9,604.7 228.8,614.2 225.4,622.1 224.6,627.5 225.2,632.9 227,638.3 232.3,646.2 241.3,652.6 251.6,657.3 244.9,641 251.3,626.7 258.1,615.5 259.2,612.8 260.1,608.6 261.1,599.6 261.7,587 261.1,547.1 259.4,513.4 254.8,451.4 244.5,434.7 240.7,437.7Z" fill="#4a4a4a" fill-opacity=".40"/>
<path d="M239.1,442 244,502.9 245.5,530 246.1,565.8 245.4,583.2 243.5,594.9 235.2,604.4 228.4,614.9 225.5,621.3 224.6,627.3 225.3,633.1 226.1,636.2 228,640.3 231,644.6 233.1,646.1 236.2,647.2 239.7,628.6 236.9,626.9 234.6,624.9 233,622 236,617.2 244,607 245.4,604.4 249.7,582.6 251.1,568.2 251.1,541.9 250.3,515.5 244.5,434.7 241.2,437.2 239.3,439.9Z" fill="#303030" fill-opacity=".18"/>
<path d="M289.5,423.1 268.9,426.5 252.7,430.9 245.1,434.3 242.4,436.1 240.5,437.9 239.3,439.7 239,441.5 243,490.3 245.4,526.4 246,553.3 245.8,577.2 245.1,586.7 243.4,594.9 237.2,601.8 233.2,607.1 228.5,614.6 225.7,620.5 225,623.2 224.5,629.3 225.1,632.6 225.8,635.5 228.6,641.5 232.8,646.7 238.8,651.2 243.4,653.9 249,656.5 256.6,659.3 265,661.6 281.3,664.8 299.9,666.8 309.8,667.4 319.9,667.5 340.5,666.8 360.8,664.8 379.8,661.6 388.6,659.6 404.2,654.9 412.2,651.7 419.3,648.3 424.5,645.2 430.9,640.4 434.2,637.2 436.5,633.9 437.8,631.7 440,625.6 440.7,619.3 439.7,613.4 438.8,610.9 435.6,605.4 428.6,596.2 419.6,587.3 417.9,582.1 416.7,576 414.6,558.2 412.2,523 411.5,490.3 411.3,436.1 410.9,434.3 409.6,432.6 407.6,430.9 404.8,429.3 397,426.5 386.8,424.1 367.5,421.5 352.7,420.5 328.9,420.3 304.8,421.5Z" fill="none" stroke="#ffff00" stroke-width="1.5" stroke-linejoin="round"/>
<path d="M251.6,657.3 249,656.5 246.9,655.1 245.7,653.1 244,647.4 244,644.6 245.8,638.6 249.8,629.5 256.6,618.3 259.2,612.8 260.8,602.6 261.7,587 261.5,559.4 260.6,534.9 254.8,451.4" fill="none" stroke="#ffff00" stroke-width="1.5"/>
<ellipse cx="325" cy="438.9" rx="95.9" ry="20.4" transform="rotate(-1.77 325 438.9)" fill="#9c9c9c"/>
<ellipse cx="325" cy="437.7" rx="97.3" ry="20.7" transform="rotate(-1.77 325 437.7)" fill="#a1a1a1"/>
<ellipse cx="324.8" cy="434.6" rx="98.4" ry="20.8" transform="rotate(-1.75 324.8 434.6)" fill="#a5a5a5"/>
<ellipse cx="324.7" cy="430.9" rx="98.5" ry="20.6" transform="rotate(-1.74 324.7 430.9)" fill="#a5a5a5"/>
<ellipse cx="324.5" cy="427.2" rx="98.5" ry="20.4" transform="rotate(-1.72 324.5 427.2)" fill="#a5a5a5"/>
<ellipse cx="324.4" cy="423.6" rx="98.6" ry="20.2" transform="rotate(-1.70 324.4 423.6)" fill="#a6a6a6"/>
<ellipse cx="324.2" cy="419.9" rx="98.7" ry="20.1" transform="rotate(-1.69 324.2 419.9)" fill="#a6a6a6"/>
<ellipse cx="324.1" cy="416.2" rx="98.7" ry="19.9" transform="rotate(-1.67 324.1 416.2)" fill="#a6a6a6"/>
<path d="M319.3,396.5 292.2,398.3 267.4,401.5 247,405.9 236.6,409.4 232.6,411.3 227.2,415.2 225.8,417.1 225.4,419.1 226.5,437.6 228.3,442.8 229.8,444.8 232.3,446.7 237.1,449.7 246.6,453 259.4,455.8 275,457.8 292.7,459.1 321.8,459.5 341.4,458.6 360.4,456.9 377.7,454.5 392.8,451.4 405,447.8 413.9,444 418.3,440.8 420.6,438.7 421.9,436.7 423.2,431.5 422.7,413.2 422.1,411.3 420.7,409.4 418.3,407.6 411,404.3 394.4,400.3 372.3,397.5 346.7,396.2Z" fill="url(#lg0_2)"/>
<path d="M225.7,417.8 226.5,436.5 227.1,439.9 228.4,442.9 233.3,447.5 238.2,450.1 246.6,453 244.2,448.8 243.2,429.9 231.8,411.7 227.4,415Z" fill="#4a4a4a" fill-opacity=".40"/>
<path d="M225.7,417.4 225.4,419.6 226.5,437.7 228.5,443.1 231.9,446.4 235.4,434.3 234,433.1 232.9,429.9 231.8,411.8 228.1,414.4Z" fill="#303030" fill-opacity=".18"/>
<path d="M319.3,396.5 292.2,398.3 267.4,401.5 247,405.9 236.6,409.4 232.6,411.3 229.4,413.2 227.2,415.2 225.8,417.1 225.4,419.1 226.5,437.6 228.3,442.8 229.8,444.8 232.3,446.7 237.1,449.7 246.6,453 259.4,455.8 275,457.8 292.7,459.1 321.8,459.5 341.4,458.6 360.4,456.9 377.7,454.5 392.8,451.4 405,447.8 413.9,444 418.3,440.8 420.6,438.7 421.9,436.7 423.2,431.5 422.7,413.2 422.1,411.3 420.7,409.4 418.3,407.6 411,404.3 406.1,402.8 394.4,400.3 372.3,397.5 346.7,396.2Z" fill="none" stroke="#ffff00" stroke-width="1.5" stroke-linejoin="round"/>
<path d="M246.6,453 245.3,452 244.2,448.8 243.2,429.9" fill="none" stroke="#ffff00" stroke-width="1.5"/>
<ellipse cx="324" cy="416.3" rx="104.3" ry="21" transform="rotate(-1.67 324 416.3)" fill="#a2a2a2"/>
<ellipse cx="323.9" cy="415.5" rx="105.8" ry="21.3" transform="rotate(-1.67 323.9 415.5)" fill="#a5a5a5"/>
<ellipse cx="323.9" cy="414.7" rx="107.2" ry="21.5" transform="rotate(-1.67 323.9 414.7)" fill="#a8a8a8"/>
<ellipse cx="323.8" cy="413.9" rx="108.7" ry="21.8" transform="rotate(-1.66 323.8 413.9)" fill="#ababab"/>
<ellipse cx="323.7" cy="411" rx="109.4" ry="21.7" transform="rotate(-1.65 323.7 411)" fill="#adadad"/>
<ellipse cx="323.5" cy="407.7" rx="109.5" ry="21.6" transform="rotate(-1.63 323.5 407.7)" fill="#adadad"/>
<ellipse cx="323.4" cy="404.4" rx="109.5" ry="21.4" transform="rotate(-1.62 323.4 404.4)" fill="#aeaeae"/>
<ellipse cx="323.3" cy="401.2" rx="109.6" ry="21.2" transform="rotate(-1.61 323.3 401.2)" fill="#aeaeae"/>
<ellipse cx="323.1" cy="397.9" rx="109.6" ry="21" transform="rotate(-1.59 323.1 397.9)" fill="#afafaf"/>
<ellipse cx="323" cy="394.6" rx="109.7" ry="20.9" transform="rotate(-1.58 323 394.6)" fill="#afafaf"/>
<ellipse cx="322.8" cy="391.3" rx="109.8" ry="20.7" transform="rotate(-1.56 322.8 391.3)" fill="#b0b0b0"/>
<ellipse cx="322.7" cy="388" rx="109.8" ry="20.5" transform="rotate(-1.55 322.7 388)" fill="#b0b0b0"/>
<path d="M307.4,368.1 278,370.4 251.9,374.1 231.1,379 221.2,382.8 217.6,384.8 215,386.8 213.4,388.8 212.9,390.9 214.3,414.1 215.7,419.1 217.3,421.2 220.1,423.3 228.1,427.3 238.4,430.7 252.3,433.6 269.3,435.7 288.7,437.1 320.4,437.4 341.9,436.5 362.6,434.8 381.5,432.2 397.9,429.1 411.2,425.4 420.8,421.4 428.3,417 430.7,414.8 432.1,412.7 433,407.6 432.5,384.8 431.8,382.8 430.1,380.9 427.4,379 419.2,375.7 400.7,371.5 376.3,368.7 347.9,367.3 327.7,367.3Z" fill="url(#lg0_3)"/>
<path d="M213.3,389.5 214.4,413 215.8,419.3 219.6,422.9 225.5,425.9 230.6,428.2 238.4,430.7 233.6,422.9 232.4,402 220.4,383.3 215.3,386.6Z" fill="#4a4a4a" fill-opacity=".40"/>
<path d="M213,391.4 214.3,414.1 215.4,418.1 215.9,419.4 217.7,421.5 222.5,424 226.6,411.5 222.4,408.9 221.7,406 220.3,383.3 214.8,387 213.4,389.1Z" fill="#303030" fill-opacity=".18"/>
<path d="M307.4,368.1 278,370.4 251.9,374.1 237.3,377.3 231.1,379 221.2,382.8 217.6,384.8 215,386.8 213.4,388.8 212.9,390.9 214.3,414.1 215.7,419.1 217.3,421.2 220.1,423.3 228.1,427.3 238.4,430.7 252.3,433.6 269.3,435.7 288.7,437.1 320.4,437.4 341.9,436.5 362.6,434.8 381.5,432.2 397.9,429.1 411.2,425.4 420.8,421.4 428.3,417 430.7,414.8 432.1,412.7 433,407.6 432.5,384.8 431.8,382.8 430.1,380.9 427.4,379 419.2,375.7 413.8,374.1 400.7,371.5 376.3,368.7 347.9,367.3 327.7,367.3Z" fill="none" stroke="#ffff00" stroke-width="1.5" stroke-linejoin="round"/>
<path d="M238.4,430.7 234.5,428.8 233.8,425.9 232.4,402" fill="none" stroke="#ffff00" stroke-width="1.5"/>
<ellipse cx="322.8" cy="387.9" rx="104.5" ry="19.5" transform="rotate(-1.55 322.8 387.9)" fill="#676767"/>
<ellipse cx="322.6" cy="384" rx="104.6" ry="19.3" transform="rotate(-1.53 322.6 384)" fill="#727272"/>
<ellipse cx="322.5" cy="380.1" rx="104.6" ry="19.1" transform="rotate(-1.51 322.5 380.1)" fill="#7d7d7d"/>
<ellipse cx="322.4" cy="380.1" rx="107.6" ry="19.7" transform="rotate(-1.51 322.4 380.1)" fill="#afafaf"/>
<ellipse cx="322.2" cy="376.3" rx="108.6" ry="19.6" transform="rotate(-1.50 322.2 376.3)" fill="#b0b0b0"/>
<ellipse cx="322.1" cy="372.5" rx="109.7" ry="19.6" transform="rotate(-1.48 322.1 372.5)" fill="#b0b0b0"/>
<ellipse cx="321.9" cy="368.6" rx="110.8" ry="19.6" transform="rotate(-1.46 321.9 368.6)" fill="#b1b1b1"/>
<ellipse cx="321.7" cy="364.8" rx="111.8" ry="19.5" transform="rotate(-1.45 321.7 364.8)" fill="#b2b2b2"/>
<ellipse cx="321.5" cy="360.9" rx="112.9" ry="19.5" transform="rotate(-1.43 321.5 360.9)" fill="#b2b2b2"/>
<ellipse cx="321.3" cy="357.1" rx="113.9" ry="19.5" transform="rotate(-1.41 321.3 357.1)" fill="#b3b3b3"/>
<ellipse cx="321.2" cy="353.2" rx="115" ry="19.4" transform="rotate(-1.40 321.2 353.2)" fill="#b3b3b3"/>
<ellipse cx="321" cy="349.3" rx="116.1" ry="19.4" transform="rotate(-1.38 321 349.3)" fill="#b4b4b4"/>
<ellipse cx="320.8" cy="345.5" rx="117.1" ry="19.3" transform="rotate(-1.36 320.8 345.5)" fill="#b5b5b5"/>
<ellipse cx="320.6" cy="341.6" rx="118.2" ry="19.2" transform="rotate(-1.35 320.6 341.6)" fill="#b5b5b5"/>
<ellipse cx="320.4" cy="337.7" rx="119.3" ry="19.2" transform="rotate(-1.33 320.4 337.7)" fill="#b6b6b6"/>
<ellipse cx="320.3" cy="333.8" rx="120.3" ry="19.1" transform="rotate(-1.31 320.3 333.8)" fill="#b7b7b7"/>
<ellipse cx="320.1" cy="329.9" rx="121.4" ry="19" transform="rotate(-1.30 320.1 329.9)" fill="#b7b7b7"/>
<ellipse cx="320" cy="328.3" rx="119.9" ry="18.7" transform="rotate(-1.29 320 328.3)" fill="#c1c1c1"/>
<ellipse cx="320" cy="326.6" rx="118.5" ry="18.4" transform="rotate(-1.28 320 326.6)" fill="#c2c2c2"/>
<ellipse cx="319.9" cy="324.9" rx="117" ry="18" transform="rotate(-1.28 319.9 324.9)" fill="#c3c3c3"/>
<ellipse cx="319.9" cy="323.2" rx="115.5" ry="17.7" transform="rotate(-1.27 319.9 323.2)" fill="#c4c4c4"/>
<path d="M293.6,306.5 273.2,308 254.3,310 237.7,312.5 223.8,315.5 213.3,318.7 209.5,320.4 206.7,322.1 199.4,330.6 198.7,332.5 199.2,334.4 215.4,384.8 218.2,387.5 218.9,392.6 220.5,394.5 226.8,398 237,401.2 259.1,405 277.4,406.6 297.7,407.5 330,407.1 361.4,405 380.4,402.6 396.8,399.7 403.9,398 415.4,394.5 423.1,390.7 425.5,388.7 426.9,386.8 427.1,381.8 429.6,379 441.4,326.9 440.6,325 432.8,317 426.1,314 415.7,311.2 401.9,309 385.4,307.2 366.7,306 346.5,305.4 314.7,305.6Z" fill="url(#lg0_4)"/>
<path d="M207,322 198.9,331.8 199.4,334.6 215.5,385 218.3,387.6 219,392.7 222.7,396 227.9,398.4 237,401.2 236.6,393.2 232,386.4 219.9,342.9 224.7,335.3 212.4,319.1Z" fill="#4a4a4a" fill-opacity=".40"/>
<path d="M206.5,322.3 199.3,330.8 198.8,332.7 199.2,334.4 215.1,383.9 216.4,386 218.1,387.2 218.7,391.8 221.1,394.9 225.3,383.4 224.8,375.7 222.1,375.6 208,328 212.3,319.1Z" fill="#303030" fill-opacity=".18"/>
<path d="M293.6,306.5 273.2,308 254.3,310 237.7,312.5 223.8,315.5 213.3,318.7 209.5,320.4 206.7,322.1 199.4,330.6 198.7,332.5 199.2,334.4 215.4,384.8 218.2,387.5 218.3,390.7 218.9,392.6 220.5,394.5 223.1,396.3 226.8,398 237,401.2 250.9,403.9 259.1,405 277.4,406.6 297.7,407.5 330,407.1 361.4,405 380.4,402.6 396.8,399.7 403.9,398 415.4,394.5 423.1,390.7 425.5,388.7 426.9,386.8 427.1,381.8 429.6,379 441.4,326.9 440.6,325 432.8,317 426.1,314 415.7,311.2 401.9,309 385.4,307.2 366.7,306 346.5,305.4 314.7,305.6Z" fill="none" stroke="#ffff00" stroke-width="1.5" stroke-linejoin="round"/>
<path d="M237,401.2 236.6,393.2 234,393.6 219.9,342.9 224.7,335.3" fill="none" stroke="#ffff00" stroke-width="1.5"/>
<ellipse cx="319.9" cy="323.2" rx="115.5" ry="17.7" transform="rotate(-1.27 319.9 323.2)" fill="#c4c4c4" stroke="#555" stroke-width="0.5"/>
<ellipse cx="320" cy="323" rx="106.6" ry="16.3" transform="rotate(-1.27 320 323)" fill="#cacaca" stroke="#707070" stroke-width="0.6"/>
<g clip-path="url(#hole0)">
<ellipse cx="320.2" cy="325.9" rx="101.3" ry="15.7" transform="rotate(-1.28 320.2 325.9)" fill="#999999"/>
<ellipse cx="320.4" cy="328" rx="95.3" ry="14.8" transform="rotate(-1.29 320.4 328)" fill="url(#in0)" stroke="#555" stroke-width="0.6"/>
<ellipse cx="320.8" cy="334.4" rx="91.1" ry="14.5" transform="rotate(-1.32 320.8 334.4)" fill="url(#in0)"/>
<ellipse cx="321.1" cy="340.8" rx="87.1" ry="14.2" transform="rotate(-1.34 321.1 340.8)" fill="url(#in0)"/>
<ellipse cx="321.4" cy="347.2" rx="83.3" ry="13.8" transform="rotate(-1.37 321.4 347.2)" fill="url(#in0)"/>
<ellipse cx="321.7" cy="353.6" rx="79.6" ry="13.5" transform="rotate(-1.40 321.7 353.6)" fill="url(#in0)"/>
<ellipse cx="322" cy="360" rx="76" ry="13.1" transform="rotate(-1.43 322 360)" fill="url(#in0)"/>
<ellipse cx="322.3" cy="366.4" rx="72.5" ry="12.7" transform="rotate(-1.45 322.3 366.4)" fill="url(#in0)"/>
<ellipse cx="322.3" cy="366.4" rx="72.5" ry="12.7" transform="rotate(-1.45 322.3 366.4)" fill="#9d9d9d" stroke="#666" stroke-width="0.5"/>
<path d="M265.4,310.6 255.8,311.8 270.3,341.1 278.9,339.9Z" fill="#5b5b5b" stroke="#3a3a3a" stroke-width="0.5"/>
<path d="M404.6,311.8 397.2,310.6 381.7,339.9 388.2,341.1Z" fill="#5b5b5b" stroke="#3a3a3a" stroke-width="0.5"/>
</g>
<path d="M265.4,310.6 259.2,309.4 255.9,315.1 246.5,316.4 249.7,310.7 255.8,311.8Z" fill="#757575" stroke="#3a3a3a" stroke-width="0.4"/>
<path d="M404.6,311.8 412.8,310.7 417.6,316.4 410.3,315.1 405.4,309.4 397.2,310.6Z" fill="#757575" stroke="#3a3a3a" stroke-width="0.4"/>
<path d="M230.9,333.2 221.3,334.5 216.1,342.2 223.2,343.7 228.4,336 238,334.6Z" fill="#777777" stroke="#3a3a3a" stroke-width="0.4"/>
<path d="M216.5,342.1 223.5,343.6 229.5,365.1 222.5,363.5Z" fill="#535353" stroke="#2a2a2a" stroke-width="0.6"/>
<path d="M381.1,334.6 388.4,336 392.8,343.7 402.5,342.2 398.1,334.5 390.8,333.2Z" fill="#777777" stroke="#3a3a3a" stroke-width="0.4"/>
<path d="M392.5,343.6 402.2,342.1 399.3,363.5 389.7,365.1Z" fill="#535353" stroke="#2a2a2a" stroke-width="0.6"/>
<ellipse cx="338.8" cy="784.3" rx="134.6" ry="52.7" transform="rotate(-3.48 338.8 784.3)" fill="none" stroke="#ffff00" stroke-width="2.4"/>
<ellipse cx="322.4" cy="380.1" rx="105.7" ry="19.3" transform="rotate(-1.51 322.4 380.1)" fill="none" stroke="#ffff00" stroke-width="1.9"/>
<ellipse cx="320.1" cy="329.9" rx="121.4" ry="19" transform="rotate(-1.30 320.1 329.9)" fill="none" stroke="#ffff00" stroke-width="1.5"/>
<ellipse cx="319.9" cy="323.2" rx="115.5" ry="17.7" transform="rotate(-1.27 319.9 323.2)" fill="none" stroke="#ffff00" stroke-width="1.2"/>
<ellipse cx="320" cy="323" rx="106.6" ry="16.3" transform="rotate(-1.27 320 323)" fill="none" stroke="#ffff00" stroke-width="1.3"/>
<ellipse cx="320.3" cy="325.9" rx="100.1" ry="15.5" transform="rotate(-1.28 320.3 325.9)" fill="none" stroke="#ffff00" stroke-width="2.2"/>
<ellipse cx="322.3" cy="366.4" rx="72.5" ry="12.7" transform="rotate(-1.45 322.3 366.4)" fill="none" stroke="#ffff00" stroke-width="1.3"/>
<ellipse cx="321.3" cy="346.2" rx="86.1" ry="14.2" transform="rotate(-1.37 321.3 346.2)" fill="none" stroke="#ffff00" stroke-width="1.1"/>
<path d="M441.3,744.9 443.9,739.6 443.3,713.5 440.8,711.4 441,709.9 441.7,709.7 442.6,699.5 442.7,686.1 442.2,683 440.6,678.7 436.6,671.1 420.7,651.5 417.5,646.8 414.9,641.5 412.1,634.2 410.1,626.3 408.5,612.9 410.3,612.4 414.1,608 415.6,602.7 415.7,597.1 414.4,593.6 409.8,586.3 402.4,578.4 400.1,574.4 397.3,560 395.6,541.6 393.3,498.7 392.2,425.2 399.4,423.8 400.4,422.5 401.2,421 400.6,401.5 404.7,400.7 407.8,397.8 408.3,396.5 407.6,372.8 403.7,373.4 403.5,365.9 405.7,365.5 413.7,315.8 409.2,310" fill="none" stroke="#ffff00" stroke-width="1.4"/>
<path d="M237.9,333.5 242.3,339.4 246.1,345.4 249.8,351.4 253.3,357.4 256.7,363.4 260,369.3 263.3,375.2" fill="none" stroke="#ffff00" stroke-width="1.1"/>
<path d="M397.9,311.6 394.6,318.1 391.8,324.6 389.1,331.1 386.5,337.6 383.9,344.1 381.4,350.6 379,357" fill="none" stroke="#ffff00" stroke-width="1.1"/>
<path d="M383.4,333.5 380.5,339.4 378.1,345.4 375.9,351.4 373.7,357.4 371.6,363.4 369.5,369.3 367.5,375.2" fill="none" stroke="#ffff00" stroke-width="1.1"/>
<path d="M262.8,311.6 265.8,318.1 268.4,324.6 270.9,331.1 273.3,337.6 275.6,344.1 277.9,350.6 280.2,357" fill="none" stroke="#ffff00" stroke-width="1.1"/>
<path d="M276.7,345.8 269.7,310.8 259.4,308.5 264.6,342.8" fill="none" stroke="#ffff00" stroke-width="1.1"/>
<path d="M264.8,347.6 256.3,312.5 243.1,310.5 249.4,345" fill="none" stroke="#ffff00" stroke-width="1.1"/>
<path d="M395.3,347.6 402.8,312.5 419.5,310.5 414.8,345" fill="none" stroke="#ffff00" stroke-width="1.1"/>
<path d="M386.2,345.8 392.5,310.8 407,308.5 403,342.8" fill="none" stroke="#ffff00" stroke-width="1.1"/>
<path d="M244.8,367.4 233.2,332.4 213.8,334.7 222.6,370.3" fill="none" stroke="#ffff00" stroke-width="1.1"/>
<path d="M253.8,369.3 243.3,334.4 226,337.2 234,372.9" fill="none" stroke="#ffff00" stroke-width="1.1"/>
<path d="M371.4,369.3 376.3,334.4 388.6,337.2 385.5,372.9" fill="none" stroke="#ffff00" stroke-width="1.1"/>
<path d="M383.5,367.4 390,332.4 405.2,334.7 401,370.3" fill="none" stroke="#ffff00" stroke-width="1.1"/>
</g>
<g id="gumball" fill="none" stroke-linecap="round">
<path d="M330.5,560 L243,536" stroke="#ff3030" stroke-width="1.6" stroke-dasharray="0.1 4.2"/>
<path d="M330.5,560 L220,592" stroke="#22dd22" stroke-width="1.6" stroke-dasharray="0.1 4.2"/>
<path d="M330.5,560 L285,592" stroke="#d8d8d8" stroke-width="1.6" stroke-dasharray="0.1 4.2"/>
<path d="M331,566 L340,776" stroke="#2020ff" stroke-width="1.6" stroke-dasharray="0.1 4.2"/>
<path d="M270.6,543.5 C246,548 228,560 237,570 C241,576 249,580 255,581.5" stroke="#1414f0" stroke-width="2"/>
<path d="M270.6,543.5 C274,590 300,630 334.8,649.6" stroke="#18e018" stroke-width="2"/>
<path d="M255,581.5 C262,620 290,655 334.8,649.6" stroke="#f01818" stroke-width="2"/>
<path d="M330,547 L327.5,490" stroke="#1414ff" stroke-width="2.2"/>
<path d="M326.8,469.500 L321,492.500 L333,492 Z" fill="#1414ff" stroke="none"/>
<path d="M341,557.500 L385,545.500" stroke="#18e018" stroke-width="2.2"/>
<path d="M399,541.700 L381.500,540.500 L384.500,551.500 Z" fill="#18e018" stroke="none"/>
<path d="M340,563 L380,575" stroke="#f01818" stroke-width="2.2"/>
<path d="M394,579 L379.500,569.500 L376.500,580.500 Z" fill="#f01818" stroke="none"/>
<rect x="237" y="530.500" width="9.500" height="9.500" rx="1.500" stroke="#ff2020" stroke-width="2"/>
<rect x="211" y="588.500" width="9.500" height="9.500" rx="1.500" stroke="#18e018" stroke-width="2"/>
<rect x="335.300" y="776.500" width="9.500" height="9.500" rx="1.500" stroke="#2020ff" stroke-width="2"/>
<circle cx="281.700" cy="595.500" r="5.800" stroke="#e4e4e4" stroke-width="1.6"/>
<circle cx="330.600" cy="560.700" r="3.200" fill="#f4f4f4" stroke="#222" stroke-width="1.6"/>
<path d="M360,500 L376.500,505 L376.500,528 L360,523 Z M368.300,502.500 V525.500 M360,511.500 L376.500,516.500" stroke="#e03030" stroke-width="1.1"/>
<path d="M360,500 V523 M376.500,505 V528 M368.300,502.500 V525.500" stroke="#3838e8" stroke-width="1.1"/>
</g>
</g>

<!-- ===== controls over panels ===== -->
<g id="controls">
<!-- title doc icon -->
<g transform="translate(704.5,51)">
<path d="M1,0 H9.5 L14,4.5 V16.5 H1 Z" fill="#f4f4f4"/>
<path d="M9.5,0 V4.5 H14 Z" fill="#8a8a8a"/>
<path d="M1.6,2 C4,0.4 8,0.6 9.6,3 C12,4 13.6,6.6 13,9.4 L13.6,11.6 L10.4,10.4 C8.4,11.6 6.4,10 7,7.6 C5.6,8.4 3.6,7.6 3,6 C2.4,5 2,3.6 1.6,2 Z" fill="#1e1e1e"/>
<circle cx="5.2" cy="3.6" r="0.9" fill="#f4f4f4"/><circle cx="8.2" cy="5" r="0.7" fill="#e0e0e0"/>
</g>
<!-- selects -->
<rect x="1294.5" y="224" width="110" height="18.500" rx="5" fill="#5f5f5f"/>
<rect x="1388" y="226" width="14.500" height="14.500" rx="4" fill="url(#gBlue)"/>
<path d="M1392.6,231.600 L1395.200,228.900 L1397.800,231.600 M1392.6,234.800 L1395.200,237.500 L1397.800,234.800" fill="none" stroke="#fff" stroke-width="1.3" stroke-linecap="round" stroke-linejoin="round"/>
<rect x="1246" y="256.500" width="178" height="18.500" rx="5" fill="#5f5f5f"/>
<rect x="1407" y="258.500" width="14.500" height="14.500" rx="4" fill="url(#gBlue)"/>
<path d="M1411.6,264.100 L1414.200,261.400 L1416.800,264.100 M1411.6,267.300 L1414.200,270 L1416.800,267.300" fill="none" stroke="#fff" stroke-width="1.3" stroke-linecap="round" stroke-linejoin="round"/>
<!-- color swatches -->
<g stroke="#5e5e5e" stroke-width="3">
<rect x="1313.5" y="287.500" width="48" height="24" rx="3.500" fill="#d2d2d2"/>
<rect x="1313.5" y="325.500" width="48" height="24" rx="3.500" fill="#969696"/>
<rect x="1313.5" y="362" width="48" height="24" rx="3.500" fill="#ffffff"/>
<rect x="1313.5" y="398.500" width="48" height="24" rx="3.500" fill="#000000"/>
</g>
<!-- checkboxes -->
<rect x="1185" y="482" width="14" height="14" rx="3" fill="#3d3d3d"/>
<rect x="1185" y="506.500" width="14" height="14" rx="3" fill="#3d3d3d"/>
<rect x="1185" y="531" width="14" height="14" rx="3" fill="url(#gBlue)"/>
<path d="M1188.3,538.300 L1191,541.300 L1195.800,534.300" fill="none" stroke="#fff" stroke-width="1.8" stroke-linecap="round" stroke-linejoin="round"/>
<rect x="1185" y="555.500" width="14" height="14" rx="3" fill="#444444"/>
<path d="M1188.3,562.800 L1191,565.800 L1195.800,558.800" fill="none" stroke="#6a6a6a" stroke-width="1.8" stroke-linecap="round" stroke-linejoin="round"/>
<!-- divider / grip -->
<rect x="1139" y="577.500" width="378" height="4.500" fill="#363636"/>
<path d="M1142,600 V586 A4,4 0 0 1 1146,582 H1517 V600 Z" fill="#2f2f2f"/>
<rect x="1139" y="598.600" width="378" height="1.2" fill="#393939"/>
<g fill="#555555"><circle cx="1356" cy="590" r="1.3"/><circle cx="1362.800" cy="590" r="1.3"/><circle cx="1369.600" cy="590" r="1.3"/><circle cx="1376.400" cy="590" r="1.3"/></g>
<!-- object props fields -->
<rect x="1359" y="703.500" width="160" height="19" fill="#323232"/><rect x="1359" y="722" width="160" height="1.200" fill="#4a4a4a"/>
<rect x="1359" y="733" width="170" height="19" rx="5" fill="#5c5c5c"/>
<rect x="1366.500" y="735.800" width="13.500" height="13.500" fill="#000"/>
<rect x="1359" y="761" width="37.500" height="18.500" rx="2" fill="#5c5c5c"/>
<rect x="1364.500" y="766.800" width="27" height="7.400" fill="#f00000"/>
<rect x="1406" y="761" width="130" height="18.500" rx="5" fill="#5c5c5c"/>
<rect x="1359" y="789" width="170" height="19" rx="5" fill="#5c5c5c"/>
<rect x="1359" y="817.500" width="170" height="19" rx="5" fill="#5c5c5c"/>
<rect x="1359" y="846" width="160" height="22.500" fill="#323232"/><rect x="1359" y="868" width="160" height="1.200" fill="#4a4a4a"/>
<rect x="1359" y="880" width="36.500" height="18.500" rx="2" fill="#5c5c5c"/>
<path d="M1371,883 L1384,889 L1374,892 Z" fill="#e8502a"/>
<rect x="1406" y="880" width="130" height="18.500" rx="5" fill="#5c5c5c"/>
<rect x="1149" y="1014.500" width="368" height="1.200" fill="#444444"/>
<!-- status bar pieces -->
<rect x="384.700" y="1026" width="19.500" height="19" rx="2.500" fill="#000" stroke="#8c8c8c" stroke-width="1.4"/>
<g fill="#1d1d1d">
<rect x="721" y="1024" width="59.500" height="21.500" rx="3"/>
<rect x="785" y="1024" width="94" height="21.500" rx="3"/>
<rect x="882.500" y="1024" width="132.500" height="21.500" rx="3"/>
<rect x="1019" y="1024" width="173.500" height="21.500" rx="3"/>
</g>
<!-- lock -->
<g transform="translate(1027.500,1026.500)">
<path d="M2.600,6.500 V4.200 A2.700,2.700 0 0 1 8,4.200 V6.500" fill="none" stroke="#f4f4f4" stroke-width="1.5"/>
<rect x="0.300" y="6.200" width="10" height="8.300" rx="1.200" fill="#f4f4f4"/>
</g>
<!-- viewport tabs icons -->
<g fill="none" stroke="#5e5e5e" stroke-width="1.7">
<rect x="49.600" y="996" width="17.500" height="16.500" rx="1.500"/>
<path d="M58.300,996 V1012.500 M49.600,1004.200 H67.100"/>
</g>
<rect x="87.200" y="996" width="18" height="16.500" rx="1.500" fill="none" stroke="#1b5fb4" stroke-width="1.300"/>
<g fill="#5a5a5a">
<rect x="121.500" y="997" width="1.200" height="15.500"/><rect x="251.500" y="997" width="1.200" height="15.500"/><rect x="324.500" y="997" width="1.200" height="15.500"/><rect x="409.500" y="997" width="1.200" height="15.500"/><rect x="494.500" y="997" width="1.200" height="15.500"/>
</g>
<!-- sidebar: gear box -->
<path d="M0,540 H30 A4,4 0 0 1 34,544 V564 H0 Z" fill="#333333"/>
<rect x="0" y="565.500" width="34" height="22" fill="#3a3a3a"/>
</g>

<g id="toolbar"><g transform="translate(317,119)"><path d="M8,-12.2 H13 V-7.6 M-14,8 V12.6 H-9" fill="none" stroke="#f2f2f2" stroke-width="1.7"/><path d="M-11,-9 L9,-6 L9,4 L1,11 L-8,4 Z" fill="#1c1c2c" stroke="#3c3c4c" stroke-width="1.4"/><path d="M-10,-8 L8,-5 L0,0 Z" fill="#ffe000"/><path d="M-10,-8 L0,0 V3 L-9,-4 Z" fill="#fff4a8"/><path d="M0,0 L8,-5 V-2 L0,3 Z" fill="#f09000"/><path d="M-9,-4 L0,3 L8,-2 V1 L0,6.500 L-8,0 Z" fill="#f2f2f2"/><path d="M-8,0 L0,6.500 L8,1 V3 L0,9 L-7,3 Z" fill="#b8b8c0"/></g>
<g transform="translate(350,119)"><path d="M8,-12.2 H13 V-7.6 M-14,8 V12.6 H-9" fill="none" stroke="#f2f2f2" stroke-width="1.7"/><circle cx="-8" cy="-8" r="3.6" fill="none" stroke="#555" stroke-width="0.8"/><rect x="-9.3" y="-9.3" width="2.6" height="2.6" fill="#f4f4f4"/><circle cx="-1" cy="-3" r="3.6" fill="none" stroke="#555" stroke-width="0.8"/><rect x="-2.3" y="-4.3" width="2.6" height="2.6" fill="#f4f4f4"/><circle cx="6" cy="-4" r="3.6" fill="none" stroke="#555" stroke-width="0.8"/><rect x="4.7" y="-5.3" width="2.6" height="2.6" fill="#f4f4f4"/><circle cx="-7" cy="0" r="3.6" fill="none" stroke="#555" stroke-width="0.8"/><rect x="-8.3" y="-1.3" width="2.6" height="2.6" fill="#f4f4f4"/><circle cx="4" cy="6" r="3.6" fill="none" stroke="#555" stroke-width="0.8"/><rect x="2.7" y="4.7" width="2.6" height="2.6" fill="#f4f4f4"/></g>
<g transform="translate(383,119)"><path d="M8,-12.2 H13 V-7.6 M-14,8 V12.6 H-9" fill="none" stroke="#f2f2f2" stroke-width="1.7"/><rect x="-0.3999999999999999" y="-11.4" width="2.8" height="2.8" fill="#f4f4f4"/><rect x="5.6" y="-11.4" width="2.8" height="2.8" fill="#f4f4f4"/><rect x="1.6" y="-6.4" width="2.8" height="2.8" fill="#f4f4f4"/><rect x="-5.4" y="-3.4" width="2.8" height="2.8" fill="#f4f4f4"/><rect x="-0.3999999999999999" y="-1.4" width="2.8" height="2.8" fill="#f4f4f4"/><rect x="5.6" y="-5.4" width="2.8" height="2.8" fill="#f4f4f4"/><rect x="-10.4" y="0.6000000000000001" width="2.8" height="2.8" fill="#f4f4f4"/><rect x="-4.4" y="2.6" width="2.8" height="2.8" fill="#f4f4f4"/><rect x="1.6" y="1.6" width="2.8" height="2.8" fill="#f4f4f4"/><rect x="-6.4" y="5.6" width="2.8" height="2.8" fill="#f4f4f4"/><rect x="6.6" y="4.6" width="2.8" height="2.8" fill="#f4f4f4"/><rect x="3.6" y="0.6000000000000001" width="2.8" height="2.8" fill="#f4f4f4"/></g>
<g transform="translate(415.5,119)"><path d="M8,-12.2 H13 V-7.6 M-14,8 V12.6 H-9" fill="none" stroke="#f2f2f2" stroke-width="1.7"/><path d="M-11,-5 L-4,-9 L3,-6 L3,3 L-4,7 L-11,3 Z" fill="#ffe000" stroke="#1c1c2c" stroke-width="1"/><path d="M-4,-2 L3,-6 L3,3 L-4,7 Z" fill="#f09000"/><path d="M-11,-5 L-4,-2 L3,-6 L-4,-9 Z" fill="#fff27a"/><path d="M6,-6 L11,8 Q6,11 1,8 Z" fill="#ffe000" stroke="#1c1c2c" stroke-width="1"/><path d="M6,-6 L11,8 Q8,10 6,10 Z" fill="#f09000"/></g>
<g transform="translate(449,119)"><path d="M8,-12.2 H13 V-7.6 M-14,8 V12.6 H-9" fill="none" stroke="#f2f2f2" stroke-width="1.7"/><path d="M-6.5,-6 L-1.0,-3 V3.5 L-6.5,6.5 L-12.0,3.5 V-3 Z" fill="#ffe000" stroke="#1c1c2c" stroke-width="1.8"/><path d="M-6.5,0.5 L-1.0,-3 V3.5 L-6.5,6.5 Z" fill="#f09000"/><path d="M7,-6 L12.5,-3 V3.5 L7,6.5 L1.5,3.5 V-3 Z" fill="#ffe000" stroke="#1c1c2c" stroke-width="1.8"/><path d="M7,0.5 L12.5,-3 V3.5 L7,6.5 Z" fill="#f09000"/></g>
<g transform="translate(482,119)"><path d="M8,-12.2 H13 V-7.6 M-14,8 V12.6 H-9" fill="none" stroke="#f2f2f2" stroke-width="1.7"/><defs><radialGradient id="glow"><stop offset="0" stop-color="#fff"/><stop offset="0.5" stop-color="#ddd" stop-opacity=".8"/><stop offset="1" stop-color="#888" stop-opacity="0"/></radialGradient></defs><circle cx="5" cy="6" r="10.500" fill="url(#glow)"/><path d="M-11,-11 L3,-6 L-5,3 Z" fill="#ffe000" stroke="#1c1c2c" stroke-width="0.8"/><path d="M-5,2 L2,-6 L4,-4 L-3,4 Z" fill="#eee"/></g>
<g transform="translate(514,119)"><path d="M8,-12.2 H13 V-7.6 M-14,8 V12.6 H-9" fill="none" stroke="#f2f2f2" stroke-width="1.7"/><defs><pattern id="hat" width="3" height="3" patternUnits="userSpaceOnUse" patternTransform="rotate(-45)"><rect width="3" height="3" fill="#ffe000"/><rect width="3" height="1.1" fill="#5a4a00"/></pattern></defs><rect x="-12" y="-12" width="14" height="14" fill="url(#hat)" stroke="#e8b800" stroke-width="0.8"/><circle cx="2" cy="3" r="9" fill="url(#hat)" stroke="#e8b800" stroke-width="0.8"/></g>
<g transform="translate(548,119)"><path d="M8,-12.2 H13 V-7.6 M-14,8 V12.6 H-9" fill="none" stroke="#f2f2f2" stroke-width="1.7"/><path d="M16.5,7 V13.2 H10.3 Z" fill="#e8e8e8"/><path d="M-9,2 L-1,9 L9,-1 L1,-10" fill="none" stroke="#f4f4f4" stroke-width="2"/><g fill="#fff" stroke="#4a90ff" stroke-width="0.8"><rect x="-11" y="0" width="4" height="4"/><rect x="-1" y="-12" width="4" height="4"/></g><rect x="7.500" y="-2.500" width="3.500" height="3.500" fill="#fff"/><rect x="-2.500" y="7.500" width="3.500" height="3.500" fill="#fff"/></g>
<g transform="translate(582,119)"><path d="M8,-12.2 H13 V-7.6 M-14,8 V12.6 H-9" fill="none" stroke="#f2f2f2" stroke-width="1.7"/><path d="M-11,-10 H3 M-11,11 H3 M-9,-8 V9" stroke="#e8b800" stroke-width="2" fill="none"/><path d="M-11,-12 h4 v4 h-4z M-11,9 h4 v4 h-4z M1,-12 h4 v4 h-4z M1,9 h4 v4 h-4z" fill="#e8b800"/><path d="M-5,4 C-4,-4 4,-6 11,-5 L12,0 C8,0 7,2 5,4 C2,6 -2,4 -5,4 Z" fill="#ffe000"/></g>
<g transform="translate(613.5,119)"><path d="M8,-12.2 H13 V-7.6 M-14,8 V12.6 H-9" fill="none" stroke="#f2f2f2" stroke-width="1.7"/><path d="M1,-12 C8,-12 9,-4 11,2 C13,9 5,12 0,10 C-6,13 -13,9 -11,2 C-9,-4 -6,-12 1,-12 Z" fill="#151515" stroke="#3c3c3c" stroke-width="1"/><circle cx="1" cy="-5" r="4.600" fill="#ffe000"/><circle cx="-4" cy="3" r="4.600" fill="#fff6a8"/><circle cx="5" cy="4" r="4.400" fill="#b85a10"/></g>
<g transform="translate(647,119)"><path d="M8,-12.2 H13 V-7.6 M-14,8 V12.6 H-9" fill="none" stroke="#f2f2f2" stroke-width="1.7"/><defs><radialGradient id="bsp" cx="0.35" cy="0.3" r="0.7"><stop offset="0" stop-color="#6a6a6a"/><stop offset="0.35" stop-color="#1a1a1a"/><stop offset="1" stop-color="#000"/></radialGradient></defs><circle cx="0" cy="0" r="10.500" fill="url(#bsp)"/></g>
<g transform="translate(679.5,119)"><path d="M8,-12.2 H13 V-7.6 M-14,8 V12.6 H-9" fill="none" stroke="#f2f2f2" stroke-width="1.7"/><path d="M16.5,7 V13.2 H10.3 Z" fill="#e8e8e8"/><path d="M-11,-4 L-1,-1 L9,-8 V4 L-1,10 L-11,6 Z" fill="#ffe000" stroke="#1c1c2c" stroke-width="1"/><path d="M-1,-1 L9,-8 V4 L-1,10 Z" fill="#f09000"/></g>
<g transform="translate(711.75,119)"><path d="M8,-12.2 H13 V-7.6 M-14,8 V12.6 H-9" fill="none" stroke="#f2f2f2" stroke-width="1.7"/><defs><linearGradient id="bcy" x1="0" y1="0" x2="0" y2="1"><stop offset="0" stop-color="#9ab0ff"/><stop offset="0.3" stop-color="#2a48e0"/><stop offset="1" stop-color="#0a1a80"/></linearGradient></defs><path d="M-7,-11 H7 M-7,11 H7 M-8,-11 v4 M8,-11 v4 M-8,11 v-4 M8,11 v-4" stroke="#d8d8d8" stroke-width="1.6" fill="none"/><rect x="-10" y="-6" width="17" height="12" rx="4" fill="url(#bcy)"/><ellipse cx="-8" cy="0" rx="3" ry="6" fill="#dfe6ff"/><rect x="5" y="-7" width="7" height="13" fill="#9a9a9a" opacity="0.8"/></g>
<g transform="translate(745,119)"><path d="M8,-12.2 H13 V-7.6 M-14,8 V12.6 H-9" fill="none" stroke="#f2f2f2" stroke-width="1.7"/><rect x="-9.500" y="-10.500" width="19" height="21" rx="1.500" fill="#1a1a1a" stroke="#f4f4f4" stroke-width="2.4"/><rect x="-4.500" y="-6.500" width="9" height="2" fill="#f4f4f4"/><rect x="-4.500" y="5" width="9" height="2" fill="#f4f4f4"/><rect x="-5" y="-3" width="9" height="6.500" rx="2" fill="#ffe000"/><rect x="3" y="-2" width="3" height="4.500" fill="#e8e8e8"/></g>
<g transform="translate(777.5,119)"><path d="M8,-12.2 H13 V-7.6 M-14,8 V12.6 H-9" fill="none" stroke="#f2f2f2" stroke-width="1.7"/><path d="M16.5,7 V13.2 H10.3 Z" fill="#e8e8e8"/><path d="M-12,6 L0,-9 L12,-5 L2,10 Z" fill="#ffe000" stroke="#1c1c2c" stroke-width="1"/></g>
<g transform="translate(810.75,119)"><path d="M8,-12.2 H13 V-7.6 M-14,8 V12.6 H-9" fill="none" stroke="#f2f2f2" stroke-width="1.7"/><path d="M16.5,7 V13.2 H10.3 Z" fill="#e8e8e8"/><path d="M-8,-11 L8,-5 L7,10 L-7,4 Z" fill="#ffe000" stroke="#1c1c2c" stroke-width="1"/><path d="M-2.700,-9 L-2.300,6 M2.700,-7 L2.300,8 M-7.700,-6 L7.700,0 M-7.300,-1 L7.300,5" stroke="#8a6a00" stroke-width="0.9" fill="none"/></g>
<g transform="translate(843.75,119)"><path d="M8,-12.2 H13 V-7.6 M-14,8 V12.6 H-9" fill="none" stroke="#f2f2f2" stroke-width="1.7"/><path d="M16.5,7 V13.2 H10.3 Z" fill="#e8e8e8"/><path d="M-9,-5 Q-9,-9 -4,-10 L5,-9 Q10,-8 10,-3 V5 Q10,9 5,10 L-3,11 Q-9,10 -9,5 Z" fill="#ffe000" stroke="#1c1c2c" stroke-width="1"/><path d="M3,-2 Q10,-4 10,-3 V5 Q10,9 5,10 L3,10 Z" fill="#f09000"/><path d="M-9,-1 Q0,2 10,0 M-3,-9 Q-4,2 -3,11 M-9,-5 Q0,-2 10,-4 M3,-9 V10" stroke="#c8c8a0" stroke-width="0.8" fill="none"/></g>
<g transform="translate(877,119)"><path d="M8,-12.2 H13 V-7.6 M-14,8 V12.6 H-9" fill="none" stroke="#f2f2f2" stroke-width="1.7"/><path d="M16.5,7 V13.2 H10.3 Z" fill="#e8e8e8"/><path d="M0,0 C2,-3 7,-1 5,4 C3,9 -6,8 -7,1 C-8,-7 2,-11 8,-6 M0,0 C-3,2 -3,-4 1,-5 C6,-6 9,0 6,6 M8,-6 C11,-3 11,3 9,6" fill="none" stroke="#f4f4f4" stroke-width="1.7" stroke-linecap="round"/></g>
<g transform="translate(909,119)"><path d="M8,-12.2 H13 V-7.6 M-14,8 V12.6 H-9" fill="none" stroke="#f2f2f2" stroke-width="1.7"/><path d="M16.5,7 V13.2 H10.3 Z" fill="#e8e8e8"/><circle cx="0" cy="-3" r="8" fill="#1a1a1a" stroke="#f4f4f4" stroke-width="1.8"/><circle cx="-2.500" cy="-4" r="1.600" fill="#dfe8ff"/><circle cx="2.500" cy="-6" r="1.600" fill="#dfe8ff"/><circle cx="2" cy="-1" r="1.600" fill="#dfe8ff"/><path d="M-7,6 C-4,12 6,12 9,7 C10,5 8,3 6,4" fill="none" stroke="#f4f4f4" stroke-width="1.7" stroke-linecap="round"/></g>
<g transform="translate(942.5,119)"><path d="M8,-12.2 H13 V-7.6 M-14,8 V12.6 H-9" fill="none" stroke="#f2f2f2" stroke-width="1.7"/><path d="M16.5,7 V13.2 H10.3 Z" fill="#e8e8e8"/><g fill="none" stroke="#f4f4f4" stroke-width="1.8"><ellipse cx="-6.500" cy="-6" rx="4.200" ry="2.800" transform="rotate(25 -6.500 -6)"/><ellipse cx="0" cy="0" rx="4.200" ry="2.800" transform="rotate(55 0 0)"/><ellipse cx="6" cy="5" rx="4.500" ry="2.800" transform="rotate(15 6 5)"/></g></g>
<g transform="translate(975.5,119)"><path d="M8,-12.2 H13 V-7.6 M-14,8 V12.6 H-9" fill="none" stroke="#f2f2f2" stroke-width="1.7"/><path d="M16.5,7 V13.2 H10.3 Z" fill="#e8e8e8"/><path d="M0,-10 L11,3 L1,10 L-11,4 Z" fill="#f0c040" stroke="#1c1c2c" stroke-width="1"/><path d="M0,-10 L11,3 L1,10 Z" fill="#d89a20"/><path d="M0,-10 L1,10 L-11,4 Z" fill="#ffd860"/></g>
<rect x="994.500" y="103" width="1.300" height="31" fill="#555"/>
<g transform="translate(1014,119)"><path d="M8,-12.2 H13 V-7.6 M-14,8 V12.6 H-9" fill="none" stroke="#f2f2f2" stroke-width="1.7"/><rect x="-11" y="-7.500" width="22" height="13.500" fill="none" stroke="#f4f4f4" stroke-width="2" stroke-dasharray="2.2 1.4"/></g>
<g transform="translate(1047.5,119)"><path d="M8,-12.2 H13 V-7.6 M-14,8 V12.6 H-9" fill="none" stroke="#f2f2f2" stroke-width="1.7"/><defs><radialGradient id="gsp" cx="0.4" cy="0.35" r="0.7"><stop offset="0" stop-color="#d0d0d0"/><stop offset="0.6" stop-color="#8a8a8a"/><stop offset="1" stop-color="#4a4a4a"/></radialGradient></defs><circle cx="0" cy="0" r="10" fill="url(#gsp)" stroke="#1a1a1a" stroke-width="1"/><path d="M0,-10 V10 M-10,0 H10" stroke="#aaa" stroke-width="0.6" opacity="0.6"/></g>
<g transform="translate(1080.75,119)"><path d="M8,-12.2 H13 V-7.6 M-14,8 V12.6 H-9" fill="none" stroke="#f2f2f2" stroke-width="1.7"/><path d="M-9,-4 L0,-9 L9,-5 V5 L0,10 L-9,5 Z" fill="#d8d8d8" stroke="#1a1a1a" stroke-width="1"/><path d="M0,0 L9,-5 V5 L0,10 Z" fill="#8a8a8a"/><path d="M-9,-4 L0,0 L9,-5 L0,-9 Z" fill="#f4f4f4"/><rect x="-6" y="0" width="3" height="4" fill="#777"/></g>
<g transform="translate(1113,119)"><path d="M8,-12.2 H13 V-7.6 M-14,8 V12.6 H-9" fill="none" stroke="#f2f2f2" stroke-width="1.7"/><circle cx="0" cy="0" r="11" fill="#1a1a1a" stroke="#484848" stroke-width="1"/><circle cx="-4" cy="-4" r="3.300" fill="#f09000"/><rect x="1.500" y="-5" width="5.500" height="5.500" fill="#ffb000"/><path d="M-1,2 L3.500,9 H-5.500 Z" fill="#c86a10"/></g>
<g transform="translate(1146,119)"><path d="M8,-12.2 H13 V-7.6 M-14,8 V12.6 H-9" fill="none" stroke="#f2f2f2" stroke-width="1.7"/><path d="M-9,2 C-11,-3 -3,-3 1,-5 C4,-7 6,-12 10,-9 C13,-6 11,8 8,10 C3,12 -7,11 -9,2 Z" fill="#1a1a1a" stroke="#f4f4f4" stroke-width="1.6"/><rect x="-10" y="-12" width="5.500" height="5.500" fill="#e0e0e0" stroke="#888" stroke-width="0.6"/><ellipse cx="-4.500" cy="4" rx="3.300" ry="2.600" fill="#ffe000"/><path d="M6,-4 L9.500,7 Q6,9 2.500,7 Z" fill="#ffb000"/></g>
<g transform="translate(1179,119)"><path d="M8,-12.2 H13 V-7.6 M-14,8 V12.6 H-9" fill="none" stroke="#f2f2f2" stroke-width="1.7"/><path d="M10,-11 L12,-9 L2,3 L-1,0 Z" fill="#ffb800" stroke="#1c1c2c" stroke-width="0.8"/><path d="M-1,0 L2,3 L-1,6 L-4,3 Z" fill="#333"/><path d="M-4,3 L-1,6 L-7,12 L-11,8 Z" fill="#f2f2f2" stroke="#555" stroke-width="0.6"/><path d="M-7,6 L-4,9 L-7,12 L-11,8 Z" fill="#f07040"/></g>
<g transform="translate(1212.5,119)"><path d="M8,-12.2 H13 V-7.6 M-14,8 V12.6 H-9" fill="none" stroke="#f2f2f2" stroke-width="1.7"/><circle cx="3" cy="-3" r="7" fill="#6a6a6a" stroke="#f4f4f4" stroke-width="2.2"/><circle cx="1.500" cy="-5" r="2.500" fill="#999"/><path d="M-2.500,2.500 L-10,10" stroke="#f4f4f4" stroke-width="2.600" stroke-linecap="round"/></g>
<g transform="translate(1245,119)"><path d="M8,-12.2 H13 V-7.6 M-14,8 V12.6 H-9" fill="none" stroke="#f2f2f2" stroke-width="1.7"/><path d="M-11,-10 L-9,-12 L-7,-10 V11 H-11 Z" fill="#ffb800" stroke="#a06000" stroke-width="0.5"/><path d="M-5,-10 L-3,-12 L-1,-10 V11 H-5 Z" fill="#ffb800" stroke="#a06000" stroke-width="0.5"/><path d="M1,-10 L3,-12 L5,-10 V11 H1 Z" fill="#ffb800" stroke="#a06000" stroke-width="0.5"/><path d="M7,-10 L9,-12 L11,-10 V11 H7 Z" fill="#ffb800" stroke="#a06000" stroke-width="0.5"/><rect x="-12" y="7" width="24" height="1.500" fill="#c88000"/></g>
<g transform="translate(1277.5,119)"><path d="M8,-12.2 H13 V-7.6 M-14,8 V12.6 H-9" fill="none" stroke="#f2f2f2" stroke-width="1.7"/><path d="M-9,-5 L1,-10 L10,-6 V5 L0,10 L-9,6 Z" fill="#ffe000" stroke="#1c1c2c" stroke-width="1.2"/><path d="M0,-1 L10,-6 V5 L0,10 Z" fill="#e89a00"/><path d="M-9,-5 L0,-1 L10,-6 L1,-10 Z" fill="#fff6a0"/><path d="M-6.500,0.500 V5 Q-6.500,7 -4.500,7.600 Q-2.500,8 -2.500,6 V2" fill="none" stroke="#3a3000" stroke-width="1.400"/></g>
<g transform="translate(1310,119)"><path d="M8,-12.2 H13 V-7.6 M-14,8 V12.6 H-9" fill="none" stroke="#f2f2f2" stroke-width="1.7"/><path d="M-11,-3 L2,-10 L12,-5 V5 L-1,11 L-11,6 Z" fill="none" stroke="#f05010" stroke-width="2.200" stroke-linejoin="round"/><path d="M-9.500,-2.500 L2,-8.500 L10.500,-4.500 V4 L-1,9.500 L-9.500,5 Z" fill="#b8b8c0" stroke="#ffe000" stroke-width="1.800" stroke-linejoin="round"/><path d="M-9.500,-2.500 L-1,1.500 L10.500,-4.500 L2,-8.500 Z" fill="#e8e8ee" stroke="#e04040" stroke-width="0.6"/><path d="M-1,1.500 V9.500" stroke="#e04040" stroke-width="0.6"/></g>
<g transform="translate(1342.5,119)"><path d="M8,-12.2 H13 V-7.6 M-14,8 V12.6 H-9" fill="none" stroke="#f2f2f2" stroke-width="1.7"/><path d="M-4,-11 C1,-12 4,-7 2,-3 L11,7 L9,10 L6,9 L5,7 L3,6 L-2,1 C-8,2 -11,-3 -9,-7 C-8,-10 -6,-11 -4,-11 Z" fill="#ffc400" stroke="#1c1c2c" stroke-width="1"/><circle cx="-5" cy="-6" r="1.800" fill="#2a2000"/></g>
<g transform="translate(1376,119)"><path d="M8,-12.2 H13 V-7.6 M-14,8 V12.6 H-9" fill="none" stroke="#f2f2f2" stroke-width="1.7"/><path d="M-4,-3 C-8,-8 -2,-13 1,-9 C3,-6 -1,-5 -2,-2" fill="none" stroke="#999" stroke-width="1.500"/><path d="M-5,1 L2,-4 L10,5 L3,11 Z" fill="#ffc400" stroke="#1c1c2c" stroke-width="1.200" stroke-linejoin="round"/></g>
<g transform="translate(1408,119)"><path d="M8,-12.2 H13 V-7.6 M-14,8 V12.6 H-9" fill="none" stroke="#f2f2f2" stroke-width="1.7"/><path d="M-11,-5 C-10,-9 -5,-9 -4,-6 L-7,-4 L-5,-2 L-2,-4 C0,-1 -2,2 -5,1 L3,10 L0,12 L-8,3 C-11,3 -12,-2 -11,-5 Z" fill="#ffc400" stroke="#1c1c2c" stroke-width="1"/><path d="M3,-6 C1,-11 7,-13 8,-9" fill="none" stroke="#999" stroke-width="1.300"/><path d="M1,-2 L7,-7 L13,0 L7,5 Z" fill="#ffc400" stroke="#1c1c2c" stroke-width="1.200"/></g>
<g transform="translate(1443,119)"><path d="M8,-12.2 H13 V-7.6 M-14,8 V12.6 H-9" fill="none" stroke="#f2f2f2" stroke-width="1.7"/><path d="M-8,-6 Q-8,-9 -4,-10 L5,-9 Q9,-8 9,-4 V5 Q9,9 5,10 L-3,11 Q-8,10 -8,6 Z" fill="#ffe000" stroke="#2a2a3a" stroke-width="1.400"/><path d="M3,-3 Q9,-5 9,-4 V5 Q9,9 5,10 L3,10 Z" fill="#e83a10"/><path d="M-8,-6 Q0,-3 9,-5 L5,-9 L-4,-10 Q-8,-9 -8,-6 Z" fill="#f06020"/><rect x="-4" y="-2" width="5" height="5" fill="#ffe860"/><rect x="-4" y="4" width="5" height="4" fill="#d8a000"/><rect x="4.500" y="0" width="3" height="6" fill="#80c020"/></g></g>
<g id="sidebar">
<path d="M26,264.5 V271 H19.5 Z" fill="#f0f0f0"/><path d="M26,297.5 V304 H19.5 Z" fill="#f0f0f0"/><path d="M26,330.5 V337 H19.5 Z" fill="#f0f0f0"/><path d="M26,363.5 V370 H19.5 Z" fill="#f0f0f0"/><path d="M26,430.5 V437 H19.5 Z" fill="#f0f0f0"/><path d="M26,463.5 V470 H19.5 Z" fill="#f0f0f0"/>
<path d="M8,256 L16,262" stroke="#ddd" stroke-width="2"/>
<path d="M0,279 L10,275 L18,280 V290 L10,295 L0,291" fill="#1a1a1a" stroke="#e8e8e8" stroke-width="2.2"/><rect x="6" y="283.500" width="3.500" height="3.500" fill="#fff" stroke="#3a80ff" stroke-width="0.8"/><rect x="15" y="283.500" width="3.500" height="3.500" fill="#fff" stroke="#3a80ff" stroke-width="0.8"/><path d="M9,285.300 H15" stroke="#ddd" stroke-width="1.2"/>
<defs><linearGradient id="pipe" x1="0" y1="0" x2="1" y2="1"><stop offset="0" stop-color="#e8ecff"/><stop offset="0.5" stop-color="#4058e0"/><stop offset="1" stop-color="#1a2890"/></linearGradient></defs><path d="M0,311 C10,308 18,314 19,324 L13,330 C12,323 8,319 0,320 Z" fill="url(#pipe)" stroke="#1a1a2a" stroke-width="0.8"/><path d="M19,324 L13,330 L11,326 L16,321 Z" fill="#f0f0f0"/>
<ellipse cx="6" cy="345" rx="9" ry="3.500" fill="#2a2a2a" stroke="#555" stroke-width="1.200"/><path d="M-4,350 V359 C0,364 12,364 17,359 V350 C12,355 0,355 -4,350 Z" fill="#3a5af0" stroke="#1a1a2a" stroke-width="0.8"/><ellipse cx="6" cy="357" rx="5" ry="2.200" fill="#f4f4ff"/>
<path d="M-2,396 L4,386 L7,390 L15,377 L13,388 L22,384 L14,392 L19,396 L8,396 L2,401 Z" fill="#ff8a00"/><path d="M0,397 L7,391 L12,392 L7,396 Z" fill="#ffd040"/>
<path d="M8,407 C16,406 20,414 19,420 C18,428 6,430 0,426 L0,412 C2,409 5,407 8,407 Z" fill="#141414" stroke="#3a3a3a" stroke-width="1"/><circle cx="9" cy="413" r="4.400" fill="#4a6af8"/><circle cx="4" cy="421" r="4.400" fill="#f8f8f8"/><circle cx="13" cy="421" r="4.200" fill="#1a2a90"/>
<path d="M0,443 C10,441 17,448 18,460" fill="none" stroke="#e8e8e8" stroke-width="3"/><rect x="2" y="439" width="3.500" height="3.500" fill="#fff" stroke="#3a80ff" stroke-width="0.7"/><rect x="15" y="450" width="3.500" height="3.500" fill="#fff" stroke="#3a80ff" stroke-width="0.7"/>
<path d="M0,481 L3,485 L0,489" fill="none" stroke="#888" stroke-width="1.200"/>
<path d="M27.6,550.8 27.7,552.3 25.8,552.9 25.5,553.9 26.7,555.4 25.7,556.6 23.9,555.7 23.0,556.1 22.7,558.1 21.2,558.2 20.6,556.3 19.6,556.0 18.1,557.2 16.9,556.2 17.8,554.4 17.4,553.5 15.4,553.2 15.3,551.7 17.2,551.1 17.5,550.1 16.3,548.6 17.3,547.4 19.1,548.3 20.0,547.9 20.3,545.9 21.8,545.8 22.4,547.7 23.4,548.0 24.9,546.8 26.1,547.8 25.2,549.6 25.6,550.5 Z" fill="#e4e4e4"/><circle cx="21.500" cy="552" r="2.200" fill="#333"/>
<rect x="0" y="797" width="1.500" height="5" fill="#888"/><rect x="0" y="837" width="2" height="4" fill="#aaa"/>
</g>
<g id="panelicons">
<rect x="1194.500" y="602.500" width="28" height="27" fill="#1e1e1e"/>
<path d="M1205.8,605.9 A10.5,10.5 0 0 1 1211.4,605.9 L1210.2,610.2 A6,6 0 0 0 1206.9,610.2 Z" fill="#ff0000"/>
<path d="M1211.2,605.9 A10.5,10.5 0 0 1 1216.1,608.7 L1212.8,611.8 A6,6 0 0 0 1210.1,610.2 Z" fill="#ff8000"/>
<path d="M1215.9,608.6 A10.5,10.5 0 0 1 1218.7,613.5 L1214.3,614.5 A6,6 0 0 0 1212.7,611.8 Z" fill="#ffff00"/>
<path d="M1218.6,613.3 A10.5,10.5 0 0 1 1218.6,618.9 L1214.3,617.7 A6,6 0 0 0 1214.3,614.4 Z" fill="#80ff00"/>
<path d="M1218.6,618.7 A10.5,10.5 0 0 1 1215.8,623.6 L1212.7,620.3 A6,6 0 0 0 1214.3,617.6 Z" fill="#00ff00"/>
<path d="M1215.9,623.4 A10.5,10.5 0 0 1 1211.0,626.2 L1210.0,621.8 A6,6 0 0 0 1212.7,620.2 Z" fill="#00ff80"/>
<path d="M1211.2,626.1 A10.5,10.5 0 0 1 1205.6,626.1 L1206.8,621.8 A6,6 0 0 0 1210.1,621.8 Z" fill="#00ffff"/>
<path d="M1205.8,626.1 A10.5,10.5 0 0 1 1200.9,623.3 L1204.2,620.2 A6,6 0 0 0 1206.9,621.8 Z" fill="#0080ff"/>
<path d="M1201.1,623.4 A10.5,10.5 0 0 1 1198.3,618.5 L1202.7,617.5 A6,6 0 0 0 1204.3,620.2 Z" fill="#0000ff"/>
<path d="M1198.4,618.7 A10.5,10.5 0 0 1 1198.4,613.1 L1202.7,614.3 A6,6 0 0 0 1202.7,617.6 Z" fill="#8000ff"/>
<path d="M1198.4,613.3 A10.5,10.5 0 0 1 1201.2,608.4 L1204.3,611.7 A6,6 0 0 0 1202.7,614.4 Z" fill="#ff00ff"/>
<path d="M1201.1,608.6 A10.5,10.5 0 0 1 1206.0,605.8 L1207.0,610.2 A6,6 0 0 0 1204.3,611.8 Z" fill="#ff0080"/>
<g transform="translate(1243.500,616) rotate(-40)"><rect x="-11" y="-3.500" width="9" height="7" fill="#f0f0f0" stroke="#888" stroke-width="0.5"/><rect x="-2" y="-4" width="9" height="8" fill="#e82020"/><path d="M7,-3 L11,-1.500 V1.500 L7,3 Z" fill="#f4f4f4"/><rect x="-13" y="-4" width="2.500" height="8" fill="#ccc"/></g>
<g transform="translate(1278,616) rotate(-35)"><rect x="-9" y="-6.500" width="18" height="13" rx="3" fill="#f2f2f2" stroke="#555" stroke-width="0.6"/><g fill="#e03020"><rect x="-6" y="-6" width="4" height="4"/><rect x="2" y="-6" width="4" height="4"/><rect x="-2" y="-2" width="4" height="4"/><rect x="-9" y="-2" width="3" height="4"/><rect x="6" y="-2" width="3" height="4"/><rect x="-6" y="2" width="4" height="4"/><rect x="2" y="2" width="4" height="4"/></g></g>
<path d="M1301.500,604 H1325 V622 L1319,628.500 H1301.500 Z" fill="#30d838" stroke="#0a7a10" stroke-width="0.8"/><path d="M1325,622 L1319,628.500 V622 Z" fill="#f4f4f4"/><path d="M1303,622 L1321,606" stroke="#90f090" stroke-width="3" opacity="0.7"/>
<defs><radialGradient id="bb" cx="0.4" cy="0.35" r="0.7"><stop offset="0" stop-color="#e89050"/><stop offset="0.6" stop-color="#a85018"/><stop offset="1" stop-color="#4a2008"/></radialGradient></defs><circle cx="1349" cy="616" r="11.500" fill="url(#bb)"/><path d="M1341,612 Q1349,608 1357,612 M1340,618 Q1349,614 1358,619 M1343,623 Q1349,620 1355,624" stroke="#5a2a08" stroke-width="1.200" fill="none" opacity="0.7"/>
<rect x="1372.500" y="603.500" width="24" height="25" rx="2" fill="#d81818" stroke="#7a0808" stroke-width="0.8"/><rect x="1372.500" y="610" width="24" height="2" fill="#8a0a0a"/><ellipse cx="1383" cy="608" rx="5" ry="1.800" fill="#3a0505"/><rect x="1392" y="604" width="2" height="24" fill="#f08080" opacity="0.7"/>
<path d="M1408,609 L1420,603 L1431,607 V621 L1419,628 L1408,623 Z" fill="#e8ecff" stroke="#2a3a9a" stroke-width="1.200"/><path d="M1411,612 L1419,615 V625 L1411,621 Z" fill="#2a50e0"/><path d="M1413,619 L1417,615 V621 Z" fill="#fff"/><path d="M1419,615 L1431,607 V621 L1419,628 Z" fill="#a8b4e8"/><path d="M1422,606 L1428,612 M1424,604 L1431,611" stroke="#8a8a9a" stroke-width="1.500"/>
<path d="M1444,611 L1455,604 L1466,610 V621 L1455,628 L1444,622 Z" fill="#20d0d8" stroke="#0a6a70" stroke-width="0.8"/><path d="M1444,611 L1455,617 L1466,610 L1455,604 Z" fill="#80f0f0"/><path d="M1455,617 V628 L1466,621 V610 Z" fill="#10a0a8"/><path d="M1448,608 Q1455,612 1462,607" stroke="#c0ffff" stroke-width="1.500" fill="none"/>
<rect x="1476" y="603" width="14" height="12" fill="#222"/><defs><linearGradient id="cy9" x1="0" x2="1" y1="0" y2="0"><stop offset="0" stop-color="#1a2ac0"/><stop offset="0.45" stop-color="#5a7af8"/><stop offset="1" stop-color="#1020a0"/></linearGradient></defs><path d="M1485.500,608 V625 Q1494,630 1502.500,625 V608 Z" fill="url(#cy9)"/><ellipse cx="1494" cy="608" rx="8.500" ry="3.500" fill="#e4e8ff" stroke="#8a9ae0" stroke-width="0.6"/>
</g>
<g id="labels" opacity="0.999">
<text x="726.0" y="66.0" font-size="14.5" fill="#b9b9b9" font-weight="bold" textLength="86.0" lengthAdjust="spacing">Rook2.3dm</text>
<text x="311.8" y="95.5" font-size="13.5" fill="#5f5f5f" stroke="#5f5f5f" stroke-width="0.35" textLength="100.0" lengthAdjust="spacing">Viewport Layout</text>
<text x="435.5" y="95.5" font-size="13.5" fill="#5f5f5f" stroke="#5f5f5f" stroke-width="0.35" textLength="51.5" lengthAdjust="spacing">Visibility</text>
<text x="511.8" y="95.5" font-size="13.5" fill="#5f5f5f" stroke="#5f5f5f" stroke-width="0.35" textLength="61.2" lengthAdjust="spacing">Transform</text>
<text x="596.8" y="95.5" font-size="13.5" fill="#5f5f5f" stroke="#5f5f5f" stroke-width="0.35" textLength="72.2" lengthAdjust="spacing">Curve Tools</text>
<text x="693.8" y="95.5" font-size="13.5" fill="#5f5f5f" stroke="#5f5f5f" stroke-width="0.35" textLength="83.2" lengthAdjust="spacing">Surface Tools</text>
<text x="801.8" y="95.5" font-size="13.5" fill="#5f5f5f" stroke="#5f5f5f" stroke-width="0.35" textLength="65.8" lengthAdjust="spacing">Solid Tools</text>
<text x="891.8" y="95.5" font-size="13.5" fill="#5f5f5f" stroke="#5f5f5f" stroke-width="0.35" textLength="69.0" lengthAdjust="spacing">SubD Tools</text>
<text x="985.0" y="95.5" font-size="13.5" fill="#5f5f5f" stroke="#5f5f5f" stroke-width="0.35" textLength="69.5" lengthAdjust="spacing">Mesh Tools</text>
<text x="1078.0" y="95.5" font-size="13.5" fill="#5f5f5f" stroke="#5f5f5f" stroke-width="0.35" textLength="80.0" lengthAdjust="spacing">Render Tools</text>
<text x="1182.0" y="95.5" font-size="13.5" fill="#5f5f5f" stroke="#5f5f5f" stroke-width="0.35" textLength="50.0" lengthAdjust="spacing">Drafting</text>
<text x="1255.8" y="95.5" font-size="13.5" fill="#5f5f5f" stroke="#5f5f5f" stroke-width="0.35" textLength="62.2" lengthAdjust="spacing">New in V8</text>
<text x="1144.5" y="154.0" font-size="16" fill="#5a5a5a" stroke="#5a5a5a" stroke-width="0.35" textLength="51.5" lengthAdjust="spacing">Display</text>
<text x="1163.0" y="187.5" font-size="16" fill="#e2e2e2" stroke="#e2e2e2" stroke-width="0.35" textLength="124.0" lengthAdjust="spacing">Viewport settings</text>
<text x="1186.5" y="211.0" font-size="13.5" fill="#e2e2e2" stroke="#e2e2e2" stroke-width="0.35" textLength="98.5" lengthAdjust="spacing">Active viewport:</text>
<text x="1295.0" y="211.0" font-size="13.5" fill="#e2e2e2" stroke="#e2e2e2" stroke-width="0.35" textLength="72.0" lengthAdjust="spacing">Perspective</text>
<text x="1198.0" y="239.0" font-size="13.5" fill="#e2e2e2" stroke="#e2e2e2" stroke-width="0.35" textLength="87.0" lengthAdjust="spacing">Display mode:</text>
<text x="1301.5" y="238.5" font-size="13.5" fill="#e2e2e2" stroke="#e2e2e2" stroke-width="0.35" textLength="80.5" lengthAdjust="spacing">Monochrome</text>
<text x="1163.0" y="271.0" font-size="13.5" fill="#e2e2e2" stroke="#e2e2e2" stroke-width="0.35" textLength="73.0" lengthAdjust="spacing">Background</text>
<text x="1252.8" y="270.5" font-size="13.5" fill="#e2e2e2" stroke="#e2e2e2" stroke-width="0.35" textLength="106.2" lengthAdjust="spacing">Gradient 4 colors</text>
<text x="1217.0" y="305.0" font-size="13.5" fill="#e2e2e2" stroke="#e2e2e2" stroke-width="0.35" textLength="85.0" lengthAdjust="spacing">Top left color:</text>
<text x="1195.0" y="342.5" font-size="13.5" fill="#e2e2e2" stroke="#e2e2e2" stroke-width="0.35" textLength="107.0" lengthAdjust="spacing">Bottom left color:</text>
<text x="1208.5" y="379.0" font-size="13.5" fill="#e2e2e2" stroke="#e2e2e2" stroke-width="0.35" textLength="93.5" lengthAdjust="spacing">Top right color:</text>
<text x="1186.5" y="415.0" font-size="13.5" fill="#e2e2e2" stroke="#e2e2e2" stroke-width="0.35" textLength="115.5" lengthAdjust="spacing">Bottom right color:</text>
<text x="1163.0" y="456.0" font-size="16" fill="#e2e2e2" stroke="#e2e2e2" stroke-width="0.35" textLength="116.0" lengthAdjust="spacing">General settings</text>
<text x="1204.0" y="494.0" font-size="13.5" fill="#5c5c5c" stroke="#5c5c5c" stroke-width="0.35" textLength="74.0" lengthAdjust="spacing">Flat shading</text>
<text x="1204.0" y="519.0" font-size="13.5" fill="#5c5c5c" stroke="#5c5c5c" stroke-width="0.35" textLength="121.8" lengthAdjust="spacing">Shade vertex colors</text>
<text x="1204.0" y="543.0" font-size="13.5" fill="#ececec" stroke="#ececec" stroke-width="0.35" textLength="55.0" lengthAdjust="spacing">Shadows</text>
<text x="1204.0" y="568.0" font-size="13.5" fill="#5c5c5c" stroke="#5c5c5c" stroke-width="0.35" textLength="110.0" lengthAdjust="spacing">Surface isocurves</text>
<text x="1151.0" y="662.5" font-size="13.5" fill="#e2e2e2" stroke="#e2e2e2" stroke-width="0.35" textLength="40.5" lengthAdjust="spacing">Object</text>
<text x="1317.0" y="687.5" font-size="13.5" fill="#e2e2e2" stroke="#e2e2e2" stroke-width="0.35" textLength="29.5" lengthAdjust="spacing">Type</text>
<text x="1311.5" y="716.0" font-size="13.5" fill="#e2e2e2" stroke="#e2e2e2" stroke-width="0.35" textLength="35.0" lengthAdjust="spacing">Name</text>
<text x="1313.0" y="746.0" font-size="13.5" fill="#e2e2e2" stroke="#e2e2e2" stroke-width="0.35" textLength="33.5" lengthAdjust="spacing">Layer</text>
<text x="1264.8" y="775.0" font-size="13.5" fill="#e2e2e2" stroke="#e2e2e2" stroke-width="0.35" textLength="81.8" lengthAdjust="spacing">Display Color</text>
<text x="1263.0" y="803.0" font-size="13.5" fill="#e2e2e2" stroke="#e2e2e2" stroke-width="0.35" textLength="83.5" lengthAdjust="spacing">Display Mode</text>
<text x="1293.5" y="831.0" font-size="13.5" fill="#e2e2e2" stroke="#e2e2e2" stroke-width="0.35" textLength="53.0" lengthAdjust="spacing">Linetype</text>
<text x="1256.5" y="863.0" font-size="13.5" fill="#e2e2e2" stroke="#e2e2e2" stroke-width="0.35" textLength="90.0" lengthAdjust="spacing">Linetype Scale</text>
<text x="1281.5" y="891.0" font-size="13.5" fill="#e2e2e2" stroke="#e2e2e2" stroke-width="0.35" textLength="65.0" lengthAdjust="spacing">Print Color</text>
<text x="1389.0" y="687.5" font-size="13.5" fill="#e2e2e2" stroke="#e2e2e2" stroke-width="0.35" textLength="149.0" lengthAdjust="spacing">closed solid polysurface</text>
<text x="1363.0" y="717.5" font-size="13.5" fill="#e2e2e2" stroke="#e2e2e2" stroke-width="0.35" textLength="40.5" lengthAdjust="spacing">brep_1</text>
<text x="1385.8" y="746.0" font-size="13.5" fill="#e2e2e2" stroke="#e2e2e2" stroke-width="0.35" textLength="53.2" lengthAdjust="spacing">Layer 02</text>
<text x="1412.8" y="775.0" font-size="13.5" fill="#e2e2e2" stroke="#e2e2e2" stroke-width="0.35" textLength="58.8" lengthAdjust="spacing">Custom...</text>
<text x="1365.8" y="803.0" font-size="13.5" fill="#e2e2e2" stroke="#e2e2e2" stroke-width="0.35" textLength="49.0" lengthAdjust="spacing">By View</text>
<text x="1365.8" y="831.0" font-size="13.5" fill="#e2e2e2" stroke="#e2e2e2" stroke-width="0.35" textLength="52.8" lengthAdjust="spacing">By Layer</text>
<text x="1363.0" y="863.8" font-size="16" fill="#e2e2e2" stroke="#e2e2e2" stroke-width="0.35" textLength="39.0" lengthAdjust="spacing">1.000</text>
<text x="1412.8" y="891.0" font-size="13.5" fill="#e2e2e2" stroke="#e2e2e2" stroke-width="0.35" textLength="52.8" lengthAdjust="spacing">By Layer</text>
<text x="-11.0" y="1040.0" font-size="13.5" fill="#a9a9a9" stroke="#a9a9a9" stroke-width="0.35" textLength="43.0" lengthAdjust="spacing">CPlane</text>
<text x="85.5" y="1040.0" font-size="13.5" fill="#a9a9a9" stroke="#a9a9a9" stroke-width="0.35" textLength="146.5" lengthAdjust="spacing">X -44.167 Y -28.611 Z 0</text>
<text x="287.0" y="1040.0" font-size="13.5" fill="#a9a9a9" stroke="#a9a9a9" stroke-width="0.35" textLength="67.5" lengthAdjust="spacing">Millimeters</text>
<text x="411.0" y="1040.0" font-size="13.5" fill="#bdbdbd" stroke="#bdbdbd" stroke-width="0.35" textLength="53.0" lengthAdjust="spacing">Layer 02</text>
<text x="524.0" y="1040.0" font-size="13.5" fill="#a9a9a9" stroke="#a9a9a9" stroke-width="0.35" textLength="61.0" lengthAdjust="spacing">Grid Snap</text>
<text x="609.0" y="1040.0" font-size="13.5" fill="#a9a9a9" stroke="#a9a9a9" stroke-width="0.35" textLength="35.0" lengthAdjust="spacing">Ortho</text>
<text x="669.0" y="1040.0" font-size="13.5" fill="#a9a9a9" stroke="#a9a9a9" stroke-width="0.35" textLength="38.0" lengthAdjust="spacing">Planar</text>
<text x="730.5" y="1040.0" font-size="13.5" fill="#ffffff" font-weight="bold" textLength="42.0" lengthAdjust="spacing">Osnap</text>
<text x="794.0" y="1040.0" font-size="13.5" fill="#ffffff" font-weight="bold" textLength="77.0" lengthAdjust="spacing">SmartTrack</text>
<text x="892.0" y="1040.0" font-size="13.5" fill="#ffffff" font-weight="bold" textLength="114.0" lengthAdjust="spacing">Gumball (CPlane)</text>
<text x="1051.0" y="1040.0" font-size="13.5" fill="#ffffff" font-weight="bold" textLength="136.5" lengthAdjust="spacing">Auto CPlane (Object)</text>
<text x="1209.5" y="1040.0" font-size="13.5" fill="#8a8a8a" stroke="#8a8a8a" stroke-width="0.35" textLength="90.0" lengthAdjust="spacing">Record History</text>
<text x="145.0" y="1008.0" font-size="16" fill="#1c78ea" stroke="#1c78ea" stroke-width="0.35" textLength="83.0" lengthAdjust="spacing">Perspective</text>
<text x="276.0" y="1008.0" font-size="16" fill="#a4a4a4" stroke="#a4a4a4" stroke-width="0.35" textLength="25.0" lengthAdjust="spacing">Top</text>
<text x="348.5" y="1008.0" font-size="16" fill="#a4a4a4" stroke="#a4a4a4" stroke-width="0.35" textLength="37.0" lengthAdjust="spacing">Front</text>
<text x="433.0" y="1008.0" font-size="16" fill="#a4a4a4" stroke="#a4a4a4" stroke-width="0.35" textLength="36.5" lengthAdjust="spacing">Right</text>
<text x="518.0" y="1008.0" font-size="16" fill="#a4a4a4" stroke="#a4a4a4" stroke-width="0.35" textLength="68.0" lengthAdjust="spacing">Layouts...</text>
</g>

<!-- ===== white cutout masks ===== -->
<path d="M0,0 H298 V211 A40,40 0 0 1 258,251 H38 A38,38 0 0 0 0,289 Z" fill="#fff"/>
<path d="M1519,0 V1140 H1263 V928 A40,40 0 0 1 1303,888 H1475 A42,42 0 0 0 1517.5,846 V0 Z" fill="#fff"/>

</svg>
</body></html>
